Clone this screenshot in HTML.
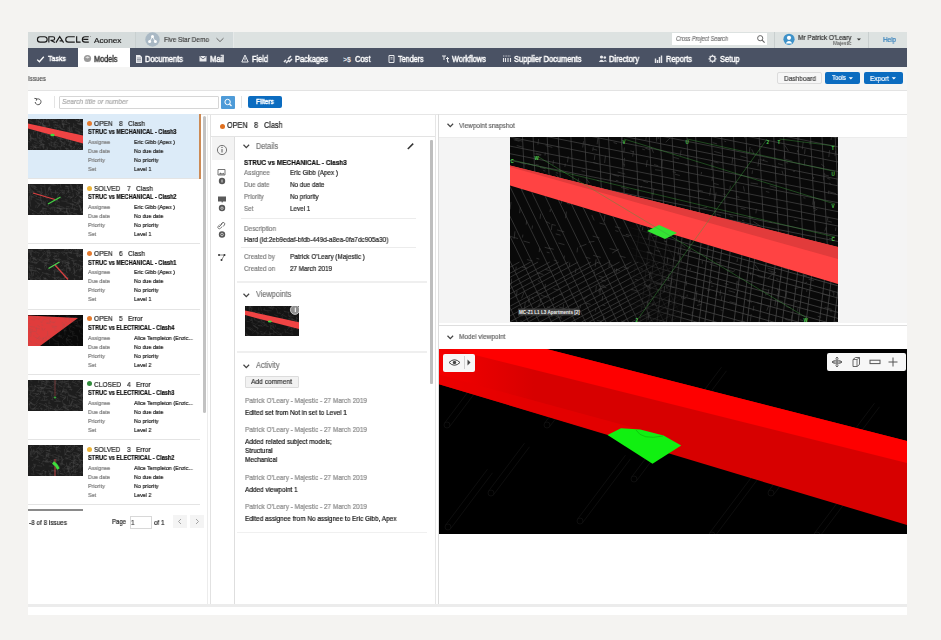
<!DOCTYPE html><html><head><meta charset="utf-8"><style>*{box-sizing:border-box;margin:0;padding:0}html,body{width:941px;height:640px;overflow:hidden;background:#f4f3f1;font-family:"Liberation Sans",sans-serif}.a{position:absolute;white-space:nowrap}.t{line-height:1;transform-origin:0 0;will-change:transform;-webkit-text-stroke:0.2px currentColor}svg.a{overflow:hidden}</style></head><body>
<div class="a" style="left:28px;top:32px;width:879px;height:16px;background:#dde2e1;"></div>
<div class="a" style="left:28px;top:32px;width:107px;height:16px;background:#d6dcdc;"></div>
<div class="a" style="left:136px;top:32px;width:97px;height:16px;background:#d3dadb;"></div>
<div class="a" style="left:135px;top:32px;width:1px;height:16px;background:#c9d0d0;"></div>
<div class="a" style="left:233px;top:32px;width:1px;height:16px;background:#e6e9e9;"></div>
<svg class="a" style="left:36px;top:35px;" width="58" height="9" viewBox="0 0 58 9"><g fill="none" stroke="#1a1a1a" stroke-width="1.15"><path d="M4.1 1.75H8.5A2.65 2.65 0 0 1 8.5 7.05H4.1A2.65 2.65 0 0 1 4.1 1.75Z"/><path d="M12.85 7.6V1.75H16.9A1.75 1.75 0 0 1 16.9 5.25H14.6L18.9 7.6"/><path d="M19.9 7.6L23.7 1.6L27.6 7.6M23.6 5.9H26.2"/><path d="M38.8 1.75H32.4A2.65 2.65 0 0 0 32.4 7.05H38.8"/><path d="M40.65 1.2V7.05H44.6"/><path d="M52.8 1.75H49A2.65 2.65 0 0 0 49 7.05H52.8M47.2 4.4H52.3"/></g><circle cx="54.6" cy="1.6" r=".45" fill="#444"/></svg>
<div class="a t" style="left:93.50px;top:36.56px;font-size:7.85px;color:#222;transform:scaleX(1.050);">Aconex</div>
<svg class="a" style="left:145px;top:32px;" width="16" height="16" viewBox="0 0 16 16"><circle cx="7.5" cy="7.5" r="7.2" fill="#a9b8c4"/><circle cx="7.5" cy="4.6" r="1.5" fill="#fff"/><circle cx="4.6" cy="9.6" r="1.5" fill="#fff"/><circle cx="10.4" cy="9.6" r="1.5" fill="#fff"/><path d="M7.5 4.6L4.6 9.6M7.5 4.6L10.4 9.6" stroke="#fff" stroke-width=".8"/></svg>
<div class="a t" style="left:164.00px;top:36.05px;font-size:7.27px;color:#444;transform:scaleX(0.891);">Five Star Demo</div>
<svg class="a" style="left:214px;top:35px;" width="12" height="10" viewBox="0 0 12 10"><path d="M2.5 3.2L6 6.6L9.5 3.2" fill="none" stroke="#666" stroke-width="1"/></svg>
<div class="a" style="left:672px;top:33px;width:95px;height:12px;background:#fff;"></div>
<div class="a t" style="left:675.50px;top:36.20px;font-size:6.33px;color:#777;transform:scaleX(0.870);font-style:italic;">Cross Project Search</div>
<svg class="a" style="left:756px;top:34px;" width="10" height="10" viewBox="0 0 10 10"><circle cx="4.2" cy="4.2" r="2.6" fill="none" stroke="#666" stroke-width="1"/><path d="M6.1 6.1L8.6 8.6" stroke="#666" stroke-width="1.2"/></svg>
<div class="a" style="left:774px;top:32px;width:1px;height:16px;background:#c9cfcf;"></div>
<svg class="a" style="left:783px;top:33px;" width="13" height="13" viewBox="0 0 13 13"><circle cx="6" cy="6.3" r="5.6" fill="#3f92c9"/><circle cx="6" cy="4.8" r="2.1" fill="#fff"/><path d="M2.6 10.4Q6 5.8 9.4 10.4Z" fill="#fff"/></svg>
<div class="a t" style="left:798.00px;top:33.82px;font-size:7.46px;color:#333;transform:scaleX(0.870);">Mr Patrick O'Leary</div>
<div class="a t" style="left:833.00px;top:41.28px;font-size:5.80px;color:#444;transform:scaleX(0.870);-webkit-text-stroke:0;">Majestic</div>
<svg class="a" style="left:856px;top:37px;" width="6" height="5" viewBox="0 0 6 5"><path d="M0.8 1.5L5 1.5L2.9 3.6Z" fill="#333"/></svg>
<div class="a" style="left:868px;top:32px;width:1px;height:16px;background:#c9cfcf;"></div>
<div class="a t" style="left:883.00px;top:36.05px;font-size:7.27px;color:#2b7bb9;transform:scaleX(0.870);">Help</div>
<div class="a" style="left:28px;top:48px;width:879px;height:19px;background:#4a5264;"></div>
<div class="a" style="left:78px;top:48px;width:52px;height:19px;background:#fff;"></div>
<div class="a t" style="left:48.00px;top:54.94px;font-size:7.97px;color:#fff;transform:scaleX(0.870);-webkit-text-stroke:0.45px #fff;">Tasks</div>
<div class="a t" style="left:145.00px;top:54.83px;font-size:8.64px;color:#fff;transform:scaleX(0.870);-webkit-text-stroke:0.45px #fff;">Documents</div>
<div class="a t" style="left:210.00px;top:54.81px;font-size:8.78px;color:#fff;transform:scaleX(0.870);-webkit-text-stroke:0.45px #fff;">Mail</div>
<div class="a t" style="left:251.50px;top:54.85px;font-size:8.48px;color:#fff;transform:scaleX(0.870);-webkit-text-stroke:0.45px #fff;">Field</div>
<div class="a t" style="left:295.00px;top:54.83px;font-size:8.64px;color:#fff;transform:scaleX(0.870);-webkit-text-stroke:0.45px #fff;">Packages</div>
<div class="a t" style="left:355.00px;top:54.83px;font-size:8.66px;color:#fff;transform:scaleX(0.870);-webkit-text-stroke:0.45px #fff;">Cost</div>
<div class="a t" style="left:398.00px;top:54.88px;font-size:8.30px;color:#fff;transform:scaleX(0.870);-webkit-text-stroke:0.45px #fff;">Tenders</div>
<div class="a t" style="left:452.00px;top:54.86px;font-size:8.47px;color:#fff;transform:scaleX(0.870);-webkit-text-stroke:0.45px #fff;">Workflows</div>
<div class="a t" style="left:513.50px;top:54.83px;font-size:8.62px;color:#fff;transform:scaleX(0.870);-webkit-text-stroke:0.45px #fff;">Supplier Documents</div>
<div class="a t" style="left:608.50px;top:54.83px;font-size:8.62px;color:#fff;transform:scaleX(0.870);-webkit-text-stroke:0.45px #fff;">Directory</div>
<div class="a t" style="left:666.00px;top:54.85px;font-size:8.54px;color:#fff;transform:scaleX(0.870);-webkit-text-stroke:0.45px #fff;">Reports</div>
<div class="a t" style="left:719.50px;top:54.84px;font-size:8.58px;color:#fff;transform:scaleX(0.870);-webkit-text-stroke:0.45px #fff;">Setup</div>
<div class="a t" style="left:94.00px;top:54.87px;font-size:8.38px;color:#333;transform:scaleX(0.870);-webkit-text-stroke:0.4px #333;">Models</div>
<svg class="a" style="left:36px;top:54.5px;" width="9" height="9" viewBox="0 0 9 9"><path d="M1.2 4.6L3.4 6.8L7.8 1.8" fill="none" stroke="#fff" stroke-width="1.3"/></svg>
<svg class="a" style="left:83px;top:53.5px;" width="9" height="9" viewBox="0 0 9 9"><circle cx="4.5" cy="4.5" r="3.6" fill="#9a9a9a"/><path d="M2.2 3.4L4.5 2.3L6.8 3.4L4.5 4.5Z" fill="#ddd"/></svg>
<svg class="a" style="left:135px;top:53.5px;" width="8" height="10" viewBox="0 0 8 10"><path d="M1 1H5L7 3V9H1Z" fill="#e8e9ec"/><path d="M2 4H6M2 5.5H6M2 7H6" stroke="#4a5264" stroke-width=".5"/></svg>
<svg class="a" style="left:199px;top:54.5px;" width="9" height="8" viewBox="0 0 9 8"><path d="M0.5 1H7.5V6.5H0.5Z" fill="#e8e9ec"/><path d="M0.8 1.3L4 4L7.2 1.3" fill="none" stroke="#4a5264" stroke-width=".8"/></svg>
<svg class="a" style="left:241px;top:53.5px;" width="8" height="10" viewBox="0 0 8 10"><path d="M4 1L7.2 8H0.8Z" fill="none" stroke="#e8e9ec" stroke-width="1"/><path d="M4 3.5V6.5" stroke="#e8e9ec" stroke-width="1"/></svg>
<svg class="a" style="left:283px;top:53.5px;" width="10" height="10" viewBox="0 0 10 10"><path d="M1 8L3 6M3 9L6 6M5 5L8 2M6 8L9 5" stroke="#e8e9ec" stroke-width="1.6"/></svg>
<svg class="a" style="left:343px;top:53.5px;" width="10" height="10" viewBox="0 0 10 10"><text x="0" y="7.5" font-size="7" fill="#e8e9ec" font-family="Liberation Sans" font-weight="bold">&gt;$</text></svg>
<svg class="a" style="left:388px;top:53.5px;" width="8" height="10" viewBox="0 0 8 10"><path d="M1 1.5H6V8.5H1Z" fill="none" stroke="#e8e9ec" stroke-width="1"/><path d="M2.5 3.5H4.5M2.5 5H4.5" stroke="#e8e9ec" stroke-width=".7"/></svg>
<svg class="a" style="left:441px;top:53.5px;" width="9" height="10" viewBox="0 0 9 10"><path d="M1 2H5M3 2V6M5 4.5H8M6.5 3V8H8" fill="none" stroke="#e8e9ec" stroke-width="1"/></svg>
<svg class="a" style="left:502px;top:53.5px;" width="10" height="10" viewBox="0 0 10 10"><path d="M1 2H9" stroke="#e8e9ec" stroke-width=".8" stroke-dasharray="1 .6"/><path d="M1.5 4V8M3.5 4V8M6 4V8M8.5 4V8" stroke="#e8e9ec" stroke-width="1.1"/></svg>
<svg class="a" style="left:598px;top:53.5px;" width="10" height="10" viewBox="0 0 10 10"><circle cx="3.5" cy="3" r="1.6" fill="#e8e9ec"/><path d="M0.8 8Q3.5 3.5 6.2 8Z" fill="#e8e9ec"/><circle cx="6.8" cy="3.5" r="1.3" fill="#e8e9ec"/><path d="M5.5 7.5Q7 4.5 9 7.5" fill="#e8e9ec"/></svg>
<svg class="a" style="left:654px;top:53.5px;" width="10" height="10" viewBox="0 0 10 10"><path d="M1.5 4.5V9M3.5 6V9M5.5 3V9M7.5 1.5V9" stroke="#e8e9ec" stroke-width="1.4"/></svg>
<svg class="a" style="left:708px;top:53.5px;" width="10" height="10" viewBox="0 0 10 10"><circle cx="4.5" cy="4.8" r="2.6" fill="none" stroke="#e8e9ec" stroke-width="1.3"/><path d="M4.5 0.8V2M4.5 7.6V8.8M0.5 4.8H1.7M7.3 4.8H8.5M1.7 2L2.5 2.8M6.5 6.8L7.3 7.6M1.7 7.6L2.5 6.8M6.5 2.8L7.3 2" stroke="#e8e9ec" stroke-width="1.2"/></svg>
<div class="a" style="left:28px;top:67px;width:879px;height:23px;background:#f5f5f4;"></div>
<div class="a t" style="left:28.00px;top:75.45px;font-size:7.27px;color:#555;transform:scaleX(0.857);">Issues</div>
<div class="a" style="left:777px;top:72px;width:45px;height:12px;background:#f6f6f6;border:1px solid #dcdcdc;border-radius:2px;"></div>
<div class="a t" style="left:784.00px;top:74.61px;font-size:7.52px;color:#444;transform:scaleX(0.870);">Dashboard</div>
<div class="a" style="left:825px;top:72px;width:35px;height:12px;background:#0b6cc0;border-radius:2px;"></div>
<div class="a t" style="left:831.50px;top:74.72px;font-size:6.82px;color:#fff;transform:scaleX(0.870);">Tools</div>
<svg class="a" style="left:848px;top:76px;" width="6" height="5" viewBox="0 0 6 5"><path d="M0.7 1.2L5 1.2L2.85 3.6Z" fill="#fff"/></svg>
<div class="a" style="left:864px;top:72px;width:39px;height:12px;background:#0b6cc0;border-radius:2px;"></div>
<div class="a t" style="left:870.00px;top:74.60px;font-size:7.56px;color:#fff;transform:scaleX(0.870);">Export</div>
<svg class="a" style="left:891px;top:76px;" width="6" height="5" viewBox="0 0 6 5"><path d="M0.7 1.2L5 1.2L2.85 3.6Z" fill="#fff"/></svg>
<div class="a" style="left:28px;top:90px;width:879px;height:1px;background:#e3e3e3;"></div>
<div class="a" style="left:28px;top:91px;width:879px;height:23px;background:#fff;"></div>
<svg class="a" style="left:33px;top:97px;" width="10" height="10" viewBox="0 0 10 10"><path d="M2.2 5A2.9 2.9 0 1 0 3.1 2.7" fill="none" stroke="#555" stroke-width="1"/><path d="M1.4 1.4L3.6 1.6L3.3 3.7" fill="none" stroke="#555" stroke-width="1"/></svg>
<div class="a" style="left:54px;top:96px;width:1px;height:12px;background:#e4e4e4;"></div>
<div class="a" style="left:59px;top:96px;width:160px;height:13px;background:#fff;border:1px solid #d6d6d6;border-radius:1px;"></div>
<div class="a t" style="left:61.50px;top:98.38px;font-size:7.71px;color:#aaa;transform:scaleX(0.870);font-style:italic;">Search title or number</div>
<div class="a" style="left:221px;top:96px;width:14px;height:13px;background:#4e9bd8;border-radius:1px;"></div>
<svg class="a" style="left:222px;top:97px;" width="12" height="11" viewBox="0 0 12 11"><circle cx="5.6" cy="5" r="2.7" fill="none" stroke="#fff" stroke-width="1"/><path d="M7.5 7L9.5 9" stroke="#fff" stroke-width="1.2"/></svg>
<div class="a" style="left:241px;top:96px;width:1px;height:12px;background:#e4e4e4;"></div>
<div class="a" style="left:248px;top:96px;width:34px;height:12px;background:#0b6cc0;border-radius:2px;"></div>
<div class="a t" style="left:256.00px;top:98.29px;font-size:7.60px;color:#fff;transform:scaleX(0.870);-webkit-text-stroke:0.4px #fff;">Filters</div>
<div class="a" style="left:28px;top:114px;width:879px;height:1px;background:#e6e6e6;"></div>
<div class="a" style="left:28px;top:115px;width:879px;height:489px;background:#fff;"></div>
<div class="a" style="left:28px;top:114.0px;width:172px;height:65px;background:#dcebf8;"></div>
<div class="a" style="left:28px;top:178.2px;width:172px;height:1px;background:#e4e4e4;"></div>
<svg class="a" style="left:28px;top:119.0px;" width="55" height="31" viewBox="0 0 55 31"><rect width="55" height="31" fill="#1d1d1d"/><g stroke="#7a7a7a" stroke-width="0.4" opacity="0.5"><line x1="13.1" y1="16.9" x2="13.6" y2="13.3"/><line x1="31.9" y1="18.8" x2="35.5" y2="20.6"/><line x1="10.5" y1="22.2" x2="14.0" y2="23.4"/><line x1="35.1" y1="4.7" x2="38.5" y2="0.1"/><line x1="21.4" y1="0.5" x2="26.1" y2="2.0"/><line x1="32.5" y1="9.3" x2="35.0" y2="10.3"/><line x1="32.7" y1="28.5" x2="33.2" y2="34.1"/><line x1="21.7" y1="24.8" x2="21.7" y2="26.9"/><line x1="20.1" y1="1.1" x2="21.7" y2="6.7"/><line x1="24.0" y1="19.4" x2="23.7" y2="14.2"/><line x1="31.6" y1="16.6" x2="32.3" y2="22.1"/><line x1="37.5" y1="28.8" x2="41.4" y2="30.5"/><line x1="38.3" y1="21.7" x2="39.1" y2="16.2"/><line x1="31.3" y1="22.1" x2="36.9" y2="24.2"/><line x1="14.7" y1="3.9" x2="14.9" y2="9.8"/><line x1="4.9" y1="24.8" x2="4.9" y2="26.4"/><line x1="23.5" y1="12.9" x2="27.7" y2="13.2"/><line x1="2.5" y1="22.3" x2="2.4" y2="16.6"/><line x1="15.3" y1="7.3" x2="17.2" y2="7.6"/><line x1="33.0" y1="1.0" x2="35.5" y2="2.3"/><line x1="14.5" y1="21.4" x2="17.3" y2="22.7"/><line x1="7.6" y1="26.7" x2="8.3" y2="30.5"/><line x1="35.4" y1="18.5" x2="41.3" y2="18.7"/><line x1="44.6" y1="8.4" x2="46.6" y2="6.7"/><line x1="16.6" y1="30.3" x2="19.6" y2="30.7"/><line x1="43.4" y1="30.6" x2="42.4" y2="26.4"/><line x1="34.8" y1="1.9" x2="36.8" y2="-0.5"/><line x1="50.5" y1="18.9" x2="50.6" y2="17.3"/><line x1="3.3" y1="21.0" x2="2.9" y2="17.4"/><line x1="32.6" y1="9.9" x2="31.8" y2="5.1"/><line x1="46.4" y1="8.2" x2="50.9" y2="10.4"/><line x1="1.5" y1="17.6" x2="3.7" y2="14.6"/><line x1="36.0" y1="8.4" x2="35.4" y2="4.9"/><line x1="38.4" y1="3.2" x2="39.1" y2="-1.3"/><line x1="12.3" y1="25.1" x2="17.1" y2="25.7"/><line x1="12.0" y1="17.6" x2="11.7" y2="15.6"/><line x1="29.1" y1="5.9" x2="32.4" y2="8.3"/><line x1="47.5" y1="10.5" x2="51.9" y2="13.3"/><line x1="19.0" y1="4.0" x2="18.9" y2="-1.3"/><line x1="25.6" y1="19.7" x2="25.4" y2="16.3"/><line x1="50.6" y1="4.8" x2="55.7" y2="6.1"/><line x1="34.2" y1="15.8" x2="39.5" y2="17.9"/><line x1="12.2" y1="23.1" x2="16.2" y2="25.9"/><line x1="53.0" y1="16.9" x2="57.8" y2="19.2"/><line x1="53.4" y1="3.7" x2="58.9" y2="4.4"/><line x1="38.2" y1="28.6" x2="38.4" y2="30.2"/><line x1="41.0" y1="5.3" x2="40.8" y2="3.8"/><line x1="29.5" y1="1.7" x2="31.6" y2="1.7"/><line x1="53.5" y1="16.8" x2="56.0" y2="18.5"/><line x1="10.9" y1="16.6" x2="13.3" y2="17.5"/><line x1="15.1" y1="27.6" x2="16.5" y2="28.2"/><line x1="34.6" y1="26.7" x2="37.0" y2="27.6"/><line x1="34.0" y1="16.1" x2="38.8" y2="17.3"/><line x1="0.1" y1="1.7" x2="1.8" y2="1.9"/><line x1="26.6" y1="1.0" x2="28.7" y2="-2.1"/><line x1="17.4" y1="9.8" x2="17.1" y2="6.5"/><line x1="16.7" y1="8.2" x2="16.6" y2="6.1"/><line x1="0.2" y1="22.4" x2="2.4" y2="23.2"/><line x1="20.5" y1="18.7" x2="24.3" y2="20.9"/><line x1="2.4" y1="27.5" x2="6.0" y2="28.2"/><line x1="38.7" y1="13.0" x2="39.7" y2="11.9"/><line x1="12.0" y1="8.4" x2="15.4" y2="8.5"/><line x1="23.4" y1="27.3" x2="23.0" y2="21.7"/><line x1="43.5" y1="8.1" x2="44.0" y2="13.8"/><line x1="40.2" y1="26.3" x2="44.5" y2="27.7"/><line x1="40.4" y1="17.5" x2="44.8" y2="19.2"/><line x1="26.0" y1="7.3" x2="26.7" y2="9.1"/><line x1="5.5" y1="27.3" x2="8.2" y2="28.6"/><line x1="46.9" y1="0.8" x2="51.9" y2="2.4"/><line x1="52.4" y1="18.0" x2="58.0" y2="19.9"/><line x1="31.0" y1="16.4" x2="35.8" y2="17.1"/><line x1="51.4" y1="1.9" x2="51.7" y2="-0.4"/><line x1="4.3" y1="30.9" x2="6.9" y2="27.6"/><line x1="41.4" y1="12.2" x2="41.5" y2="6.5"/><line x1="30.6" y1="30.0" x2="31.6" y2="35.7"/><line x1="22.7" y1="23.2" x2="26.6" y2="24.2"/><line x1="31.9" y1="28.6" x2="34.9" y2="25.5"/><line x1="49.4" y1="4.6" x2="52.9" y2="5.5"/><line x1="38.4" y1="29.5" x2="40.7" y2="30.1"/><line x1="14.7" y1="6.2" x2="20.3" y2="7.3"/><line x1="46.8" y1="16.7" x2="51.1" y2="18.6"/><line x1="22.7" y1="26.5" x2="27.8" y2="28.6"/><line x1="16.9" y1="8.3" x2="18.9" y2="9.3"/><line x1="19.8" y1="10.0" x2="22.5" y2="12.0"/><line x1="38.4" y1="21.7" x2="43.4" y2="23.2"/><line x1="45.2" y1="17.3" x2="45.1" y2="19.1"/><line x1="52.1" y1="24.3" x2="54.6" y2="24.9"/><line x1="12.9" y1="22.2" x2="14.3" y2="20.2"/><line x1="14.0" y1="27.6" x2="16.1" y2="28.5"/><line x1="38.8" y1="26.6" x2="38.5" y2="24.9"/><line x1="10.1" y1="2.8" x2="11.9" y2="3.4"/><line x1="45.9" y1="9.0" x2="45.6" y2="4.2"/><line x1="18.5" y1="0.9" x2="18.3" y2="-2.8"/><line x1="11.6" y1="18.1" x2="12.4" y2="22.0"/><line x1="6.6" y1="8.5" x2="8.9" y2="6.0"/><line x1="29.0" y1="7.8" x2="32.0" y2="8.9"/><line x1="42.5" y1="23.5" x2="42.6" y2="19.0"/><line x1="51.9" y1="25.3" x2="57.4" y2="27.3"/><line x1="37.0" y1="16.6" x2="40.6" y2="17.8"/><line x1="3.3" y1="9.1" x2="4.9" y2="7.5"/><line x1="35.5" y1="19.6" x2="41.0" y2="20.9"/><line x1="25.0" y1="3.4" x2="28.0" y2="3.5"/><line x1="39.6" y1="18.5" x2="42.0" y2="18.8"/><line x1="26.5" y1="24.2" x2="29.2" y2="20.3"/><line x1="41.5" y1="16.8" x2="42.8" y2="15.4"/><line x1="14.9" y1="1.7" x2="18.6" y2="2.1"/><line x1="13.6" y1="23.8" x2="14.3" y2="18.1"/><line x1="24.7" y1="25.1" x2="29.9" y2="26.1"/><line x1="6.2" y1="8.4" x2="10.0" y2="9.7"/><line x1="50.0" y1="3.5" x2="52.1" y2="0.8"/><line x1="40.9" y1="25.3" x2="43.4" y2="21.8"/><line x1="47.3" y1="24.7" x2="51.2" y2="25.6"/><line x1="11.1" y1="7.8" x2="16.0" y2="9.9"/><line x1="24.5" y1="12.6" x2="28.1" y2="14.4"/><line x1="32.1" y1="19.6" x2="34.8" y2="20.4"/><line x1="47.3" y1="15.0" x2="51.6" y2="15.3"/><line x1="5.9" y1="23.4" x2="9.6" y2="24.6"/><line x1="25.3" y1="6.0" x2="30.5" y2="6.4"/><line x1="50.9" y1="29.3" x2="56.5" y2="30.9"/><line x1="49.1" y1="4.2" x2="54.4" y2="6.1"/><line x1="1.4" y1="19.2" x2="5.3" y2="19.3"/><line x1="51.1" y1="10.0" x2="55.3" y2="12.0"/><line x1="4.4" y1="26.0" x2="8.1" y2="28.9"/><line x1="40.7" y1="10.7" x2="42.3" y2="11.3"/><line x1="11.0" y1="21.7" x2="12.9" y2="22.2"/><line x1="2.3" y1="2.4" x2="5.4" y2="3.6"/><line x1="26.0" y1="2.1" x2="30.0" y2="4.1"/><line x1="16.8" y1="14.4" x2="19.7" y2="16.3"/><line x1="25.0" y1="1.2" x2="24.8" y2="-2.0"/><line x1="29.1" y1="18.5" x2="33.6" y2="20.9"/><line x1="14.2" y1="11.5" x2="16.3" y2="12.6"/><line x1="11.5" y1="5.3" x2="12.2" y2="9.6"/><line x1="7.7" y1="18.9" x2="8.0" y2="20.6"/><line x1="1.2" y1="13.9" x2="2.9" y2="18.3"/><line x1="13.2" y1="1.2" x2="15.2" y2="6.7"/><line x1="12.0" y1="2.9" x2="12.9" y2="5.8"/><line x1="6.4" y1="28.3" x2="11.2" y2="28.4"/><line x1="15.1" y1="24.4" x2="15.5" y2="30.2"/><line x1="26.9" y1="17.4" x2="30.9" y2="19.0"/><line x1="19.0" y1="2.9" x2="20.3" y2="1.5"/><line x1="34.0" y1="3.2" x2="35.3" y2="1.4"/><line x1="2.0" y1="1.7" x2="4.1" y2="-0.5"/><line x1="49.5" y1="23.5" x2="50.0" y2="17.9"/><line x1="51.7" y1="1.1" x2="52.0" y2="-3.3"/><line x1="21.7" y1="29.4" x2="23.5" y2="30.2"/><line x1="21.4" y1="10.4" x2="24.0" y2="8.3"/><line x1="46.1" y1="26.8" x2="46.2" y2="30.8"/><line x1="50.8" y1="11.2" x2="51.5" y2="14.7"/><line x1="38.7" y1="10.7" x2="43.1" y2="12.4"/><line x1="33.3" y1="22.0" x2="33.3" y2="23.7"/><line x1="9.4" y1="23.3" x2="13.8" y2="25.6"/><line x1="37.3" y1="3.0" x2="42.1" y2="4.7"/><line x1="3.1" y1="19.0" x2="8.5" y2="20.2"/><line x1="40.3" y1="10.3" x2="39.8" y2="8.0"/><line x1="43.3" y1="28.4" x2="43.3" y2="26.4"/><line x1="4.4" y1="20.1" x2="9.9" y2="22.3"/><line x1="51.4" y1="4.4" x2="54.2" y2="4.7"/><line x1="11.5" y1="26.4" x2="16.4" y2="27.2"/><line x1="33.2" y1="24.4" x2="36.7" y2="25.6"/><line x1="34.2" y1="1.3" x2="35.7" y2="1.8"/><line x1="53.2" y1="6.2" x2="52.5" y2="2.7"/><line x1="12.3" y1="25.7" x2="15.9" y2="25.9"/><line x1="36.8" y1="21.7" x2="37.2" y2="25.2"/><line x1="6.1" y1="25.9" x2="9.3" y2="26.5"/><line x1="6.4" y1="0.2" x2="6.5" y2="-1.6"/><line x1="19.0" y1="15.0" x2="23.2" y2="16.9"/><line x1="20.1" y1="24.3" x2="22.4" y2="25.0"/><line x1="19.3" y1="30.9" x2="18.8" y2="27.4"/><line x1="13.8" y1="10.0" x2="17.7" y2="7.2"/><line x1="48.1" y1="30.6" x2="52.7" y2="31.5"/><line x1="46.9" y1="11.4" x2="52.1" y2="14.0"/><line x1="26.6" y1="24.0" x2="27.4" y2="28.1"/><line x1="1.9" y1="29.7" x2="3.8" y2="29.9"/><line x1="39.7" y1="9.1" x2="43.4" y2="9.2"/><line x1="10.7" y1="6.4" x2="11.3" y2="9.4"/><line x1="40.8" y1="23.2" x2="40.2" y2="19.7"/><line x1="50.0" y1="13.8" x2="54.8" y2="14.6"/><line x1="38.5" y1="30.3" x2="41.1" y2="32.2"/><line x1="8.9" y1="9.7" x2="10.0" y2="15.6"/><line x1="12.2" y1="29.7" x2="11.8" y2="26.1"/><line x1="48.8" y1="25.0" x2="49.2" y2="19.3"/><line x1="28.6" y1="0.4" x2="31.3" y2="-2.3"/><line x1="9.1" y1="1.6" x2="13.6" y2="4.0"/><line x1="19.5" y1="29.9" x2="19.8" y2="28.3"/><line x1="10.2" y1="0.4" x2="10.2" y2="5.7"/><line x1="33.2" y1="25.1" x2="33.8" y2="27.7"/><line x1="44.1" y1="13.0" x2="44.0" y2="11.3"/><line x1="2.1" y1="30.9" x2="6.6" y2="33.2"/><line x1="13.6" y1="4.2" x2="16.3" y2="6.2"/><line x1="41.3" y1="10.5" x2="43.5" y2="10.9"/><line x1="0.9" y1="19.9" x2="3.8" y2="22.2"/><line x1="36.6" y1="28.8" x2="39.5" y2="31.2"/><line x1="20.4" y1="19.6" x2="19.7" y2="15.1"/><line x1="54.6" y1="17.0" x2="54.8" y2="20.5"/><line x1="15.3" y1="7.9" x2="15.7" y2="5.8"/><line x1="17.3" y1="16.2" x2="17.8" y2="18.7"/><line x1="25.2" y1="18.2" x2="24.4" y2="14.2"/><line x1="30.2" y1="15.1" x2="30.7" y2="10.2"/><line x1="14.7" y1="13.5" x2="18.5" y2="14.2"/><line x1="49.3" y1="29.8" x2="51.2" y2="27.6"/><line x1="19.0" y1="20.3" x2="20.6" y2="21.0"/><line x1="11.8" y1="1.2" x2="11.4" y2="-2.1"/><line x1="15.5" y1="4.1" x2="15.2" y2="-1.5"/><line x1="27.2" y1="29.7" x2="29.4" y2="26.5"/><line x1="40.9" y1="26.0" x2="45.2" y2="22.6"/><line x1="51.8" y1="30.2" x2="53.3" y2="28.0"/><line x1="26.6" y1="8.3" x2="28.8" y2="8.8"/><line x1="26.8" y1="5.2" x2="28.8" y2="6.2"/><line x1="54.6" y1="20.9" x2="56.4" y2="18.2"/><line x1="9.9" y1="19.4" x2="9.1" y2="14.3"/><line x1="48.1" y1="1.5" x2="51.2" y2="2.5"/><line x1="5.9" y1="12.1" x2="8.0" y2="12.4"/><line x1="8.0" y1="3.9" x2="8.6" y2="-0.2"/><line x1="51.4" y1="0.2" x2="52.4" y2="-5.6"/><line x1="13.5" y1="11.0" x2="15.2" y2="16.0"/><line x1="26.0" y1="22.9" x2="30.8" y2="24.4"/><line x1="31.3" y1="14.4" x2="33.4" y2="14.7"/><line x1="25.1" y1="11.9" x2="30.0" y2="14.8"/><line x1="46.7" y1="5.6" x2="48.5" y2="6.9"/><line x1="14.6" y1="6.3" x2="16.3" y2="6.8"/><line x1="33.8" y1="5.5" x2="39.2" y2="5.5"/><line x1="43.7" y1="30.7" x2="46.7" y2="27.3"/><line x1="15.1" y1="14.4" x2="17.3" y2="14.7"/><line x1="33.0" y1="10.0" x2="37.3" y2="11.0"/><line x1="32.5" y1="21.8" x2="36.9" y2="25.4"/><line x1="47.4" y1="25.9" x2="47.9" y2="23.1"/><line x1="10.0" y1="18.7" x2="12.8" y2="19.8"/><line x1="35.5" y1="8.8" x2="35.3" y2="5.1"/><line x1="29.2" y1="27.1" x2="32.6" y2="27.9"/><line x1="34.0" y1="2.1" x2="34.6" y2="6.3"/><line x1="16.0" y1="7.3" x2="17.3" y2="13.1"/><line x1="20.2" y1="6.7" x2="22.2" y2="7.1"/><line x1="40.3" y1="12.1" x2="43.1" y2="12.5"/><line x1="27.8" y1="12.4" x2="28.4" y2="7.8"/><line x1="5.7" y1="15.3" x2="5.3" y2="12.2"/><line x1="33.8" y1="4.3" x2="37.2" y2="4.8"/><line x1="10.8" y1="0.9" x2="14.0" y2="-1.4"/><line x1="40.6" y1="25.7" x2="42.6" y2="27.1"/><line x1="18.7" y1="18.1" x2="21.7" y2="19.2"/><line x1="26.1" y1="27.6" x2="26.1" y2="25.6"/></g><polygon points="0,4.5 55,16.5 55,24.5 0,9.5" fill="#f04444"/><ellipse cx="24.5" cy="16" rx="2.2" ry="1.2" fill="#3ddc3d"/></svg>
<div class="a" style="left:87px;top:120.5px;width:5px;height:5px;border-radius:50%;background:#e57a2e"></div>
<div class="a t" style="left:94.20px;top:119.79px;font-size:7.60px;color:#222;transform:scaleX(0.870);">OPEN</div>
<div class="a t" style="left:118.70px;top:119.79px;font-size:7.60px;color:#222;transform:scaleX(0.870);">8</div>
<div class="a t" style="left:127.90px;top:119.79px;font-size:7.60px;color:#222;transform:scaleX(0.870);">Clash</div>
<div class="a t" style="left:87.50px;top:129.29px;font-size:6.36px;color:#111;transform:scaleX(0.870);font-weight:bold;">STRUC vs MECHANICAL - Clash3</div>
<div class="a t" style="left:88.00px;top:139.02px;font-size:6.20px;color:#7c7c7c;transform:scaleX(0.870);">Assignee</div>
<div class="a t" style="left:134.00px;top:139.02px;font-size:6.20px;color:#222;transform:scaleX(0.870);">Eric Gibb (Apex )</div>
<div class="a t" style="left:88.00px;top:148.02px;font-size:6.20px;color:#7c7c7c;transform:scaleX(0.870);">Due date</div>
<div class="a t" style="left:134.00px;top:148.02px;font-size:6.20px;color:#222;transform:scaleX(0.870);">No due date</div>
<div class="a t" style="left:88.00px;top:157.02px;font-size:6.20px;color:#7c7c7c;transform:scaleX(0.870);">Priority</div>
<div class="a t" style="left:134.00px;top:157.02px;font-size:6.20px;color:#222;transform:scaleX(0.870);">No priority</div>
<div class="a t" style="left:88.00px;top:166.02px;font-size:6.20px;color:#7c7c7c;transform:scaleX(0.870);">Set</div>
<div class="a t" style="left:134.00px;top:166.02px;font-size:6.20px;color:#222;transform:scaleX(0.870);">Level 1</div>
<div class="a" style="left:28px;top:179.2px;width:172px;height:65px;background:#fff;"></div>
<div class="a" style="left:28px;top:243.39999999999998px;width:172px;height:1px;background:#e4e4e4;"></div>
<svg class="a" style="left:28px;top:184.2px;" width="55" height="31" viewBox="0 0 55 31"><rect width="55" height="31" fill="#1d1d1d"/><g stroke="#7a7a7a" stroke-width="0.4" opacity="0.5"><line x1="13.0" y1="3.2" x2="13.3" y2="5.1"/><line x1="1.1" y1="17.0" x2="1.5" y2="12.1"/><line x1="12.2" y1="16.6" x2="12.6" y2="11.4"/><line x1="14.4" y1="29.2" x2="19.2" y2="31.1"/><line x1="44.0" y1="6.0" x2="43.4" y2="0.6"/><line x1="52.9" y1="26.3" x2="52.0" y2="22.2"/><line x1="36.9" y1="15.7" x2="39.6" y2="16.2"/><line x1="52.0" y1="25.4" x2="53.4" y2="25.9"/><line x1="16.1" y1="21.9" x2="16.5" y2="18.1"/><line x1="22.8" y1="18.6" x2="23.2" y2="21.1"/><line x1="14.3" y1="24.7" x2="18.6" y2="25.0"/><line x1="15.4" y1="16.6" x2="15.6" y2="18.7"/><line x1="37.1" y1="2.1" x2="40.3" y2="3.3"/><line x1="10.1" y1="13.5" x2="14.1" y2="14.0"/><line x1="49.7" y1="3.1" x2="52.3" y2="4.0"/><line x1="32.0" y1="26.7" x2="34.3" y2="27.1"/><line x1="25.2" y1="1.3" x2="28.6" y2="-3.5"/><line x1="15.7" y1="20.9" x2="15.1" y2="18.2"/><line x1="53.1" y1="24.0" x2="53.3" y2="29.4"/><line x1="37.4" y1="2.4" x2="40.9" y2="2.7"/><line x1="7.5" y1="11.8" x2="9.0" y2="12.2"/><line x1="2.5" y1="5.3" x2="7.3" y2="8.7"/><line x1="31.4" y1="13.6" x2="33.8" y2="14.3"/><line x1="3.3" y1="1.7" x2="8.8" y2="3.7"/><line x1="33.4" y1="16.9" x2="39.3" y2="17.5"/><line x1="6.7" y1="16.4" x2="10.1" y2="19.3"/><line x1="11.0" y1="6.3" x2="11.4" y2="7.9"/><line x1="23.2" y1="7.7" x2="23.3" y2="11.4"/><line x1="1.7" y1="7.9" x2="6.5" y2="9.4"/><line x1="22.9" y1="8.1" x2="21.8" y2="2.6"/><line x1="31.1" y1="30.7" x2="31.0" y2="35.1"/><line x1="47.9" y1="22.2" x2="49.8" y2="22.7"/><line x1="11.6" y1="27.1" x2="15.9" y2="28.1"/><line x1="44.0" y1="19.9" x2="46.2" y2="21.0"/><line x1="44.1" y1="24.8" x2="44.9" y2="19.1"/><line x1="4.1" y1="30.1" x2="5.4" y2="29.0"/><line x1="49.4" y1="4.0" x2="49.5" y2="2.2"/><line x1="9.2" y1="19.7" x2="12.5" y2="20.3"/><line x1="21.5" y1="24.7" x2="22.9" y2="25.4"/><line x1="48.2" y1="3.6" x2="50.8" y2="5.4"/><line x1="12.2" y1="1.7" x2="16.4" y2="2.4"/><line x1="45.0" y1="17.4" x2="48.4" y2="19.2"/><line x1="1.5" y1="1.1" x2="5.5" y2="1.2"/><line x1="14.1" y1="24.0" x2="19.0" y2="25.0"/><line x1="28.8" y1="0.3" x2="30.4" y2="1.1"/><line x1="52.8" y1="14.1" x2="55.4" y2="15.2"/><line x1="12.9" y1="15.1" x2="13.5" y2="17.0"/><line x1="34.2" y1="27.4" x2="37.3" y2="28.8"/><line x1="39.1" y1="13.8" x2="41.0" y2="12.3"/><line x1="16.6" y1="25.9" x2="17.9" y2="29.7"/><line x1="20.4" y1="5.0" x2="22.6" y2="2.0"/><line x1="18.6" y1="16.8" x2="20.1" y2="17.3"/><line x1="17.1" y1="16.9" x2="17.4" y2="21.1"/><line x1="28.9" y1="16.1" x2="29.0" y2="19.2"/><line x1="42.2" y1="30.6" x2="43.1" y2="29.1"/><line x1="49.9" y1="16.9" x2="50.2" y2="20.9"/><line x1="51.5" y1="15.7" x2="52.0" y2="19.2"/><line x1="7.7" y1="23.9" x2="8.2" y2="20.9"/><line x1="23.8" y1="18.8" x2="25.6" y2="17.3"/><line x1="49.6" y1="11.5" x2="53.9" y2="12.9"/><line x1="48.6" y1="2.4" x2="50.4" y2="1.0"/><line x1="36.0" y1="10.1" x2="36.5" y2="5.9"/><line x1="28.8" y1="23.4" x2="33.6" y2="25.2"/><line x1="52.4" y1="4.9" x2="56.6" y2="6.6"/><line x1="54.6" y1="2.4" x2="58.2" y2="2.8"/><line x1="48.7" y1="6.9" x2="51.1" y2="8.6"/><line x1="51.0" y1="12.6" x2="54.7" y2="12.9"/><line x1="12.2" y1="11.4" x2="14.9" y2="8.1"/><line x1="54.8" y1="27.9" x2="55.8" y2="33.6"/><line x1="17.2" y1="13.6" x2="19.5" y2="13.6"/><line x1="29.7" y1="21.5" x2="32.9" y2="22.6"/><line x1="21.4" y1="0.9" x2="27.3" y2="1.0"/><line x1="54.3" y1="28.5" x2="59.6" y2="30.3"/><line x1="41.6" y1="15.0" x2="46.0" y2="11.7"/><line x1="42.8" y1="4.6" x2="44.9" y2="4.9"/><line x1="2.6" y1="12.3" x2="6.4" y2="13.4"/><line x1="52.8" y1="8.1" x2="57.6" y2="8.6"/><line x1="11.3" y1="29.4" x2="13.1" y2="29.6"/><line x1="54.6" y1="9.0" x2="58.2" y2="5.8"/><line x1="36.0" y1="29.5" x2="39.1" y2="26.9"/><line x1="38.2" y1="22.4" x2="41.5" y2="22.6"/><line x1="11.8" y1="9.2" x2="14.1" y2="9.3"/><line x1="48.1" y1="7.9" x2="48.6" y2="10.8"/><line x1="22.0" y1="5.3" x2="23.6" y2="5.6"/><line x1="48.2" y1="0.6" x2="50.3" y2="1.4"/><line x1="46.7" y1="25.5" x2="48.2" y2="25.8"/><line x1="50.1" y1="16.5" x2="54.4" y2="18.7"/><line x1="47.8" y1="21.2" x2="51.3" y2="17.2"/><line x1="45.9" y1="18.2" x2="51.3" y2="19.5"/><line x1="19.6" y1="28.8" x2="22.9" y2="31.4"/><line x1="2.0" y1="19.6" x2="2.1" y2="14.5"/><line x1="32.5" y1="24.3" x2="32.9" y2="27.3"/><line x1="45.9" y1="27.6" x2="46.4" y2="23.2"/><line x1="38.4" y1="18.7" x2="44.1" y2="19.8"/><line x1="51.1" y1="5.5" x2="54.9" y2="6.5"/><line x1="32.9" y1="7.7" x2="35.7" y2="8.8"/><line x1="33.1" y1="4.3" x2="32.0" y2="-1.5"/><line x1="45.5" y1="15.8" x2="48.0" y2="16.0"/><line x1="15.1" y1="29.6" x2="16.3" y2="28.7"/><line x1="38.4" y1="6.6" x2="42.7" y2="8.8"/><line x1="44.9" y1="9.2" x2="45.3" y2="12.5"/><line x1="9.5" y1="15.3" x2="14.6" y2="17.2"/><line x1="16.4" y1="21.4" x2="20.8" y2="23.2"/><line x1="17.7" y1="6.7" x2="17.8" y2="12.3"/><line x1="15.2" y1="23.4" x2="15.1" y2="29.1"/><line x1="22.5" y1="23.3" x2="26.2" y2="24.0"/><line x1="1.7" y1="8.2" x2="1.8" y2="3.8"/><line x1="33.7" y1="9.7" x2="35.5" y2="10.4"/><line x1="11.6" y1="28.9" x2="14.3" y2="25.4"/><line x1="42.0" y1="20.0" x2="47.8" y2="21.4"/><line x1="9.2" y1="7.6" x2="14.0" y2="9.3"/><line x1="17.4" y1="26.9" x2="22.8" y2="28.4"/><line x1="4.2" y1="26.3" x2="8.5" y2="28.4"/><line x1="41.6" y1="24.8" x2="42.6" y2="23.5"/><line x1="17.8" y1="10.2" x2="20.5" y2="11.8"/><line x1="54.5" y1="5.3" x2="56.2" y2="5.5"/><line x1="8.8" y1="29.1" x2="11.4" y2="30.0"/><line x1="50.7" y1="20.8" x2="51.4" y2="23.1"/><line x1="7.6" y1="14.8" x2="10.5" y2="15.4"/><line x1="23.6" y1="12.6" x2="25.2" y2="13.2"/><line x1="8.4" y1="6.8" x2="13.6" y2="8.1"/><line x1="51.6" y1="21.0" x2="52.7" y2="25.6"/><line x1="51.9" y1="5.9" x2="51.3" y2="2.1"/><line x1="1.2" y1="3.7" x2="1.6" y2="-1.1"/><line x1="51.6" y1="15.4" x2="56.3" y2="17.5"/><line x1="44.1" y1="5.1" x2="44.5" y2="8.1"/><line x1="0.3" y1="21.6" x2="2.1" y2="26.3"/><line x1="40.3" y1="13.0" x2="44.4" y2="13.7"/><line x1="3.0" y1="2.4" x2="6.4" y2="4.3"/><line x1="10.0" y1="19.1" x2="11.5" y2="19.3"/><line x1="36.4" y1="11.9" x2="38.3" y2="12.7"/><line x1="2.3" y1="5.7" x2="1.7" y2="0.9"/><line x1="29.8" y1="11.5" x2="32.7" y2="8.1"/><line x1="29.9" y1="29.7" x2="29.6" y2="26.7"/><line x1="29.6" y1="16.9" x2="29.6" y2="11.5"/><line x1="27.2" y1="25.7" x2="31.0" y2="27.3"/><line x1="54.3" y1="4.4" x2="57.4" y2="0.2"/><line x1="29.6" y1="10.7" x2="31.2" y2="11.3"/><line x1="46.0" y1="4.6" x2="47.7" y2="5.0"/><line x1="26.2" y1="26.8" x2="30.8" y2="28.6"/><line x1="29.1" y1="23.4" x2="31.7" y2="24.5"/><line x1="22.9" y1="0.1" x2="28.4" y2="1.4"/><line x1="19.8" y1="6.2" x2="21.8" y2="3.4"/><line x1="50.2" y1="8.8" x2="52.2" y2="10.1"/><line x1="9.5" y1="22.2" x2="14.3" y2="18.6"/><line x1="0.6" y1="0.1" x2="0.5" y2="-3.8"/><line x1="3.6" y1="16.2" x2="3.7" y2="11.9"/><line x1="28.1" y1="17.0" x2="29.3" y2="15.3"/><line x1="53.0" y1="27.6" x2="56.3" y2="29.5"/><line x1="36.6" y1="4.1" x2="41.0" y2="4.3"/><line x1="3.9" y1="29.6" x2="6.6" y2="29.9"/><line x1="35.4" y1="24.0" x2="40.3" y2="24.7"/><line x1="28.9" y1="16.6" x2="32.0" y2="18.3"/><line x1="53.9" y1="30.9" x2="58.0" y2="31.8"/><line x1="31.4" y1="6.0" x2="35.9" y2="7.3"/><line x1="52.5" y1="14.0" x2="52.2" y2="11.8"/><line x1="52.7" y1="26.4" x2="54.9" y2="23.4"/><line x1="16.1" y1="11.4" x2="17.2" y2="9.9"/><line x1="12.8" y1="27.8" x2="14.6" y2="26.4"/><line x1="5.3" y1="30.8" x2="6.9" y2="31.3"/><line x1="51.9" y1="27.2" x2="53.6" y2="25.4"/><line x1="13.5" y1="30.0" x2="14.4" y2="34.2"/><line x1="52.2" y1="13.4" x2="57.2" y2="13.6"/><line x1="5.3" y1="1.7" x2="7.5" y2="2.2"/><line x1="37.6" y1="1.4" x2="40.3" y2="2.8"/><line x1="19.2" y1="21.1" x2="21.1" y2="21.5"/><line x1="20.8" y1="6.6" x2="21.3" y2="3.2"/><line x1="40.2" y1="12.2" x2="44.0" y2="13.0"/><line x1="41.3" y1="2.9" x2="44.9" y2="3.2"/><line x1="40.6" y1="23.5" x2="41.7" y2="27.9"/><line x1="48.9" y1="12.3" x2="52.1" y2="7.7"/><line x1="48.5" y1="30.4" x2="52.0" y2="31.6"/><line x1="54.2" y1="11.4" x2="58.3" y2="12.8"/><line x1="50.8" y1="8.8" x2="50.8" y2="5.0"/><line x1="42.7" y1="25.2" x2="44.2" y2="23.4"/><line x1="26.3" y1="27.2" x2="26.8" y2="23.7"/><line x1="29.2" y1="20.7" x2="29.3" y2="22.2"/><line x1="38.5" y1="23.7" x2="38.5" y2="28.5"/><line x1="10.8" y1="10.3" x2="15.5" y2="11.3"/><line x1="31.0" y1="20.5" x2="31.3" y2="25.5"/><line x1="53.3" y1="28.8" x2="56.3" y2="25.7"/><line x1="45.1" y1="29.3" x2="49.3" y2="30.9"/><line x1="14.0" y1="19.3" x2="17.5" y2="21.0"/><line x1="46.5" y1="14.2" x2="48.8" y2="12.5"/><line x1="2.5" y1="25.4" x2="5.1" y2="26.6"/><line x1="18.0" y1="13.9" x2="19.8" y2="14.3"/><line x1="3.5" y1="13.7" x2="5.5" y2="12.0"/><line x1="26.0" y1="16.6" x2="28.2" y2="17.2"/><line x1="0.3" y1="6.0" x2="5.7" y2="8.1"/><line x1="27.6" y1="10.1" x2="27.6" y2="6.0"/><line x1="38.9" y1="28.4" x2="39.1" y2="23.7"/><line x1="33.9" y1="8.2" x2="36.7" y2="9.3"/><line x1="39.1" y1="27.2" x2="40.7" y2="31.6"/><line x1="2.8" y1="22.7" x2="1.7" y2="17.5"/><line x1="35.2" y1="27.0" x2="40.4" y2="29.0"/><line x1="24.5" y1="22.7" x2="29.9" y2="24.5"/><line x1="5.9" y1="4.5" x2="9.6" y2="5.8"/><line x1="50.9" y1="14.6" x2="51.8" y2="18.6"/><line x1="13.6" y1="19.8" x2="13.6" y2="17.1"/><line x1="37.9" y1="10.3" x2="41.5" y2="5.9"/><line x1="44.6" y1="4.9" x2="49.9" y2="7.0"/><line x1="8.9" y1="24.0" x2="12.0" y2="20.9"/><line x1="33.7" y1="5.9" x2="35.5" y2="6.3"/><line x1="16.8" y1="2.5" x2="17.3" y2="6.9"/><line x1="0.4" y1="8.2" x2="2.5" y2="9.1"/><line x1="44.6" y1="18.0" x2="44.6" y2="15.3"/><line x1="5.6" y1="11.2" x2="9.1" y2="12.6"/><line x1="48.6" y1="10.7" x2="52.7" y2="7.2"/><line x1="27.0" y1="7.6" x2="31.5" y2="9.3"/><line x1="51.3" y1="5.9" x2="55.1" y2="6.6"/><line x1="7.0" y1="5.3" x2="7.0" y2="1.9"/><line x1="40.9" y1="11.3" x2="42.3" y2="10.1"/><line x1="25.3" y1="8.4" x2="29.7" y2="9.1"/><line x1="41.2" y1="28.0" x2="44.8" y2="28.7"/><line x1="53.1" y1="2.7" x2="53.2" y2="0.7"/><line x1="16.6" y1="0.3" x2="17.0" y2="2.5"/><line x1="21.1" y1="5.5" x2="20.8" y2="3.0"/><line x1="29.3" y1="5.9" x2="31.4" y2="4.0"/><line x1="15.0" y1="13.5" x2="18.5" y2="10.3"/><line x1="31.5" y1="24.1" x2="36.7" y2="24.5"/><line x1="1.9" y1="15.3" x2="2.3" y2="9.4"/><line x1="3.1" y1="11.6" x2="5.7" y2="9.4"/><line x1="20.5" y1="10.8" x2="20.4" y2="9.2"/><line x1="40.6" y1="4.3" x2="40.5" y2="9.2"/><line x1="39.5" y1="28.8" x2="40.0" y2="31.9"/><line x1="31.0" y1="24.6" x2="35.3" y2="25.3"/><line x1="28.3" y1="23.9" x2="32.8" y2="25.1"/><line x1="30.8" y1="28.0" x2="33.9" y2="24.3"/><line x1="53.8" y1="0.1" x2="54.4" y2="2.3"/><line x1="45.7" y1="29.2" x2="49.0" y2="29.6"/><line x1="44.2" y1="24.5" x2="49.9" y2="25.5"/><line x1="42.6" y1="2.2" x2="42.0" y2="-2.5"/><line x1="39.4" y1="28.8" x2="44.3" y2="31.1"/><line x1="13.9" y1="8.1" x2="13.1" y2="3.9"/><line x1="23.5" y1="8.2" x2="25.4" y2="8.5"/><line x1="27.3" y1="18.6" x2="27.3" y2="20.7"/><line x1="21.4" y1="24.1" x2="25.4" y2="25.2"/><line x1="51.7" y1="20.9" x2="52.2" y2="23.6"/><line x1="19.2" y1="8.6" x2="21.8" y2="4.8"/><line x1="32.9" y1="22.6" x2="35.7" y2="23.4"/></g><path d="M5 9L27 15.5" stroke="#d94040" stroke-width="1.2"/><path d="M20 20L32.5 13" stroke="#44d444" stroke-width="1.3"/></svg>
<div class="a" style="left:87px;top:185.7px;width:5px;height:5px;border-radius:50%;background:#ebb43a"></div>
<div class="a t" style="left:94.20px;top:184.99px;font-size:7.60px;color:#222;transform:scaleX(0.870);">SOLVED</div>
<div class="a t" style="left:126.78px;top:184.99px;font-size:7.60px;color:#222;transform:scaleX(0.870);">7</div>
<div class="a t" style="left:135.98px;top:184.99px;font-size:7.60px;color:#222;transform:scaleX(0.870);">Clash</div>
<div class="a t" style="left:87.50px;top:194.49px;font-size:6.36px;color:#111;transform:scaleX(0.870);font-weight:bold;">STRUC vs MECHANICAL - Clash2</div>
<div class="a t" style="left:88.00px;top:204.22px;font-size:6.20px;color:#7c7c7c;transform:scaleX(0.870);">Assignee</div>
<div class="a t" style="left:134.00px;top:204.22px;font-size:6.20px;color:#222;transform:scaleX(0.870);">Eric Gibb (Apex )</div>
<div class="a t" style="left:88.00px;top:213.22px;font-size:6.20px;color:#7c7c7c;transform:scaleX(0.870);">Due date</div>
<div class="a t" style="left:134.00px;top:213.22px;font-size:6.20px;color:#222;transform:scaleX(0.870);">No due date</div>
<div class="a t" style="left:88.00px;top:222.22px;font-size:6.20px;color:#7c7c7c;transform:scaleX(0.870);">Priority</div>
<div class="a t" style="left:134.00px;top:222.22px;font-size:6.20px;color:#222;transform:scaleX(0.870);">No priority</div>
<div class="a t" style="left:88.00px;top:231.22px;font-size:6.20px;color:#7c7c7c;transform:scaleX(0.870);">Set</div>
<div class="a t" style="left:134.00px;top:231.22px;font-size:6.20px;color:#222;transform:scaleX(0.870);">Level 1</div>
<div class="a" style="left:28px;top:244.4px;width:172px;height:65px;background:#fff;"></div>
<div class="a" style="left:28px;top:308.6px;width:172px;height:1px;background:#e4e4e4;"></div>
<svg class="a" style="left:28px;top:249.4px;" width="55" height="31" viewBox="0 0 55 31"><rect width="55" height="31" fill="#1d1d1d"/><g stroke="#7a7a7a" stroke-width="0.4" opacity="0.5"><line x1="34.3" y1="23.0" x2="38.7" y2="25.9"/><line x1="35.9" y1="16.4" x2="40.9" y2="19.1"/><line x1="35.7" y1="27.9" x2="41.0" y2="29.0"/><line x1="20.9" y1="3.2" x2="23.4" y2="3.4"/><line x1="15.4" y1="28.4" x2="19.8" y2="30.6"/><line x1="4.0" y1="19.2" x2="4.4" y2="20.6"/><line x1="47.9" y1="6.5" x2="49.9" y2="7.5"/><line x1="9.2" y1="9.7" x2="13.5" y2="11.1"/><line x1="11.3" y1="29.2" x2="14.8" y2="24.5"/><line x1="21.1" y1="0.7" x2="21.7" y2="2.7"/><line x1="3.6" y1="9.3" x2="7.7" y2="10.3"/><line x1="38.9" y1="2.0" x2="39.3" y2="-1.6"/><line x1="17.4" y1="14.9" x2="19.0" y2="12.8"/><line x1="51.6" y1="29.4" x2="51.8" y2="27.9"/><line x1="43.3" y1="11.4" x2="46.7" y2="12.5"/><line x1="38.9" y1="19.3" x2="41.5" y2="19.7"/><line x1="45.1" y1="14.3" x2="48.9" y2="14.9"/><line x1="42.7" y1="3.3" x2="45.1" y2="1.3"/><line x1="16.3" y1="13.4" x2="20.0" y2="13.9"/><line x1="19.9" y1="4.6" x2="20.5" y2="0.7"/><line x1="17.2" y1="9.8" x2="21.1" y2="11.6"/><line x1="39.7" y1="9.6" x2="40.2" y2="11.2"/><line x1="54.3" y1="16.5" x2="56.0" y2="21.1"/><line x1="18.9" y1="7.8" x2="20.1" y2="6.5"/><line x1="50.4" y1="1.0" x2="51.0" y2="3.4"/><line x1="54.0" y1="17.5" x2="58.7" y2="19.2"/><line x1="5.9" y1="13.5" x2="9.2" y2="13.9"/><line x1="7.8" y1="28.6" x2="13.3" y2="30.6"/><line x1="24.9" y1="15.1" x2="26.7" y2="13.0"/><line x1="25.9" y1="28.0" x2="31.7" y2="29.1"/><line x1="52.8" y1="19.4" x2="52.8" y2="21.7"/><line x1="27.1" y1="16.0" x2="30.0" y2="17.0"/><line x1="43.2" y1="24.0" x2="44.4" y2="22.9"/><line x1="16.8" y1="17.3" x2="19.1" y2="14.5"/><line x1="42.3" y1="21.4" x2="42.8" y2="18.4"/><line x1="9.8" y1="26.4" x2="10.2" y2="29.0"/><line x1="36.9" y1="14.4" x2="40.9" y2="16.5"/><line x1="19.6" y1="8.5" x2="20.0" y2="3.3"/><line x1="19.3" y1="26.1" x2="22.1" y2="28.3"/><line x1="20.0" y1="10.4" x2="22.2" y2="11.1"/><line x1="46.0" y1="29.1" x2="46.5" y2="30.9"/><line x1="36.9" y1="12.9" x2="40.8" y2="14.2"/><line x1="36.6" y1="13.0" x2="41.9" y2="14.2"/><line x1="14.9" y1="30.9" x2="18.3" y2="31.4"/><line x1="35.8" y1="6.8" x2="38.6" y2="3.0"/><line x1="54.3" y1="30.4" x2="56.3" y2="30.6"/><line x1="17.5" y1="5.6" x2="20.7" y2="6.7"/><line x1="19.3" y1="20.5" x2="21.8" y2="21.3"/><line x1="49.7" y1="0.0" x2="49.6" y2="5.4"/><line x1="47.7" y1="21.4" x2="49.3" y2="21.6"/><line x1="33.7" y1="2.9" x2="39.4" y2="4.1"/><line x1="16.1" y1="10.9" x2="21.1" y2="12.3"/><line x1="35.3" y1="11.5" x2="38.5" y2="12.0"/><line x1="26.2" y1="6.2" x2="29.1" y2="7.2"/><line x1="49.1" y1="0.0" x2="54.7" y2="1.0"/><line x1="29.7" y1="10.1" x2="33.1" y2="10.6"/><line x1="12.4" y1="9.0" x2="16.3" y2="4.7"/><line x1="50.3" y1="18.5" x2="50.4" y2="15.6"/><line x1="13.8" y1="0.6" x2="13.7" y2="-2.2"/><line x1="26.2" y1="3.8" x2="28.6" y2="4.8"/><line x1="2.2" y1="4.2" x2="3.6" y2="7.9"/><line x1="15.1" y1="29.0" x2="18.6" y2="30.1"/><line x1="46.4" y1="22.4" x2="45.9" y2="18.2"/><line x1="26.1" y1="20.0" x2="31.3" y2="21.9"/><line x1="0.9" y1="3.9" x2="0.8" y2="0.9"/><line x1="16.3" y1="16.4" x2="17.4" y2="20.9"/><line x1="44.7" y1="4.1" x2="48.2" y2="4.6"/><line x1="50.4" y1="27.5" x2="53.8" y2="27.8"/><line x1="44.4" y1="18.4" x2="47.7" y2="15.6"/><line x1="26.5" y1="28.3" x2="27.3" y2="32.8"/><line x1="39.6" y1="27.9" x2="39.6" y2="29.7"/><line x1="46.0" y1="21.5" x2="46.6" y2="25.9"/><line x1="26.0" y1="9.6" x2="29.8" y2="10.8"/><line x1="27.4" y1="10.3" x2="31.2" y2="11.3"/><line x1="2.7" y1="22.7" x2="3.2" y2="17.7"/><line x1="36.5" y1="0.8" x2="37.7" y2="-0.5"/><line x1="22.3" y1="15.1" x2="24.6" y2="16.0"/><line x1="35.5" y1="29.5" x2="40.3" y2="25.9"/><line x1="38.8" y1="13.6" x2="42.0" y2="14.7"/><line x1="8.9" y1="19.3" x2="13.2" y2="20.5"/><line x1="41.0" y1="8.7" x2="45.7" y2="9.8"/><line x1="48.3" y1="4.2" x2="49.8" y2="8.5"/><line x1="26.9" y1="11.0" x2="28.1" y2="9.6"/><line x1="38.4" y1="4.7" x2="40.4" y2="2.8"/><line x1="51.8" y1="17.0" x2="55.7" y2="17.9"/><line x1="14.0" y1="23.3" x2="18.7" y2="25.2"/><line x1="47.5" y1="14.1" x2="48.9" y2="18.6"/><line x1="36.0" y1="2.6" x2="39.0" y2="-1.8"/><line x1="27.9" y1="14.1" x2="27.9" y2="17.7"/><line x1="17.8" y1="24.7" x2="20.9" y2="25.5"/><line x1="46.7" y1="29.3" x2="46.9" y2="31.8"/><line x1="6.4" y1="30.2" x2="8.1" y2="28.4"/><line x1="38.6" y1="11.7" x2="41.4" y2="12.8"/><line x1="33.8" y1="10.8" x2="34.8" y2="15.4"/><line x1="19.7" y1="9.2" x2="23.3" y2="5.3"/><line x1="28.5" y1="18.4" x2="30.8" y2="18.6"/><line x1="3.5" y1="1.2" x2="5.1" y2="1.5"/><line x1="48.9" y1="14.9" x2="52.0" y2="16.4"/><line x1="16.5" y1="29.0" x2="17.4" y2="32.4"/><line x1="10.5" y1="20.3" x2="13.7" y2="20.9"/><line x1="48.4" y1="4.7" x2="47.5" y2="-0.4"/><line x1="41.3" y1="20.8" x2="42.9" y2="21.2"/><line x1="50.8" y1="11.4" x2="55.1" y2="12.9"/><line x1="25.9" y1="29.3" x2="28.7" y2="30.4"/><line x1="25.0" y1="7.4" x2="29.6" y2="8.0"/><line x1="31.6" y1="20.4" x2="37.4" y2="21.3"/><line x1="20.0" y1="9.7" x2="20.4" y2="11.4"/><line x1="54.6" y1="14.5" x2="58.8" y2="16.3"/><line x1="51.7" y1="20.0" x2="51.9" y2="22.7"/><line x1="25.4" y1="14.0" x2="26.5" y2="12.8"/><line x1="30.2" y1="30.7" x2="35.7" y2="32.0"/><line x1="39.4" y1="7.3" x2="44.4" y2="10.1"/><line x1="3.0" y1="7.5" x2="7.8" y2="8.8"/><line x1="2.6" y1="25.8" x2="3.1" y2="27.5"/><line x1="2.1" y1="30.1" x2="6.1" y2="31.7"/><line x1="10.3" y1="7.2" x2="10.5" y2="5.4"/><line x1="54.2" y1="5.0" x2="56.5" y2="6.0"/><line x1="1.0" y1="16.7" x2="1.9" y2="21.6"/><line x1="28.7" y1="4.1" x2="31.4" y2="5.3"/><line x1="24.7" y1="25.6" x2="26.7" y2="26.3"/><line x1="26.6" y1="24.2" x2="26.9" y2="21.3"/><line x1="7.1" y1="2.5" x2="11.9" y2="4.4"/><line x1="53.2" y1="20.7" x2="52.3" y2="16.1"/><line x1="2.6" y1="6.2" x2="3.3" y2="0.8"/><line x1="4.0" y1="23.9" x2="4.2" y2="27.8"/><line x1="49.3" y1="20.3" x2="50.8" y2="20.8"/><line x1="7.9" y1="21.3" x2="11.6" y2="24.3"/><line x1="38.6" y1="8.3" x2="41.8" y2="10.6"/><line x1="17.7" y1="9.5" x2="22.1" y2="10.4"/><line x1="15.7" y1="2.0" x2="17.0" y2="2.9"/><line x1="6.7" y1="30.1" x2="11.5" y2="32.4"/><line x1="52.2" y1="19.0" x2="54.2" y2="19.6"/><line x1="11.1" y1="11.1" x2="16.0" y2="12.8"/><line x1="40.0" y1="3.0" x2="44.2" y2="4.0"/><line x1="7.9" y1="23.7" x2="8.0" y2="25.7"/><line x1="17.4" y1="28.4" x2="17.7" y2="30.6"/><line x1="2.7" y1="20.7" x2="8.2" y2="22.5"/><line x1="32.8" y1="3.2" x2="36.5" y2="5.9"/><line x1="11.4" y1="0.0" x2="16.1" y2="0.5"/><line x1="19.5" y1="14.4" x2="21.8" y2="14.9"/><line x1="30.9" y1="11.1" x2="33.5" y2="12.9"/><line x1="44.5" y1="25.2" x2="48.7" y2="22.0"/><line x1="34.0" y1="12.4" x2="36.5" y2="12.8"/><line x1="21.0" y1="2.9" x2="22.5" y2="7.4"/><line x1="49.5" y1="6.2" x2="52.5" y2="8.2"/><line x1="25.9" y1="16.5" x2="28.8" y2="17.7"/><line x1="0.6" y1="15.9" x2="5.6" y2="17.1"/><line x1="1.2" y1="21.0" x2="4.4" y2="21.4"/><line x1="26.2" y1="21.8" x2="27.1" y2="26.8"/><line x1="31.9" y1="29.0" x2="35.6" y2="30.0"/><line x1="43.9" y1="11.2" x2="48.9" y2="11.3"/><line x1="11.4" y1="8.9" x2="14.5" y2="9.1"/><line x1="31.9" y1="23.5" x2="35.9" y2="19.2"/><line x1="0.8" y1="28.8" x2="5.6" y2="29.4"/><line x1="36.8" y1="29.7" x2="37.1" y2="24.4"/><line x1="40.6" y1="18.9" x2="42.5" y2="19.5"/><line x1="6.7" y1="10.6" x2="9.5" y2="12.2"/><line x1="0.2" y1="12.1" x2="3.7" y2="13.6"/><line x1="11.4" y1="21.0" x2="11.2" y2="19.0"/><line x1="37.9" y1="17.2" x2="40.0" y2="15.7"/><line x1="5.5" y1="9.1" x2="9.5" y2="10.8"/><line x1="49.3" y1="5.2" x2="50.9" y2="3.5"/><line x1="36.1" y1="17.7" x2="40.4" y2="14.3"/><line x1="40.0" y1="12.9" x2="40.8" y2="17.0"/><line x1="13.4" y1="13.0" x2="19.0" y2="14.7"/><line x1="10.3" y1="0.9" x2="14.2" y2="1.6"/><line x1="31.0" y1="13.4" x2="31.0" y2="9.0"/><line x1="38.0" y1="22.6" x2="39.9" y2="23.5"/><line x1="28.6" y1="2.3" x2="32.5" y2="4.1"/><line x1="51.0" y1="7.1" x2="54.7" y2="3.6"/><line x1="46.2" y1="0.0" x2="47.3" y2="-1.5"/><line x1="8.4" y1="19.1" x2="11.7" y2="20.1"/><line x1="17.8" y1="23.9" x2="23.0" y2="26.0"/><line x1="52.6" y1="19.4" x2="54.5" y2="20.0"/><line x1="3.5" y1="6.4" x2="2.7" y2="1.0"/><line x1="54.3" y1="23.7" x2="58.1" y2="24.7"/><line x1="20.6" y1="3.6" x2="22.6" y2="4.4"/><line x1="0.2" y1="11.8" x2="0.5" y2="10.0"/><line x1="41.8" y1="22.4" x2="40.7" y2="17.3"/><line x1="54.9" y1="23.3" x2="57.8" y2="24.7"/><line x1="16.0" y1="15.5" x2="17.4" y2="14.2"/><line x1="6.0" y1="12.7" x2="9.3" y2="13.8"/><line x1="12.1" y1="30.6" x2="12.2" y2="28.7"/><line x1="14.9" y1="3.0" x2="15.4" y2="5.2"/><line x1="46.4" y1="26.5" x2="49.5" y2="26.9"/><line x1="44.6" y1="0.2" x2="49.4" y2="2.0"/><line x1="1.2" y1="17.4" x2="1.2" y2="19.3"/><line x1="53.4" y1="6.0" x2="56.7" y2="7.7"/><line x1="4.7" y1="8.7" x2="7.9" y2="10.7"/><line x1="2.9" y1="12.2" x2="7.6" y2="14.7"/><line x1="51.7" y1="20.5" x2="53.3" y2="20.9"/><line x1="1.3" y1="23.9" x2="1.5" y2="29.1"/><line x1="23.8" y1="27.8" x2="28.2" y2="30.0"/><line x1="49.0" y1="4.6" x2="53.9" y2="6.5"/><line x1="4.2" y1="11.5" x2="4.8" y2="14.1"/><line x1="25.8" y1="8.9" x2="29.5" y2="5.5"/><line x1="41.7" y1="2.4" x2="45.4" y2="-1.8"/><line x1="48.7" y1="6.1" x2="52.2" y2="7.4"/><line x1="17.5" y1="14.2" x2="19.0" y2="19.6"/><line x1="51.6" y1="1.0" x2="53.3" y2="1.7"/><line x1="7.2" y1="20.3" x2="7.4" y2="18.1"/><line x1="28.5" y1="30.2" x2="30.5" y2="28.3"/><line x1="5.8" y1="12.4" x2="5.5" y2="8.7"/><line x1="32.0" y1="29.9" x2="33.9" y2="30.9"/><line x1="1.0" y1="0.4" x2="2.1" y2="3.9"/><line x1="38.8" y1="0.3" x2="41.2" y2="1.2"/><line x1="39.4" y1="7.3" x2="38.6" y2="3.6"/><line x1="2.1" y1="12.0" x2="2.4" y2="8.0"/><line x1="24.2" y1="3.2" x2="27.1" y2="4.5"/><line x1="29.2" y1="22.1" x2="34.7" y2="24.3"/><line x1="16.6" y1="5.2" x2="18.6" y2="2.3"/><line x1="40.5" y1="16.4" x2="41.7" y2="20.0"/><line x1="45.0" y1="11.6" x2="45.9" y2="14.5"/><line x1="27.2" y1="17.5" x2="28.8" y2="18.1"/><line x1="40.8" y1="3.6" x2="43.8" y2="4.4"/><line x1="44.8" y1="15.0" x2="47.3" y2="16.0"/><line x1="45.6" y1="19.4" x2="47.1" y2="24.2"/><line x1="38.6" y1="18.4" x2="38.6" y2="23.6"/><line x1="32.7" y1="17.5" x2="34.0" y2="16.0"/><line x1="25.1" y1="21.5" x2="30.4" y2="22.6"/><line x1="2.2" y1="18.3" x2="6.0" y2="19.1"/><line x1="24.3" y1="17.9" x2="26.2" y2="18.6"/><line x1="3.5" y1="21.2" x2="8.2" y2="21.5"/><line x1="16.7" y1="16.3" x2="18.4" y2="16.8"/><line x1="35.4" y1="26.2" x2="38.2" y2="26.8"/><line x1="24.9" y1="9.3" x2="29.0" y2="11.1"/><line x1="27.4" y1="11.8" x2="29.0" y2="9.7"/><line x1="52.1" y1="6.4" x2="58.0" y2="7.0"/><line x1="35.2" y1="13.6" x2="37.4" y2="14.2"/><line x1="7.6" y1="15.2" x2="11.6" y2="11.1"/><line x1="18.9" y1="0.5" x2="19.9" y2="4.1"/><line x1="29.5" y1="27.9" x2="31.7" y2="28.1"/><line x1="30.4" y1="7.8" x2="30.2" y2="5.8"/><line x1="14.3" y1="11.1" x2="18.6" y2="11.5"/><line x1="35.2" y1="29.6" x2="37.1" y2="30.3"/><line x1="5.3" y1="27.0" x2="5.7" y2="22.9"/><line x1="2.7" y1="30.1" x2="3.6" y2="33.0"/><line x1="42.1" y1="3.1" x2="43.9" y2="3.9"/><line x1="3.5" y1="22.2" x2="3.4" y2="25.6"/><line x1="3.6" y1="2.1" x2="8.2" y2="4.2"/></g><path d="M27 16L40 30.5" stroke="#d94040" stroke-width="1.2"/><path d="M20.5 19.5L31.5 13" stroke="#50d050" stroke-width="1.4"/></svg>
<div class="a" style="left:87px;top:250.9px;width:5px;height:5px;border-radius:50%;background:#e57a2e"></div>
<div class="a t" style="left:94.20px;top:250.19px;font-size:7.60px;color:#222;transform:scaleX(0.870);">OPEN</div>
<div class="a t" style="left:118.70px;top:250.19px;font-size:7.60px;color:#222;transform:scaleX(0.870);">6</div>
<div class="a t" style="left:127.90px;top:250.19px;font-size:7.60px;color:#222;transform:scaleX(0.870);">Clash</div>
<div class="a t" style="left:87.50px;top:259.69px;font-size:6.36px;color:#111;transform:scaleX(0.870);font-weight:bold;">STRUC vs MECHANICAL - Clash1</div>
<div class="a t" style="left:88.00px;top:269.42px;font-size:6.20px;color:#7c7c7c;transform:scaleX(0.870);">Assignee</div>
<div class="a t" style="left:134.00px;top:269.42px;font-size:6.20px;color:#222;transform:scaleX(0.870);">Eric Gibb (Apex )</div>
<div class="a t" style="left:88.00px;top:278.42px;font-size:6.20px;color:#7c7c7c;transform:scaleX(0.870);">Due date</div>
<div class="a t" style="left:134.00px;top:278.42px;font-size:6.20px;color:#222;transform:scaleX(0.870);">No due date</div>
<div class="a t" style="left:88.00px;top:287.42px;font-size:6.20px;color:#7c7c7c;transform:scaleX(0.870);">Priority</div>
<div class="a t" style="left:134.00px;top:287.42px;font-size:6.20px;color:#222;transform:scaleX(0.870);">No priority</div>
<div class="a t" style="left:88.00px;top:296.42px;font-size:6.20px;color:#7c7c7c;transform:scaleX(0.870);">Set</div>
<div class="a t" style="left:134.00px;top:296.42px;font-size:6.20px;color:#222;transform:scaleX(0.870);">Level 1</div>
<div class="a" style="left:28px;top:309.6px;width:172px;height:65px;background:#fff;"></div>
<div class="a" style="left:28px;top:373.8px;width:172px;height:1px;background:#e4e4e4;"></div>
<svg class="a" style="left:28px;top:314.6px;" width="55" height="31" viewBox="0 0 55 31"><rect width="55" height="31" fill="#0a0a0a"/><polygon points="0,0.5 50,3 12,31 0,31" fill="#e03c3c"/><g stroke="#666" stroke-width="0.35" opacity="0.45"><line x1="43.6" y1="25.5" x2="43.7" y2="27.1"/><line x1="8.0" y1="18.2" x2="10.4" y2="19.8"/><line x1="1.2" y1="15.2" x2="4.3" y2="16.4"/><line x1="29.6" y1="21.1" x2="34.0" y2="22.6"/><line x1="40.1" y1="20.5" x2="45.2" y2="22.0"/><line x1="18.5" y1="2.9" x2="20.8" y2="4.1"/><line x1="38.5" y1="23.4" x2="40.5" y2="21.5"/><line x1="52.3" y1="18.2" x2="57.4" y2="20.6"/><line x1="26.8" y1="25.8" x2="31.0" y2="27.1"/><line x1="38.4" y1="25.0" x2="40.9" y2="25.7"/><line x1="23.6" y1="11.1" x2="29.1" y2="11.5"/><line x1="28.9" y1="3.6" x2="31.9" y2="-0.1"/><line x1="20.9" y1="6.9" x2="26.3" y2="7.4"/><line x1="38.4" y1="0.4" x2="42.5" y2="2.0"/><line x1="30.7" y1="20.8" x2="33.9" y2="21.2"/><line x1="21.4" y1="3.9" x2="22.6" y2="7.1"/><line x1="41.0" y1="12.3" x2="42.6" y2="18.0"/><line x1="49.1" y1="20.8" x2="50.1" y2="25.9"/><line x1="43.8" y1="16.0" x2="45.1" y2="21.0"/><line x1="51.7" y1="6.0" x2="54.1" y2="3.1"/><line x1="43.1" y1="5.3" x2="45.7" y2="6.0"/><line x1="44.1" y1="5.8" x2="49.7" y2="6.8"/><line x1="14.0" y1="12.7" x2="14.4" y2="15.4"/><line x1="26.1" y1="14.8" x2="29.6" y2="16.2"/><line x1="34.9" y1="14.5" x2="35.1" y2="8.6"/><line x1="50.8" y1="11.7" x2="55.2" y2="12.1"/><line x1="53.6" y1="22.6" x2="56.1" y2="23.9"/><line x1="0.3" y1="13.9" x2="4.6" y2="14.5"/><line x1="31.3" y1="21.1" x2="30.9" y2="15.4"/><line x1="46.9" y1="1.9" x2="49.6" y2="2.4"/><line x1="0.8" y1="25.0" x2="3.8" y2="27.2"/><line x1="25.8" y1="3.1" x2="26.5" y2="-1.4"/><line x1="13.4" y1="9.9" x2="15.2" y2="10.4"/><line x1="5.8" y1="20.0" x2="5.9" y2="21.8"/><line x1="1.7" y1="17.1" x2="3.5" y2="17.7"/><line x1="34.0" y1="28.3" x2="36.8" y2="30.4"/><line x1="38.2" y1="24.5" x2="40.3" y2="25.5"/><line x1="51.4" y1="14.9" x2="51.9" y2="17.5"/><line x1="39.2" y1="2.0" x2="42.1" y2="3.2"/><line x1="19.8" y1="1.0" x2="22.4" y2="2.0"/><line x1="53.1" y1="13.4" x2="52.7" y2="11.5"/><line x1="44.9" y1="19.8" x2="49.5" y2="21.2"/><line x1="18.5" y1="1.0" x2="22.9" y2="-2.7"/><line x1="38.5" y1="10.6" x2="43.0" y2="11.2"/><line x1="22.0" y1="4.2" x2="23.3" y2="2.9"/><line x1="4.1" y1="16.1" x2="8.7" y2="16.7"/><line x1="10.1" y1="22.9" x2="13.3" y2="23.6"/><line x1="12.3" y1="6.9" x2="14.3" y2="7.5"/><line x1="38.0" y1="23.5" x2="39.4" y2="24.0"/><line x1="44.3" y1="12.0" x2="47.2" y2="13.3"/><line x1="24.3" y1="12.3" x2="28.6" y2="13.3"/><line x1="39.4" y1="20.0" x2="41.7" y2="21.5"/><line x1="10.2" y1="4.6" x2="12.5" y2="2.4"/><line x1="3.4" y1="1.2" x2="7.6" y2="2.6"/><line x1="29.7" y1="20.9" x2="33.7" y2="20.9"/><line x1="43.3" y1="7.0" x2="48.8" y2="8.6"/><line x1="5.1" y1="2.4" x2="7.2" y2="3.2"/><line x1="36.4" y1="3.7" x2="38.6" y2="4.5"/><line x1="37.6" y1="0.9" x2="41.6" y2="3.5"/><line x1="35.8" y1="8.9" x2="37.2" y2="13.9"/><line x1="36.0" y1="16.6" x2="38.5" y2="13.3"/><line x1="14.0" y1="24.5" x2="18.8" y2="21.1"/><line x1="47.9" y1="10.3" x2="52.1" y2="10.4"/><line x1="1.8" y1="11.4" x2="6.7" y2="12.1"/><line x1="19.8" y1="21.5" x2="19.5" y2="16.2"/><line x1="2.8" y1="4.3" x2="6.5" y2="5.0"/><line x1="25.5" y1="8.2" x2="27.5" y2="6.3"/><line x1="7.3" y1="13.0" x2="11.7" y2="13.9"/><line x1="54.0" y1="13.3" x2="57.6" y2="14.2"/><line x1="14.9" y1="4.2" x2="18.3" y2="4.7"/><line x1="44.5" y1="17.9" x2="46.6" y2="18.5"/><line x1="8.4" y1="12.2" x2="8.5" y2="16.1"/><line x1="38.2" y1="25.2" x2="39.4" y2="29.4"/><line x1="21.4" y1="23.9" x2="21.5" y2="29.2"/><line x1="18.6" y1="7.8" x2="22.6" y2="8.7"/><line x1="37.3" y1="6.9" x2="39.0" y2="7.7"/><line x1="34.2" y1="23.8" x2="36.1" y2="21.2"/><line x1="6.9" y1="28.2" x2="12.2" y2="30.2"/><line x1="2.8" y1="16.3" x2="2.8" y2="21.7"/><line x1="18.1" y1="22.1" x2="18.2" y2="26.5"/><line x1="43.9" y1="2.1" x2="48.0" y2="2.6"/><line x1="33.6" y1="30.7" x2="35.4" y2="31.6"/><line x1="37.8" y1="24.1" x2="43.0" y2="24.6"/><line x1="41.5" y1="6.7" x2="40.7" y2="2.0"/><line x1="50.4" y1="5.4" x2="52.4" y2="5.8"/><line x1="26.3" y1="28.8" x2="30.6" y2="28.9"/><line x1="25.1" y1="24.9" x2="27.2" y2="25.2"/><line x1="18.3" y1="8.2" x2="19.8" y2="8.4"/><line x1="48.5" y1="0.9" x2="49.7" y2="-0.4"/><line x1="15.1" y1="22.4" x2="15.1" y2="25.4"/><line x1="40.6" y1="26.6" x2="42.5" y2="27.5"/><line x1="36.7" y1="14.5" x2="37.0" y2="20.3"/><line x1="48.9" y1="4.7" x2="50.1" y2="10.1"/><line x1="51.8" y1="4.0" x2="53.6" y2="4.3"/><line x1="6.7" y1="21.9" x2="11.8" y2="24.8"/><line x1="9.3" y1="10.3" x2="12.0" y2="11.8"/><line x1="30.0" y1="27.4" x2="30.8" y2="32.8"/><line x1="42.3" y1="15.5" x2="46.3" y2="17.0"/><line x1="0.2" y1="27.2" x2="0.6" y2="29.9"/><line x1="46.4" y1="9.9" x2="49.1" y2="11.0"/><line x1="8.5" y1="1.8" x2="12.2" y2="-2.8"/><line x1="20.6" y1="21.9" x2="22.4" y2="22.6"/><line x1="48.1" y1="11.1" x2="51.7" y2="11.9"/><line x1="35.2" y1="14.7" x2="37.1" y2="15.3"/><line x1="40.3" y1="30.1" x2="44.5" y2="31.3"/><line x1="33.5" y1="8.3" x2="34.9" y2="7.3"/><line x1="36.4" y1="15.6" x2="39.1" y2="15.9"/><line x1="53.4" y1="9.3" x2="53.5" y2="11.2"/><line x1="42.1" y1="12.8" x2="43.7" y2="10.6"/><line x1="35.7" y1="9.9" x2="37.2" y2="8.9"/><line x1="36.6" y1="1.9" x2="36.9" y2="4.1"/><line x1="14.5" y1="0.0" x2="14.6" y2="-3.0"/><line x1="22.2" y1="21.8" x2="26.2" y2="24.5"/><line x1="15.6" y1="15.4" x2="17.4" y2="13.1"/><line x1="42.2" y1="28.6" x2="46.9" y2="31.2"/><line x1="8.4" y1="24.3" x2="12.0" y2="21.0"/><line x1="0.7" y1="8.2" x2="2.2" y2="8.7"/><line x1="14.1" y1="6.6" x2="15.6" y2="4.8"/><line x1="7.4" y1="3.1" x2="11.3" y2="4.6"/><line x1="49.1" y1="27.9" x2="49.5" y2="31.5"/></g></svg>
<div class="a" style="left:87px;top:316.1px;width:5px;height:5px;border-radius:50%;background:#e57a2e"></div>
<div class="a t" style="left:94.20px;top:315.39px;font-size:7.60px;color:#222;transform:scaleX(0.870);">OPEN</div>
<div class="a t" style="left:118.70px;top:315.39px;font-size:7.60px;color:#222;transform:scaleX(0.870);">5</div>
<div class="a t" style="left:127.90px;top:315.39px;font-size:7.60px;color:#222;transform:scaleX(0.870);">Error</div>
<div class="a t" style="left:87.50px;top:324.89px;font-size:6.36px;color:#111;transform:scaleX(0.870);font-weight:bold;">STRUC vs ELECTRICAL - Clash4</div>
<div class="a t" style="left:88.00px;top:334.62px;font-size:6.20px;color:#7c7c7c;transform:scaleX(0.870);">Assignee</div>
<div class="a t" style="left:134.00px;top:334.62px;font-size:6.20px;color:#222;transform:scaleX(0.870);">Alice Templeton (Enzic...</div>
<div class="a t" style="left:88.00px;top:343.62px;font-size:6.20px;color:#7c7c7c;transform:scaleX(0.870);">Due date</div>
<div class="a t" style="left:134.00px;top:343.62px;font-size:6.20px;color:#222;transform:scaleX(0.870);">No due date</div>
<div class="a t" style="left:88.00px;top:352.62px;font-size:6.20px;color:#7c7c7c;transform:scaleX(0.870);">Priority</div>
<div class="a t" style="left:134.00px;top:352.62px;font-size:6.20px;color:#222;transform:scaleX(0.870);">No priority</div>
<div class="a t" style="left:88.00px;top:361.62px;font-size:6.20px;color:#7c7c7c;transform:scaleX(0.870);">Set</div>
<div class="a t" style="left:134.00px;top:361.62px;font-size:6.20px;color:#222;transform:scaleX(0.870);">Level 2</div>
<div class="a" style="left:28px;top:374.8px;width:172px;height:65px;background:#fff;"></div>
<div class="a" style="left:28px;top:439.0px;width:172px;height:1px;background:#e4e4e4;"></div>
<svg class="a" style="left:28px;top:379.8px;" width="55" height="31" viewBox="0 0 55 31"><rect width="55" height="31" fill="#1d1d1d"/><g stroke="#7a7a7a" stroke-width="0.4" opacity="0.5"><line x1="17.8" y1="4.7" x2="20.7" y2="0.4"/><line x1="5.2" y1="18.1" x2="7.1" y2="18.2"/><line x1="23.0" y1="7.5" x2="28.1" y2="8.3"/><line x1="6.8" y1="6.9" x2="8.1" y2="5.7"/><line x1="32.2" y1="1.5" x2="37.5" y2="2.2"/><line x1="15.9" y1="4.5" x2="19.8" y2="5.6"/><line x1="37.5" y1="3.2" x2="40.6" y2="4.0"/><line x1="30.1" y1="1.9" x2="33.7" y2="3.0"/><line x1="29.2" y1="24.1" x2="29.7" y2="27.6"/><line x1="16.5" y1="24.6" x2="17.9" y2="23.4"/><line x1="16.5" y1="15.3" x2="16.7" y2="12.6"/><line x1="53.9" y1="3.7" x2="54.8" y2="6.6"/><line x1="51.3" y1="13.1" x2="53.6" y2="9.8"/><line x1="43.4" y1="25.4" x2="43.6" y2="21.2"/><line x1="31.9" y1="14.1" x2="34.5" y2="15.0"/><line x1="38.3" y1="2.0" x2="41.7" y2="-0.9"/><line x1="54.6" y1="25.5" x2="54.9" y2="20.0"/><line x1="19.1" y1="29.2" x2="18.8" y2="27.2"/><line x1="3.2" y1="23.8" x2="6.3" y2="25.1"/><line x1="50.4" y1="15.4" x2="54.2" y2="16.5"/><line x1="48.6" y1="25.4" x2="52.6" y2="27.7"/><line x1="54.3" y1="21.2" x2="54.2" y2="23.3"/><line x1="9.7" y1="7.2" x2="14.9" y2="7.7"/><line x1="10.0" y1="8.7" x2="13.1" y2="9.6"/><line x1="31.1" y1="29.5" x2="35.7" y2="26.0"/><line x1="36.0" y1="22.9" x2="36.1" y2="27.9"/><line x1="48.1" y1="24.7" x2="48.8" y2="27.9"/><line x1="26.5" y1="12.4" x2="28.9" y2="12.7"/><line x1="8.9" y1="10.5" x2="13.0" y2="10.9"/><line x1="29.5" y1="29.4" x2="34.9" y2="29.5"/><line x1="33.8" y1="4.6" x2="34.4" y2="0.4"/><line x1="26.1" y1="3.6" x2="26.0" y2="7.2"/><line x1="26.6" y1="2.7" x2="31.1" y2="4.3"/><line x1="26.3" y1="21.5" x2="32.1" y2="21.5"/><line x1="29.1" y1="4.5" x2="33.6" y2="6.3"/><line x1="16.4" y1="19.9" x2="18.9" y2="20.8"/><line x1="20.2" y1="5.2" x2="23.8" y2="6.7"/><line x1="27.6" y1="19.7" x2="33.3" y2="21.6"/><line x1="46.9" y1="25.0" x2="51.5" y2="27.3"/><line x1="11.0" y1="15.3" x2="11.9" y2="13.9"/><line x1="15.4" y1="8.0" x2="17.6" y2="5.9"/><line x1="44.5" y1="22.4" x2="44.9" y2="19.3"/><line x1="12.1" y1="7.0" x2="15.7" y2="7.9"/><line x1="54.2" y1="18.9" x2="58.5" y2="20.0"/><line x1="44.0" y1="2.6" x2="45.9" y2="-0.0"/><line x1="39.1" y1="6.2" x2="43.3" y2="7.4"/><line x1="4.8" y1="29.3" x2="7.0" y2="26.9"/><line x1="52.1" y1="22.5" x2="53.5" y2="23.2"/><line x1="32.5" y1="14.4" x2="35.6" y2="10.2"/><line x1="53.9" y1="20.4" x2="53.3" y2="16.5"/><line x1="1.2" y1="24.8" x2="4.0" y2="22.2"/><line x1="51.3" y1="13.4" x2="56.4" y2="15.5"/><line x1="1.5" y1="6.6" x2="5.7" y2="7.0"/><line x1="14.3" y1="13.0" x2="19.1" y2="13.6"/><line x1="49.4" y1="20.5" x2="52.1" y2="22.6"/><line x1="50.5" y1="15.6" x2="54.3" y2="15.8"/><line x1="48.0" y1="24.1" x2="53.1" y2="24.1"/><line x1="9.5" y1="14.7" x2="10.5" y2="13.2"/><line x1="37.5" y1="16.5" x2="37.6" y2="18.4"/><line x1="30.8" y1="7.7" x2="30.4" y2="5.8"/><line x1="24.9" y1="0.9" x2="29.0" y2="1.8"/><line x1="27.8" y1="15.9" x2="30.2" y2="12.9"/><line x1="44.4" y1="15.7" x2="49.5" y2="17.8"/><line x1="51.8" y1="8.0" x2="54.1" y2="8.9"/><line x1="24.6" y1="12.9" x2="25.0" y2="14.7"/><line x1="13.2" y1="2.3" x2="14.5" y2="0.7"/><line x1="42.7" y1="29.1" x2="44.3" y2="27.7"/><line x1="48.6" y1="30.0" x2="50.3" y2="30.7"/><line x1="48.7" y1="5.0" x2="50.4" y2="3.7"/><line x1="23.7" y1="16.0" x2="23.5" y2="12.9"/><line x1="5.1" y1="11.3" x2="5.0" y2="7.9"/><line x1="1.0" y1="10.3" x2="6.8" y2="11.0"/><line x1="6.2" y1="28.5" x2="7.9" y2="29.4"/><line x1="14.6" y1="1.2" x2="19.2" y2="3.0"/><line x1="45.1" y1="26.3" x2="47.2" y2="24.7"/><line x1="8.2" y1="28.5" x2="11.1" y2="29.1"/><line x1="15.3" y1="24.8" x2="17.1" y2="25.3"/><line x1="51.6" y1="19.7" x2="55.5" y2="21.3"/><line x1="12.2" y1="8.2" x2="15.2" y2="8.9"/><line x1="30.4" y1="28.7" x2="30.5" y2="27.0"/><line x1="39.0" y1="29.1" x2="41.3" y2="29.6"/><line x1="51.3" y1="19.5" x2="53.9" y2="20.3"/><line x1="27.5" y1="5.5" x2="28.1" y2="-0.4"/><line x1="2.0" y1="0.6" x2="4.3" y2="1.1"/><line x1="26.1" y1="29.0" x2="30.3" y2="30.3"/><line x1="36.1" y1="16.9" x2="36.1" y2="19.8"/><line x1="11.8" y1="7.1" x2="16.1" y2="9.1"/><line x1="35.0" y1="12.5" x2="35.8" y2="7.3"/><line x1="0.8" y1="19.4" x2="0.7" y2="17.6"/><line x1="36.6" y1="11.8" x2="39.3" y2="12.5"/><line x1="13.3" y1="9.1" x2="14.1" y2="11.7"/><line x1="0.2" y1="11.3" x2="0.8" y2="7.4"/><line x1="13.4" y1="29.9" x2="13.1" y2="27.6"/><line x1="18.4" y1="2.6" x2="18.4" y2="0.2"/><line x1="27.8" y1="0.2" x2="28.0" y2="-2.0"/><line x1="32.3" y1="12.2" x2="32.0" y2="9.7"/><line x1="32.2" y1="16.4" x2="37.4" y2="18.4"/><line x1="43.1" y1="18.5" x2="48.5" y2="21.0"/><line x1="8.2" y1="22.4" x2="11.3" y2="18.2"/><line x1="39.3" y1="15.9" x2="39.7" y2="21.0"/><line x1="7.7" y1="16.2" x2="12.7" y2="17.4"/><line x1="0.9" y1="21.3" x2="4.5" y2="24.1"/><line x1="38.1" y1="7.1" x2="42.5" y2="7.4"/><line x1="52.8" y1="11.7" x2="53.4" y2="16.0"/><line x1="34.4" y1="21.1" x2="35.4" y2="24.5"/><line x1="3.9" y1="28.9" x2="7.7" y2="29.0"/><line x1="41.0" y1="14.7" x2="43.6" y2="15.6"/><line x1="40.1" y1="6.4" x2="42.8" y2="4.0"/><line x1="46.5" y1="2.4" x2="47.6" y2="1.1"/><line x1="34.8" y1="6.1" x2="37.4" y2="6.3"/><line x1="40.9" y1="9.4" x2="44.5" y2="9.6"/><line x1="26.7" y1="30.1" x2="31.0" y2="31.6"/><line x1="16.0" y1="16.0" x2="16.9" y2="20.9"/><line x1="54.6" y1="17.0" x2="55.6" y2="11.4"/><line x1="1.0" y1="14.2" x2="6.2" y2="17.1"/><line x1="54.7" y1="12.0" x2="56.6" y2="12.2"/><line x1="41.1" y1="8.1" x2="40.2" y2="3.0"/><line x1="28.0" y1="27.5" x2="30.4" y2="24.7"/><line x1="48.2" y1="12.2" x2="51.9" y2="12.6"/><line x1="24.8" y1="9.4" x2="27.9" y2="10.2"/><line x1="6.7" y1="10.3" x2="7.0" y2="5.0"/><line x1="6.6" y1="28.7" x2="9.2" y2="24.7"/><line x1="13.9" y1="2.0" x2="13.8" y2="6.2"/><line x1="19.8" y1="13.3" x2="20.1" y2="10.5"/><line x1="2.8" y1="20.5" x2="5.0" y2="19.0"/><line x1="14.6" y1="15.8" x2="19.2" y2="17.8"/><line x1="23.5" y1="0.9" x2="28.3" y2="3.8"/><line x1="51.7" y1="17.0" x2="55.0" y2="12.3"/><line x1="22.6" y1="19.1" x2="25.2" y2="20.0"/><line x1="2.7" y1="28.7" x2="6.0" y2="29.3"/><line x1="15.5" y1="7.9" x2="17.7" y2="6.4"/><line x1="36.1" y1="9.3" x2="38.0" y2="9.9"/><line x1="35.4" y1="2.3" x2="38.9" y2="3.7"/><line x1="12.1" y1="28.1" x2="14.0" y2="29.1"/><line x1="10.6" y1="2.8" x2="10.6" y2="-0.1"/><line x1="20.3" y1="25.1" x2="24.6" y2="27.2"/><line x1="22.7" y1="12.8" x2="25.4" y2="13.1"/><line x1="41.4" y1="15.4" x2="43.3" y2="16.2"/><line x1="27.7" y1="19.5" x2="29.2" y2="20.7"/><line x1="49.3" y1="11.9" x2="53.3" y2="7.7"/><line x1="46.7" y1="27.1" x2="50.1" y2="27.4"/><line x1="42.0" y1="24.9" x2="43.8" y2="25.3"/><line x1="51.2" y1="28.8" x2="56.7" y2="30.7"/><line x1="13.7" y1="3.4" x2="19.5" y2="4.3"/><line x1="6.0" y1="25.6" x2="9.6" y2="22.3"/><line x1="25.2" y1="17.1" x2="27.2" y2="17.2"/><line x1="31.3" y1="1.2" x2="32.6" y2="-0.4"/><line x1="13.8" y1="19.7" x2="15.3" y2="18.5"/><line x1="16.5" y1="29.2" x2="18.9" y2="29.9"/><line x1="33.1" y1="0.3" x2="33.5" y2="-2.4"/><line x1="17.4" y1="26.0" x2="19.8" y2="26.8"/><line x1="13.6" y1="29.8" x2="14.9" y2="28.6"/><line x1="10.7" y1="27.4" x2="12.5" y2="25.5"/><line x1="36.7" y1="28.7" x2="41.1" y2="30.0"/><line x1="39.5" y1="11.2" x2="41.0" y2="16.1"/><line x1="40.7" y1="15.7" x2="42.9" y2="16.4"/><line x1="42.1" y1="6.0" x2="43.5" y2="10.7"/><line x1="16.2" y1="29.5" x2="16.9" y2="35.0"/><line x1="26.7" y1="28.2" x2="28.6" y2="29.1"/><line x1="21.6" y1="6.6" x2="23.4" y2="6.7"/><line x1="3.3" y1="12.2" x2="7.1" y2="9.3"/><line x1="54.9" y1="28.9" x2="54.2" y2="24.5"/><line x1="28.9" y1="14.5" x2="29.0" y2="11.3"/><line x1="20.6" y1="10.3" x2="22.4" y2="10.5"/><line x1="4.4" y1="13.0" x2="9.2" y2="14.4"/><line x1="20.9" y1="23.8" x2="21.2" y2="20.4"/><line x1="2.7" y1="14.7" x2="2.7" y2="11.2"/><line x1="17.8" y1="22.9" x2="19.0" y2="26.0"/><line x1="44.7" y1="23.8" x2="48.2" y2="24.5"/><line x1="44.2" y1="1.9" x2="49.3" y2="4.1"/><line x1="18.6" y1="8.4" x2="23.5" y2="8.5"/><line x1="37.9" y1="28.7" x2="36.8" y2="23.9"/><line x1="50.4" y1="19.7" x2="53.0" y2="19.8"/><line x1="26.1" y1="29.7" x2="28.5" y2="30.8"/><line x1="23.6" y1="15.3" x2="25.1" y2="20.2"/><line x1="40.6" y1="25.5" x2="43.0" y2="26.4"/><line x1="47.4" y1="14.3" x2="48.9" y2="15.4"/><line x1="10.9" y1="23.3" x2="15.1" y2="24.5"/><line x1="26.5" y1="16.9" x2="31.3" y2="19.5"/><line x1="54.3" y1="8.2" x2="57.7" y2="8.7"/><line x1="54.4" y1="30.1" x2="57.7" y2="30.8"/><line x1="34.1" y1="20.9" x2="37.6" y2="17.4"/><line x1="41.8" y1="24.2" x2="41.3" y2="20.1"/><line x1="20.5" y1="22.9" x2="22.8" y2="23.5"/><line x1="13.0" y1="8.7" x2="14.7" y2="8.9"/><line x1="13.8" y1="7.6" x2="19.0" y2="8.1"/><line x1="35.9" y1="30.7" x2="41.4" y2="31.0"/><line x1="12.7" y1="13.9" x2="12.1" y2="11.1"/><line x1="6.6" y1="5.9" x2="11.5" y2="8.8"/><line x1="20.5" y1="26.8" x2="21.1" y2="31.8"/><line x1="36.6" y1="0.2" x2="39.7" y2="-2.8"/><line x1="12.0" y1="11.4" x2="17.9" y2="12.1"/><line x1="2.1" y1="22.7" x2="6.8" y2="24.8"/><line x1="22.5" y1="11.5" x2="24.9" y2="11.8"/><line x1="43.7" y1="17.0" x2="48.7" y2="18.1"/><line x1="36.5" y1="4.8" x2="38.8" y2="4.9"/><line x1="38.2" y1="12.7" x2="38.4" y2="9.3"/><line x1="2.8" y1="23.1" x2="2.7" y2="21.5"/><line x1="42.2" y1="24.9" x2="45.1" y2="21.1"/><line x1="11.2" y1="0.2" x2="16.2" y2="1.6"/><line x1="22.3" y1="27.4" x2="22.5" y2="29.4"/><line x1="2.8" y1="4.4" x2="4.3" y2="5.6"/><line x1="34.2" y1="11.5" x2="37.3" y2="11.7"/><line x1="8.9" y1="5.3" x2="12.6" y2="5.7"/><line x1="44.3" y1="30.0" x2="49.4" y2="31.1"/><line x1="2.4" y1="28.3" x2="1.2" y2="22.8"/><line x1="21.3" y1="28.0" x2="26.6" y2="29.5"/><line x1="35.2" y1="26.6" x2="40.5" y2="27.4"/><line x1="45.6" y1="5.7" x2="51.3" y2="6.3"/><line x1="8.6" y1="11.1" x2="13.3" y2="12.1"/><line x1="49.4" y1="1.3" x2="53.6" y2="2.8"/><line x1="36.7" y1="10.1" x2="37.3" y2="14.0"/><line x1="34.5" y1="9.5" x2="35.1" y2="12.0"/><line x1="21.4" y1="11.4" x2="23.0" y2="11.7"/><line x1="34.0" y1="15.2" x2="38.2" y2="16.4"/><line x1="45.0" y1="25.9" x2="46.8" y2="26.9"/><line x1="7.1" y1="13.3" x2="10.6" y2="14.7"/><line x1="36.1" y1="1.3" x2="40.9" y2="1.9"/><line x1="42.8" y1="15.9" x2="48.0" y2="17.8"/><line x1="35.9" y1="24.3" x2="41.4" y2="26.6"/><line x1="40.3" y1="25.3" x2="45.7" y2="26.1"/><line x1="15.8" y1="25.1" x2="20.5" y2="26.9"/><line x1="51.2" y1="2.0" x2="51.2" y2="-0.6"/><line x1="17.8" y1="19.0" x2="20.2" y2="20.2"/><line x1="53.0" y1="14.9" x2="56.8" y2="15.3"/><line x1="17.5" y1="1.1" x2="21.8" y2="2.3"/><line x1="15.3" y1="10.2" x2="16.8" y2="15.0"/><line x1="6.3" y1="16.5" x2="11.0" y2="12.9"/><line x1="24.9" y1="16.2" x2="26.5" y2="15.0"/><line x1="54.6" y1="19.5" x2="54.9" y2="22.7"/><line x1="20.7" y1="11.4" x2="25.5" y2="12.6"/><line x1="24.3" y1="5.5" x2="26.6" y2="3.8"/><line x1="28.4" y1="9.6" x2="32.2" y2="11.9"/><line x1="17.2" y1="0.1" x2="20.0" y2="0.4"/><line x1="34.4" y1="12.9" x2="34.7" y2="10.9"/><line x1="12.5" y1="20.2" x2="16.5" y2="20.5"/><line x1="16.7" y1="16.2" x2="20.8" y2="16.6"/><line x1="32.4" y1="6.3" x2="34.5" y2="7.0"/><line x1="0.8" y1="24.8" x2="1.9" y2="23.3"/><line x1="35.1" y1="27.0" x2="39.8" y2="29.1"/></g><path d="M27 0V16" stroke="#a04040" stroke-width=".6"/><ellipse cx="27" cy="17.5" rx="1.3" ry="1.1" fill="#3aa53a"/></svg>
<div class="a" style="left:87px;top:381.3px;width:5px;height:5px;border-radius:50%;background:#2f8a3a"></div>
<div class="a t" style="left:94.20px;top:380.59px;font-size:7.60px;color:#222;transform:scaleX(0.870);">CLOSED</div>
<div class="a t" style="left:127.14px;top:380.59px;font-size:7.60px;color:#222;transform:scaleX(0.870);">4</div>
<div class="a t" style="left:136.34px;top:380.59px;font-size:7.60px;color:#222;transform:scaleX(0.870);">Error</div>
<div class="a t" style="left:87.50px;top:390.09px;font-size:6.36px;color:#111;transform:scaleX(0.870);font-weight:bold;">STRUC vs ELECTRICAL - Clash3</div>
<div class="a t" style="left:88.00px;top:399.82px;font-size:6.20px;color:#7c7c7c;transform:scaleX(0.870);">Assignee</div>
<div class="a t" style="left:134.00px;top:399.82px;font-size:6.20px;color:#222;transform:scaleX(0.870);">Alice Templeton (Enzic...</div>
<div class="a t" style="left:88.00px;top:408.82px;font-size:6.20px;color:#7c7c7c;transform:scaleX(0.870);">Due date</div>
<div class="a t" style="left:134.00px;top:408.82px;font-size:6.20px;color:#222;transform:scaleX(0.870);">No due date</div>
<div class="a t" style="left:88.00px;top:417.82px;font-size:6.20px;color:#7c7c7c;transform:scaleX(0.870);">Priority</div>
<div class="a t" style="left:134.00px;top:417.82px;font-size:6.20px;color:#222;transform:scaleX(0.870);">No priority</div>
<div class="a t" style="left:88.00px;top:426.82px;font-size:6.20px;color:#7c7c7c;transform:scaleX(0.870);">Set</div>
<div class="a t" style="left:134.00px;top:426.82px;font-size:6.20px;color:#222;transform:scaleX(0.870);">Level 2</div>
<div class="a" style="left:28px;top:440.0px;width:172px;height:65px;background:#fff;"></div>
<div class="a" style="left:28px;top:504.2px;width:172px;height:1px;background:#e4e4e4;"></div>
<svg class="a" style="left:28px;top:445.0px;" width="55" height="31" viewBox="0 0 55 31"><rect width="55" height="31" fill="#1d1d1d"/><g stroke="#7a7a7a" stroke-width="0.4" opacity="0.5"><line x1="12.5" y1="29.8" x2="14.1" y2="30.1"/><line x1="7.5" y1="25.1" x2="11.9" y2="25.5"/><line x1="25.3" y1="14.0" x2="26.0" y2="19.5"/><line x1="22.1" y1="15.0" x2="24.7" y2="15.9"/><line x1="22.4" y1="28.0" x2="22.8" y2="32.4"/><line x1="5.3" y1="25.2" x2="5.7" y2="28.4"/><line x1="36.3" y1="10.5" x2="39.5" y2="5.9"/><line x1="28.4" y1="6.4" x2="30.1" y2="7.1"/><line x1="52.0" y1="15.1" x2="57.3" y2="16.0"/><line x1="25.1" y1="18.1" x2="25.9" y2="21.1"/><line x1="48.3" y1="4.2" x2="51.6" y2="6.2"/><line x1="17.3" y1="11.1" x2="20.2" y2="8.8"/><line x1="10.9" y1="4.7" x2="15.3" y2="5.2"/><line x1="44.4" y1="26.6" x2="46.6" y2="24.4"/><line x1="49.9" y1="9.2" x2="53.3" y2="9.9"/><line x1="20.7" y1="25.9" x2="21.7" y2="29.0"/><line x1="9.1" y1="20.6" x2="14.0" y2="21.2"/><line x1="16.5" y1="0.4" x2="21.2" y2="2.7"/><line x1="31.3" y1="28.1" x2="34.7" y2="29.0"/><line x1="23.0" y1="18.2" x2="23.1" y2="16.6"/><line x1="36.5" y1="23.7" x2="41.6" y2="24.4"/><line x1="27.8" y1="22.0" x2="29.3" y2="22.0"/><line x1="7.7" y1="12.0" x2="10.6" y2="12.1"/><line x1="17.9" y1="11.3" x2="19.8" y2="9.8"/><line x1="48.1" y1="1.0" x2="53.0" y2="4.4"/><line x1="31.9" y1="5.5" x2="32.3" y2="7.4"/><line x1="33.3" y1="15.4" x2="33.5" y2="18.6"/><line x1="6.0" y1="22.3" x2="8.0" y2="19.5"/><line x1="39.9" y1="22.2" x2="40.7" y2="27.3"/><line x1="25.0" y1="1.6" x2="27.0" y2="2.0"/><line x1="39.9" y1="22.0" x2="44.0" y2="23.5"/><line x1="45.6" y1="16.4" x2="48.5" y2="13.9"/><line x1="38.8" y1="6.2" x2="41.9" y2="7.0"/><line x1="28.6" y1="6.1" x2="28.7" y2="0.5"/><line x1="40.9" y1="28.8" x2="41.7" y2="31.5"/><line x1="30.1" y1="30.3" x2="30.6" y2="25.5"/><line x1="17.6" y1="9.4" x2="21.5" y2="12.5"/><line x1="16.3" y1="26.2" x2="19.3" y2="27.1"/><line x1="32.2" y1="28.5" x2="36.3" y2="29.4"/><line x1="46.3" y1="21.2" x2="50.3" y2="17.8"/><line x1="33.3" y1="11.2" x2="34.8" y2="16.2"/><line x1="27.9" y1="2.5" x2="32.7" y2="3.2"/><line x1="14.9" y1="13.0" x2="19.9" y2="14.6"/><line x1="54.3" y1="8.5" x2="56.7" y2="9.8"/><line x1="48.9" y1="12.8" x2="48.5" y2="10.2"/><line x1="27.8" y1="14.2" x2="31.6" y2="15.9"/><line x1="45.6" y1="11.4" x2="47.5" y2="12.1"/><line x1="4.6" y1="5.3" x2="9.8" y2="7.5"/><line x1="43.2" y1="4.2" x2="45.9" y2="4.4"/><line x1="5.2" y1="14.3" x2="9.8" y2="10.9"/><line x1="5.1" y1="18.8" x2="6.5" y2="20.0"/><line x1="43.5" y1="25.9" x2="47.6" y2="27.6"/><line x1="20.1" y1="25.7" x2="21.7" y2="26.3"/><line x1="43.5" y1="6.9" x2="45.4" y2="4.6"/><line x1="28.6" y1="3.5" x2="31.1" y2="1.2"/><line x1="8.6" y1="27.7" x2="13.5" y2="29.1"/><line x1="5.5" y1="6.9" x2="5.9" y2="3.9"/><line x1="10.9" y1="29.3" x2="15.6" y2="30.6"/><line x1="45.4" y1="17.3" x2="45.1" y2="14.8"/><line x1="27.5" y1="3.4" x2="32.4" y2="-0.1"/><line x1="51.2" y1="4.1" x2="50.9" y2="1.9"/><line x1="7.4" y1="13.7" x2="10.7" y2="11.2"/><line x1="33.8" y1="12.9" x2="34.5" y2="18.3"/><line x1="50.7" y1="21.5" x2="52.9" y2="19.2"/><line x1="46.4" y1="16.4" x2="45.7" y2="10.7"/><line x1="45.8" y1="26.0" x2="45.6" y2="20.1"/><line x1="29.4" y1="29.0" x2="29.7" y2="25.0"/><line x1="21.5" y1="4.2" x2="21.7" y2="6.2"/><line x1="21.7" y1="1.1" x2="21.6" y2="-1.7"/><line x1="20.6" y1="0.9" x2="22.1" y2="1.5"/><line x1="45.5" y1="13.9" x2="50.4" y2="16.0"/><line x1="31.0" y1="17.9" x2="34.7" y2="18.7"/><line x1="54.3" y1="22.2" x2="54.8" y2="19.1"/><line x1="52.1" y1="20.2" x2="52.2" y2="24.6"/><line x1="26.2" y1="17.9" x2="26.5" y2="14.4"/><line x1="40.8" y1="20.8" x2="43.6" y2="17.0"/><line x1="49.0" y1="9.7" x2="52.4" y2="11.3"/><line x1="26.6" y1="14.8" x2="30.9" y2="15.7"/><line x1="43.2" y1="24.3" x2="46.1" y2="20.7"/><line x1="25.0" y1="9.2" x2="25.1" y2="12.7"/><line x1="34.6" y1="15.5" x2="36.0" y2="13.9"/><line x1="53.4" y1="3.4" x2="56.0" y2="0.9"/><line x1="25.9" y1="11.9" x2="29.9" y2="12.8"/><line x1="43.0" y1="15.6" x2="48.1" y2="16.1"/><line x1="41.7" y1="6.7" x2="45.6" y2="2.5"/><line x1="44.0" y1="29.6" x2="48.7" y2="29.9"/><line x1="11.7" y1="9.7" x2="16.2" y2="11.4"/><line x1="31.7" y1="19.9" x2="34.1" y2="20.0"/><line x1="17.4" y1="2.9" x2="18.8" y2="3.6"/><line x1="53.9" y1="3.0" x2="59.5" y2="3.4"/><line x1="41.6" y1="25.4" x2="41.6" y2="28.8"/><line x1="8.1" y1="4.5" x2="12.0" y2="1.3"/><line x1="38.8" y1="29.0" x2="39.1" y2="31.6"/><line x1="38.2" y1="6.2" x2="43.1" y2="7.0"/><line x1="17.3" y1="5.0" x2="21.8" y2="6.0"/><line x1="14.5" y1="16.2" x2="19.5" y2="16.2"/><line x1="38.7" y1="21.5" x2="43.7" y2="22.4"/><line x1="36.0" y1="26.9" x2="37.7" y2="28.3"/><line x1="45.4" y1="7.4" x2="50.7" y2="8.6"/><line x1="45.4" y1="17.0" x2="45.4" y2="22.4"/><line x1="53.4" y1="19.1" x2="55.3" y2="19.3"/><line x1="28.5" y1="10.4" x2="34.0" y2="12.3"/><line x1="23.4" y1="21.0" x2="25.4" y2="21.4"/><line x1="42.6" y1="2.2" x2="42.9" y2="0.1"/><line x1="13.0" y1="18.4" x2="15.8" y2="19.3"/><line x1="19.6" y1="9.6" x2="24.8" y2="10.7"/><line x1="36.6" y1="13.8" x2="39.6" y2="13.9"/><line x1="39.4" y1="26.7" x2="41.0" y2="26.8"/><line x1="38.7" y1="21.3" x2="38.5" y2="17.6"/><line x1="31.9" y1="19.0" x2="35.4" y2="19.2"/><line x1="4.5" y1="0.9" x2="6.2" y2="1.5"/><line x1="18.4" y1="11.9" x2="19.0" y2="7.7"/><line x1="53.0" y1="22.8" x2="53.2" y2="17.0"/><line x1="52.3" y1="14.8" x2="52.6" y2="17.4"/><line x1="44.3" y1="30.4" x2="47.5" y2="32.5"/><line x1="28.0" y1="12.4" x2="28.8" y2="17.8"/><line x1="36.8" y1="30.5" x2="40.3" y2="31.9"/><line x1="38.3" y1="28.4" x2="40.8" y2="25.3"/><line x1="21.9" y1="3.6" x2="24.2" y2="3.7"/><line x1="43.6" y1="27.8" x2="43.4" y2="26.0"/><line x1="22.0" y1="29.6" x2="25.7" y2="31.2"/><line x1="39.3" y1="21.3" x2="40.7" y2="26.9"/><line x1="26.2" y1="2.0" x2="28.9" y2="2.9"/><line x1="10.0" y1="3.1" x2="14.7" y2="3.7"/><line x1="17.7" y1="7.4" x2="22.5" y2="8.7"/><line x1="1.6" y1="10.8" x2="5.2" y2="11.8"/><line x1="2.2" y1="2.9" x2="4.1" y2="0.7"/><line x1="5.8" y1="6.0" x2="6.5" y2="9.4"/><line x1="38.0" y1="4.0" x2="37.4" y2="0.6"/><line x1="18.3" y1="16.1" x2="19.7" y2="14.6"/><line x1="20.9" y1="29.6" x2="22.3" y2="28.0"/><line x1="4.1" y1="5.6" x2="5.3" y2="9.7"/><line x1="46.1" y1="25.9" x2="49.9" y2="26.6"/><line x1="44.8" y1="10.3" x2="44.4" y2="8.1"/><line x1="17.6" y1="25.7" x2="17.5" y2="28.6"/><line x1="12.1" y1="28.4" x2="14.3" y2="28.5"/><line x1="3.6" y1="23.8" x2="5.2" y2="21.5"/><line x1="51.0" y1="12.0" x2="51.5" y2="17.8"/><line x1="21.2" y1="28.6" x2="22.3" y2="33.2"/><line x1="17.0" y1="30.4" x2="18.6" y2="30.8"/><line x1="50.1" y1="11.2" x2="53.3" y2="7.7"/><line x1="54.8" y1="21.8" x2="57.0" y2="22.5"/><line x1="3.6" y1="15.1" x2="5.3" y2="15.5"/><line x1="48.9" y1="9.9" x2="51.8" y2="11.2"/><line x1="48.6" y1="24.8" x2="52.3" y2="21.1"/><line x1="13.3" y1="27.0" x2="16.3" y2="24.8"/><line x1="15.4" y1="19.5" x2="16.0" y2="21.0"/><line x1="42.0" y1="9.8" x2="47.8" y2="10.4"/><line x1="51.4" y1="27.5" x2="55.2" y2="28.0"/><line x1="47.2" y1="9.9" x2="50.8" y2="12.4"/><line x1="38.4" y1="5.0" x2="41.7" y2="0.9"/><line x1="29.0" y1="19.3" x2="32.1" y2="21.9"/><line x1="16.5" y1="16.8" x2="21.2" y2="17.4"/><line x1="39.7" y1="23.6" x2="43.1" y2="24.4"/><line x1="53.0" y1="8.1" x2="56.5" y2="3.8"/><line x1="7.5" y1="14.2" x2="12.2" y2="15.5"/><line x1="48.6" y1="19.4" x2="50.5" y2="19.7"/><line x1="14.2" y1="17.7" x2="15.7" y2="15.4"/><line x1="48.7" y1="3.6" x2="52.3" y2="3.8"/><line x1="22.1" y1="27.6" x2="25.4" y2="25.2"/><line x1="11.0" y1="0.4" x2="15.3" y2="0.9"/><line x1="2.8" y1="10.4" x2="2.7" y2="6.1"/><line x1="42.5" y1="17.2" x2="47.2" y2="18.7"/><line x1="22.3" y1="29.2" x2="27.6" y2="30.5"/><line x1="27.0" y1="23.2" x2="30.6" y2="24.6"/><line x1="23.4" y1="25.7" x2="27.8" y2="26.4"/><line x1="52.5" y1="25.7" x2="54.4" y2="27.1"/><line x1="12.9" y1="5.0" x2="13.5" y2="7.6"/><line x1="18.5" y1="15.5" x2="21.6" y2="16.9"/><line x1="29.5" y1="26.2" x2="28.6" y2="22.0"/><line x1="47.2" y1="28.3" x2="48.0" y2="22.9"/><line x1="8.8" y1="7.2" x2="13.1" y2="8.6"/><line x1="20.9" y1="16.2" x2="22.7" y2="16.9"/><line x1="36.5" y1="9.1" x2="38.2" y2="9.8"/><line x1="46.9" y1="18.9" x2="51.8" y2="20.0"/><line x1="35.8" y1="23.0" x2="39.3" y2="20.2"/><line x1="2.7" y1="3.5" x2="2.5" y2="0.7"/><line x1="43.2" y1="21.3" x2="47.6" y2="21.4"/><line x1="38.5" y1="23.4" x2="42.0" y2="23.6"/><line x1="54.4" y1="12.5" x2="56.7" y2="9.1"/><line x1="25.8" y1="9.3" x2="28.4" y2="9.8"/><line x1="23.6" y1="2.3" x2="23.0" y2="-1.5"/><line x1="3.0" y1="9.1" x2="3.6" y2="3.6"/><line x1="22.5" y1="0.1" x2="22.6" y2="1.7"/><line x1="10.6" y1="17.0" x2="12.1" y2="18.1"/><line x1="33.9" y1="18.5" x2="37.2" y2="20.2"/><line x1="39.2" y1="21.0" x2="41.7" y2="21.8"/><line x1="2.8" y1="28.8" x2="6.5" y2="29.4"/><line x1="16.9" y1="16.6" x2="19.4" y2="16.9"/><line x1="17.1" y1="26.3" x2="17.1" y2="31.8"/><line x1="47.8" y1="22.4" x2="50.5" y2="18.6"/><line x1="17.2" y1="13.0" x2="21.3" y2="9.9"/><line x1="20.7" y1="21.0" x2="24.0" y2="21.1"/><line x1="20.9" y1="13.0" x2="20.8" y2="11.5"/><line x1="13.6" y1="8.2" x2="16.5" y2="5.3"/><line x1="44.0" y1="1.0" x2="49.5" y2="1.5"/><line x1="28.8" y1="13.9" x2="32.8" y2="14.4"/><line x1="17.3" y1="15.1" x2="20.0" y2="16.7"/><line x1="14.4" y1="27.5" x2="14.5" y2="29.1"/><line x1="38.3" y1="0.5" x2="42.0" y2="2.0"/><line x1="31.5" y1="25.6" x2="33.0" y2="26.8"/><line x1="50.8" y1="14.3" x2="54.7" y2="15.8"/><line x1="37.5" y1="9.5" x2="43.0" y2="11.5"/><line x1="37.9" y1="4.9" x2="41.2" y2="6.1"/><line x1="46.2" y1="11.0" x2="47.0" y2="13.6"/><line x1="2.0" y1="8.8" x2="3.9" y2="10.2"/><line x1="49.8" y1="10.1" x2="50.6" y2="13.8"/><line x1="52.9" y1="4.3" x2="53.2" y2="6.4"/><line x1="36.4" y1="4.0" x2="37.3" y2="9.6"/><line x1="14.8" y1="25.6" x2="16.4" y2="25.8"/><line x1="40.0" y1="12.1" x2="42.8" y2="12.5"/><line x1="9.0" y1="8.1" x2="12.3" y2="9.3"/><line x1="54.4" y1="4.7" x2="59.2" y2="7.0"/><line x1="17.3" y1="1.3" x2="17.2" y2="-2.8"/><line x1="38.0" y1="13.1" x2="43.0" y2="14.6"/><line x1="43.3" y1="2.5" x2="45.0" y2="3.2"/><line x1="6.3" y1="8.3" x2="9.8" y2="5.5"/><line x1="52.2" y1="29.4" x2="52.8" y2="35.2"/><line x1="41.5" y1="17.6" x2="42.4" y2="20.8"/><line x1="23.0" y1="24.9" x2="28.6" y2="26.1"/><line x1="20.5" y1="8.1" x2="20.5" y2="10.2"/><line x1="34.1" y1="23.9" x2="36.6" y2="24.1"/><line x1="45.9" y1="3.9" x2="46.6" y2="-0.6"/><line x1="50.1" y1="5.0" x2="55.0" y2="6.3"/><line x1="4.1" y1="25.7" x2="7.3" y2="21.0"/><line x1="8.3" y1="5.8" x2="12.4" y2="7.4"/><line x1="44.6" y1="17.4" x2="47.5" y2="18.4"/><line x1="45.2" y1="17.0" x2="48.9" y2="17.5"/><line x1="18.2" y1="5.0" x2="22.5" y2="6.6"/><line x1="42.4" y1="28.4" x2="43.1" y2="32.3"/><line x1="37.2" y1="12.4" x2="40.0" y2="13.3"/><line x1="50.7" y1="4.7" x2="54.6" y2="0.7"/><line x1="6.7" y1="20.1" x2="7.7" y2="18.7"/><line x1="9.9" y1="12.1" x2="9.4" y2="9.2"/><line x1="0.3" y1="21.8" x2="1.7" y2="20.7"/><line x1="27.1" y1="4.1" x2="31.4" y2="5.5"/><line x1="6.2" y1="18.8" x2="6.2" y2="21.5"/><line x1="35.3" y1="25.6" x2="37.1" y2="25.9"/><line x1="30.4" y1="14.8" x2="31.1" y2="9.4"/><line x1="22.1" y1="16.7" x2="26.8" y2="18.7"/></g><path d="M27 14V31" stroke="#c04545" stroke-width="1"/><path d="M25 17.5L28 20L30.5 24" stroke="#3ddc3d" stroke-width="3" fill="none" stroke-linejoin="round"/></svg>
<div class="a" style="left:87px;top:446.5px;width:5px;height:5px;border-radius:50%;background:#ebb43a"></div>
<div class="a t" style="left:94.20px;top:445.79px;font-size:7.60px;color:#222;transform:scaleX(0.870);">SOLVED</div>
<div class="a t" style="left:126.78px;top:445.79px;font-size:7.60px;color:#222;transform:scaleX(0.870);">3</div>
<div class="a t" style="left:135.98px;top:445.79px;font-size:7.60px;color:#222;transform:scaleX(0.870);">Error</div>
<div class="a t" style="left:87.50px;top:455.29px;font-size:6.36px;color:#111;transform:scaleX(0.870);font-weight:bold;">STRUC vs ELECTRICAL - Clash2</div>
<div class="a t" style="left:88.00px;top:465.02px;font-size:6.20px;color:#7c7c7c;transform:scaleX(0.870);">Assignee</div>
<div class="a t" style="left:134.00px;top:465.02px;font-size:6.20px;color:#222;transform:scaleX(0.870);">Alice Templeton (Enzic...</div>
<div class="a t" style="left:88.00px;top:474.02px;font-size:6.20px;color:#7c7c7c;transform:scaleX(0.870);">Due date</div>
<div class="a t" style="left:134.00px;top:474.02px;font-size:6.20px;color:#222;transform:scaleX(0.870);">No due date</div>
<div class="a t" style="left:88.00px;top:483.02px;font-size:6.20px;color:#7c7c7c;transform:scaleX(0.870);">Priority</div>
<div class="a t" style="left:134.00px;top:483.02px;font-size:6.20px;color:#222;transform:scaleX(0.870);">No priority</div>
<div class="a t" style="left:88.00px;top:492.02px;font-size:6.20px;color:#7c7c7c;transform:scaleX(0.870);">Set</div>
<div class="a t" style="left:134.00px;top:492.02px;font-size:6.20px;color:#222;transform:scaleX(0.870);">Level 2</div>
<div class="a" style="left:199px;top:114px;width:2px;height:65px;background:#cc8a55;"></div>
<div class="a" style="left:203px;top:116px;width:3px;height:297px;background:#c2c2c2;border-radius:1.5px;"></div>
<div class="a" style="left:207px;top:115px;width:1px;height:489px;background:#ececec;"></div>
<div class="a" style="left:210px;top:115px;width:1px;height:489px;background:#e2e2e2;"></div>
<div class="a" style="left:28px;top:509px;width:55px;height:1.5px;background:#8a8a8a;"></div>
<div class="a t" style="left:29.00px;top:518.84px;font-size:7.34px;color:#222;transform:scaleX(0.870);">-8 of 8 issues</div>
<div class="a t" style="left:112.00px;top:519.41px;font-size:6.89px;color:#222;transform:scaleX(0.870);">Page</div>
<div class="a" style="left:129.5px;top:515.5px;width:22px;height:13px;background:#fff;border:1px solid #d8d8d8;"></div>
<div class="a t" style="left:131.00px;top:519.36px;font-size:7.20px;color:#444;transform:scaleX(0.870);">1</div>
<div class="a t" style="left:154.00px;top:519.35px;font-size:7.24px;color:#222;transform:scaleX(0.870);">of 1</div>
<div class="a" style="left:173px;top:515px;width:14px;height:13px;background:#f4f4f4;"></div>
<div class="a" style="left:190px;top:515px;width:14px;height:13px;background:#f4f4f4;"></div>
<svg class="a" style="left:177px;top:518px;" width="6" height="7" viewBox="0 0 6 7"><path d="M4 1L1.5 3.5L4 6" fill="none" stroke="#999" stroke-width=".9"/></svg>
<svg class="a" style="left:194px;top:518px;" width="6" height="7" viewBox="0 0 6 7"><path d="M2 1L4.5 3.5L2 6" fill="none" stroke="#999" stroke-width=".9"/></svg>
<div class="a" style="left:219.5px;top:123.5px;width:5px;height:5px;border-radius:50%;background:#e0701f"></div>
<div class="a t" style="left:226.80px;top:121.37px;font-size:8.40px;color:#222;transform:scaleX(0.870);">OPEN</div>
<div class="a t" style="left:254.00px;top:121.37px;font-size:8.40px;color:#222;transform:scaleX(0.870);">8</div>
<div class="a t" style="left:264.00px;top:121.37px;font-size:8.40px;color:#222;transform:scaleX(0.870);">Clash</div>
<div class="a" style="left:211px;top:136px;width:224px;height:1px;background:#e3e3e3;"></div>
<div class="a" style="left:212px;top:137px;width:22px;height:23px;background:#f3f3f3;"></div>
<div class="a" style="left:233.5px;top:137px;width:1.5px;height:467px;background:#dedede;"></div>
<svg class="a" style="left:216px;top:144px;" width="12" height="12" viewBox="0 0 12 12"><circle cx="6" cy="6" r="4.6" fill="none" stroke="#666" stroke-width=".9"/><path d="M6 5V8.6" stroke="#666" stroke-width="1.1"/><circle cx="6" cy="3.4" r=".7" fill="#666"/></svg>
<svg class="a" style="left:217px;top:168px;" width="10" height="18" viewBox="0 0 10 18"><path d="M1 1.5H8V7H1Z" fill="none" stroke="#666" stroke-width=".9"/><path d="M1.5 6.5L3.5 4.5L5 5.8L6.3 4.8L7.8 6.5Z" fill="#666"/><circle cx="5" cy="13" r="3.2" fill="#555"/><path d="M5 11.5V14.5" stroke="#fff" stroke-width=".8"/></svg>
<svg class="a" style="left:217px;top:195px;" width="10" height="18" viewBox="0 0 10 18"><path d="M1 1.5H9V6.5H6L5 8L4.5 6.5H1Z" fill="#5a5a5a"/><circle cx="5" cy="13" r="3.2" fill="#555"/><circle cx="5" cy="13.2" r="1.2" fill="none" stroke="#fff" stroke-width=".6"/></svg>
<svg class="a" style="left:217px;top:220px;" width="10" height="18" viewBox="0 0 10 18"><path d="M2 7L5.5 3.5M3.5 4.5L5 3A1.4 1.4 0 0 1 7.4 5L6 6.6M5 6.8L3.5 8.2A1.4 1.4 0 0 1 1.2 6.2L2.6 4.8" fill="none" stroke="#666" stroke-width=".9"/><circle cx="5" cy="14.5" r="3.2" fill="#555"/><circle cx="5" cy="14.5" r="1.3" fill="none" stroke="#fff" stroke-width=".6"/></svg>
<svg class="a" style="left:217px;top:252px;" width="10" height="10" viewBox="0 0 10 10"><circle cx="2" cy="3" r="1" fill="#333"/><circle cx="7.5" cy="3" r="1" fill="#333"/><circle cx="4.5" cy="8" r="1" fill="#333"/><path d="M2 3H7.5L4.5 8" fill="none" stroke="#333" stroke-width=".6"/></svg>
<div class="a" style="left:430px;top:140px;width:2.5px;height:244px;background:#bdbdbd;border-radius:1px;"></div>
<div class="a" style="left:435px;top:114px;width:1px;height:490px;background:#e6e6e6;"></div>
<div class="a" style="left:438px;top:114px;width:1px;height:490px;background:#dcdcdc;"></div>
<div class="a" style="left:237px;top:138px;width:190px;height:144px;background:#fff;"></div>
<div class="a" style="left:237px;top:281px;width:190px;height:2px;background:#efefef;"></div>
<svg class="a" style="left:242px;top:143px;" width="9" height="7" viewBox="0 0 9 7"><path d="M1.5 1.8L4.3 4.6L7.1 1.8" fill="none" stroke="#444" stroke-width="1.25"/></svg>
<div class="a t" style="left:256.00px;top:142.69px;font-size:8.27px;color:#777;transform:scaleX(0.870);">Details</div>
<svg class="a" style="left:406px;top:141px;" width="9" height="10" viewBox="0 0 9 10"><path d="M1.8 8L7.2 2.6" stroke="#333" stroke-width="1.5"/></svg>
<div class="a t" style="left:243.50px;top:158.83px;font-size:7.40px;color:#111;transform:scaleX(0.870);font-weight:bold;">STRUC vs MECHANICAL - Clash3</div>
<div class="a t" style="left:243.50px;top:169.35px;font-size:7.24px;color:#7c7c7c;transform:scaleX(0.870);">Assignee</div>
<div class="a t" style="left:290.00px;top:169.35px;font-size:7.24px;color:#222;transform:scaleX(0.870);">Eric Gibb (Apex )</div>
<div class="a t" style="left:243.50px;top:181.35px;font-size:7.24px;color:#7c7c7c;transform:scaleX(0.870);">Due date</div>
<div class="a t" style="left:290.00px;top:181.35px;font-size:7.24px;color:#222;transform:scaleX(0.870);">No due date</div>
<div class="a t" style="left:243.50px;top:193.35px;font-size:7.24px;color:#7c7c7c;transform:scaleX(0.870);">Priority</div>
<div class="a t" style="left:290.00px;top:193.35px;font-size:7.24px;color:#222;transform:scaleX(0.870);">No priority</div>
<div class="a t" style="left:243.50px;top:205.35px;font-size:7.24px;color:#7c7c7c;transform:scaleX(0.870);">Set</div>
<div class="a t" style="left:290.00px;top:205.35px;font-size:7.24px;color:#222;transform:scaleX(0.870);">Level 1</div>
<div class="a" style="left:241px;top:218px;width:175px;height:1px;background:#ececec;"></div>
<div class="a t" style="left:243.50px;top:225.33px;font-size:7.35px;color:#7c7c7c;transform:scaleX(0.870);">Description</div>
<div class="a t" style="left:243.50px;top:235.82px;font-size:7.41px;color:#222;transform:scaleX(0.870);">Hard (id:2eb9edaf-bfdb-449d-a8ea-0fa7dc905a30)</div>
<div class="a" style="left:241px;top:247px;width:175px;height:1px;background:#ececec;"></div>
<div class="a t" style="left:243.50px;top:253.35px;font-size:7.24px;color:#7c7c7c;transform:scaleX(0.870);">Created by</div>
<div class="a t" style="left:290.00px;top:253.33px;font-size:7.37px;color:#222;transform:scaleX(0.870);">Patrick O'Leary (Majestic )</div>
<div class="a t" style="left:243.50px;top:265.35px;font-size:7.24px;color:#7c7c7c;transform:scaleX(0.870);">Created on</div>
<div class="a t" style="left:290.00px;top:265.35px;font-size:7.24px;color:#222;transform:scaleX(0.870);">27 March 2019</div>
<div class="a" style="left:237px;top:283px;width:190px;height:69px;background:#fff;"></div>
<div class="a" style="left:237px;top:351px;width:190px;height:2px;background:#efefef;"></div>
<svg class="a" style="left:242px;top:292px;" width="9" height="7" viewBox="0 0 9 7"><path d="M1.5 1.8L4.3 4.6L7.1 1.8" fill="none" stroke="#444" stroke-width="1.25"/></svg>
<div class="a t" style="left:256.00px;top:290.16px;font-size:8.44px;color:#777;transform:scaleX(0.870);">Viewpoints</div>
<svg class="a" style="left:244.5px;top:305.5px;" width="54" height="30" viewBox="0 0 54 30"><rect width="54" height="30" fill="#141414"/><g stroke="#777" stroke-width="0.35" opacity="0.45"><line x1="43.2" y1="9.8" x2="48.8" y2="10.8"/><line x1="15.8" y1="28.6" x2="19.8" y2="29.0"/><line x1="35.7" y1="0.1" x2="34.4" y2="-5.6"/><line x1="9.3" y1="24.4" x2="12.3" y2="25.7"/><line x1="17.9" y1="3.5" x2="21.6" y2="4.7"/><line x1="11.1" y1="5.8" x2="15.4" y2="7.5"/><line x1="48.7" y1="17.9" x2="53.9" y2="18.0"/><line x1="53.0" y1="22.2" x2="54.3" y2="20.7"/><line x1="31.2" y1="24.8" x2="36.0" y2="28.2"/><line x1="14.7" y1="18.8" x2="17.5" y2="20.0"/><line x1="28.6" y1="24.8" x2="32.4" y2="28.0"/><line x1="51.1" y1="15.9" x2="54.2" y2="17.0"/><line x1="7.5" y1="24.1" x2="9.0" y2="24.8"/><line x1="26.8" y1="1.2" x2="27.0" y2="-2.3"/><line x1="13.8" y1="15.1" x2="15.5" y2="15.6"/><line x1="25.5" y1="20.8" x2="29.3" y2="21.2"/><line x1="0.9" y1="14.6" x2="1.6" y2="9.7"/><line x1="31.1" y1="1.9" x2="32.7" y2="6.8"/><line x1="48.9" y1="21.0" x2="54.5" y2="21.8"/><line x1="6.1" y1="11.7" x2="7.9" y2="16.8"/><line x1="12.9" y1="6.3" x2="15.0" y2="7.0"/><line x1="1.4" y1="28.7" x2="6.0" y2="30.5"/><line x1="52.2" y1="17.3" x2="54.9" y2="14.7"/><line x1="14.5" y1="25.2" x2="17.7" y2="26.0"/><line x1="29.2" y1="8.6" x2="33.1" y2="10.2"/><line x1="3.8" y1="0.6" x2="8.3" y2="1.0"/><line x1="5.9" y1="6.1" x2="8.0" y2="6.9"/><line x1="51.4" y1="11.5" x2="51.5" y2="15.4"/><line x1="44.2" y1="12.1" x2="48.7" y2="14.9"/><line x1="15.3" y1="27.0" x2="18.0" y2="28.1"/><line x1="49.3" y1="23.3" x2="49.8" y2="17.3"/><line x1="25.8" y1="22.5" x2="28.6" y2="24.2"/><line x1="28.9" y1="29.1" x2="28.5" y2="24.2"/><line x1="30.3" y1="21.2" x2="30.7" y2="18.5"/><line x1="5.6" y1="4.1" x2="7.6" y2="5.5"/><line x1="44.5" y1="18.7" x2="46.2" y2="19.2"/><line x1="1.2" y1="21.6" x2="5.8" y2="21.8"/><line x1="6.9" y1="23.8" x2="8.4" y2="22.8"/><line x1="27.8" y1="18.7" x2="29.4" y2="23.1"/><line x1="4.3" y1="13.6" x2="5.7" y2="14.1"/><line x1="24.3" y1="25.3" x2="25.5" y2="31.1"/><line x1="45.9" y1="2.3" x2="49.1" y2="2.6"/><line x1="6.8" y1="27.6" x2="10.9" y2="24.4"/><line x1="50.6" y1="19.0" x2="55.7" y2="21.0"/><line x1="4.7" y1="1.4" x2="7.9" y2="-2.2"/><line x1="9.6" y1="14.4" x2="14.3" y2="15.5"/><line x1="17.5" y1="6.9" x2="18.3" y2="12.6"/><line x1="20.9" y1="19.8" x2="24.0" y2="20.8"/><line x1="5.2" y1="23.6" x2="7.6" y2="21.9"/><line x1="36.1" y1="10.2" x2="38.7" y2="7.4"/><line x1="19.1" y1="19.3" x2="18.9" y2="16.8"/><line x1="8.5" y1="20.1" x2="13.9" y2="22.4"/><line x1="15.8" y1="14.8" x2="18.8" y2="12.6"/><line x1="36.8" y1="8.4" x2="41.8" y2="11.0"/><line x1="31.4" y1="13.0" x2="35.9" y2="14.1"/><line x1="47.3" y1="24.1" x2="51.0" y2="20.1"/><line x1="19.2" y1="14.7" x2="19.3" y2="17.9"/><line x1="46.8" y1="12.9" x2="52.2" y2="15.2"/><line x1="16.5" y1="8.5" x2="20.8" y2="10.1"/><line x1="1.1" y1="2.3" x2="1.5" y2="-0.9"/><line x1="14.4" y1="29.9" x2="16.5" y2="30.3"/><line x1="24.1" y1="27.2" x2="28.1" y2="27.7"/><line x1="18.5" y1="28.4" x2="21.7" y2="24.5"/><line x1="9.3" y1="12.8" x2="11.2" y2="13.3"/><line x1="34.2" y1="6.9" x2="35.4" y2="5.8"/><line x1="50.4" y1="14.5" x2="55.5" y2="16.7"/><line x1="4.9" y1="1.7" x2="4.8" y2="-1.0"/><line x1="29.0" y1="26.1" x2="31.5" y2="26.5"/><line x1="47.5" y1="21.1" x2="50.6" y2="18.3"/><line x1="38.7" y1="4.9" x2="40.8" y2="6.2"/><line x1="18.9" y1="9.1" x2="20.3" y2="7.8"/><line x1="10.2" y1="19.2" x2="14.4" y2="15.3"/><line x1="6.2" y1="14.4" x2="8.4" y2="11.9"/><line x1="25.0" y1="11.1" x2="27.4" y2="11.9"/><line x1="43.5" y1="15.2" x2="43.7" y2="12.2"/><line x1="25.7" y1="22.2" x2="27.2" y2="22.9"/><line x1="1.4" y1="28.6" x2="5.3" y2="30.3"/><line x1="45.9" y1="12.7" x2="50.2" y2="14.7"/><line x1="36.5" y1="12.8" x2="41.4" y2="13.8"/><line x1="16.5" y1="7.1" x2="19.8" y2="9.9"/><line x1="26.4" y1="17.3" x2="29.7" y2="19.0"/><line x1="22.1" y1="5.6" x2="24.2" y2="6.3"/><line x1="52.6" y1="28.9" x2="53.5" y2="32.4"/><line x1="4.9" y1="8.4" x2="8.6" y2="10.5"/><line x1="48.9" y1="1.1" x2="48.7" y2="-4.3"/><line x1="5.7" y1="4.9" x2="10.2" y2="6.6"/><line x1="49.9" y1="3.4" x2="53.3" y2="-0.5"/><line x1="13.9" y1="4.8" x2="13.7" y2="1.4"/><line x1="39.1" y1="5.2" x2="44.5" y2="6.7"/><line x1="40.6" y1="25.8" x2="44.7" y2="27.5"/><line x1="42.9" y1="0.9" x2="46.2" y2="-2.0"/><line x1="11.4" y1="11.9" x2="16.1" y2="14.0"/><line x1="45.0" y1="27.6" x2="48.4" y2="28.8"/><line x1="13.3" y1="8.2" x2="14.8" y2="12.4"/><line x1="1.4" y1="15.4" x2="4.8" y2="15.7"/><line x1="24.3" y1="18.7" x2="27.9" y2="20.1"/><line x1="41.8" y1="24.3" x2="44.9" y2="20.7"/><line x1="12.2" y1="21.4" x2="12.9" y2="24.6"/><line x1="1.3" y1="6.3" x2="6.9" y2="6.7"/><line x1="6.0" y1="16.5" x2="10.8" y2="18.2"/><line x1="19.3" y1="27.5" x2="25.1" y2="28.7"/><line x1="8.9" y1="9.1" x2="10.0" y2="7.6"/><line x1="3.4" y1="0.0" x2="8.0" y2="3.3"/><line x1="21.2" y1="4.4" x2="26.7" y2="4.9"/><line x1="44.5" y1="12.3" x2="45.0" y2="14.9"/><line x1="46.2" y1="26.5" x2="48.1" y2="27.4"/><line x1="16.7" y1="15.9" x2="19.4" y2="16.8"/><line x1="15.8" y1="13.2" x2="16.7" y2="16.5"/><line x1="4.0" y1="0.8" x2="5.1" y2="5.2"/><line x1="16.1" y1="9.1" x2="17.3" y2="7.7"/><line x1="10.9" y1="26.5" x2="14.5" y2="27.4"/><line x1="37.3" y1="10.3" x2="37.3" y2="15.9"/><line x1="3.3" y1="22.3" x2="7.6" y2="25.4"/><line x1="12.8" y1="19.2" x2="16.7" y2="20.4"/><line x1="0.7" y1="26.3" x2="2.7" y2="31.8"/><line x1="51.3" y1="12.1" x2="53.1" y2="12.6"/><line x1="54.0" y1="15.9" x2="57.5" y2="17.4"/><line x1="15.5" y1="0.3" x2="16.5" y2="4.7"/><line x1="45.0" y1="10.3" x2="48.6" y2="6.3"/><line x1="27.9" y1="0.7" x2="31.0" y2="-2.0"/><line x1="23.6" y1="0.3" x2="28.2" y2="3.7"/><line x1="5.0" y1="14.2" x2="7.7" y2="14.8"/><line x1="25.2" y1="23.7" x2="26.0" y2="18.7"/><line x1="20.0" y1="18.2" x2="22.0" y2="18.4"/><line x1="20.5" y1="12.1" x2="24.2" y2="13.5"/><line x1="44.8" y1="24.2" x2="48.1" y2="25.0"/><line x1="42.5" y1="21.1" x2="44.7" y2="21.6"/><line x1="51.2" y1="12.0" x2="52.1" y2="10.8"/><line x1="18.8" y1="19.2" x2="23.1" y2="20.3"/><line x1="50.4" y1="19.7" x2="54.9" y2="22.7"/><line x1="27.9" y1="14.7" x2="30.8" y2="14.9"/><line x1="25.7" y1="0.5" x2="30.6" y2="2.3"/><line x1="25.8" y1="29.0" x2="25.6" y2="27.0"/><line x1="20.7" y1="0.3" x2="22.5" y2="0.4"/><line x1="25.9" y1="17.8" x2="25.1" y2="12.1"/><line x1="17.2" y1="21.0" x2="21.3" y2="17.5"/><line x1="54.0" y1="29.0" x2="55.7" y2="29.2"/><line x1="5.7" y1="0.8" x2="6.5" y2="4.6"/><line x1="12.8" y1="29.6" x2="13.0" y2="25.8"/><line x1="17.1" y1="15.8" x2="19.2" y2="16.5"/><line x1="10.0" y1="4.0" x2="10.4" y2="6.4"/><line x1="4.4" y1="4.7" x2="3.9" y2="1.8"/><line x1="32.5" y1="1.6" x2="35.6" y2="2.3"/><line x1="9.6" y1="20.5" x2="13.1" y2="22.5"/><line x1="42.0" y1="18.9" x2="45.3" y2="15.1"/><line x1="43.9" y1="9.9" x2="43.4" y2="5.5"/><line x1="2.4" y1="22.9" x2="6.4" y2="23.1"/><line x1="19.1" y1="1.6" x2="20.1" y2="4.7"/><line x1="16.2" y1="19.5" x2="17.7" y2="18.4"/><line x1="39.1" y1="2.0" x2="38.9" y2="-2.4"/><line x1="43.5" y1="20.3" x2="46.9" y2="22.1"/><line x1="35.7" y1="27.3" x2="37.5" y2="32.4"/><line x1="9.4" y1="14.1" x2="9.3" y2="11.0"/><line x1="32.1" y1="12.0" x2="36.6" y2="12.8"/><line x1="48.1" y1="15.7" x2="52.2" y2="16.9"/><line x1="48.9" y1="19.4" x2="51.4" y2="19.9"/><line x1="48.2" y1="5.2" x2="53.7" y2="6.4"/><line x1="39.4" y1="2.9" x2="41.5" y2="0.4"/><line x1="32.1" y1="27.9" x2="36.2" y2="29.0"/><line x1="25.8" y1="0.4" x2="27.0" y2="-0.5"/><line x1="43.9" y1="10.0" x2="48.4" y2="13.4"/><line x1="22.9" y1="9.9" x2="27.1" y2="10.5"/><line x1="8.0" y1="19.2" x2="11.9" y2="21.2"/><line x1="31.7" y1="0.4" x2="35.2" y2="-2.1"/><line x1="50.8" y1="22.1" x2="51.1" y2="18.4"/><line x1="12.7" y1="19.1" x2="15.0" y2="19.9"/><line x1="51.8" y1="24.1" x2="54.6" y2="20.1"/><line x1="23.1" y1="1.1" x2="29.0" y2="2.1"/><line x1="24.6" y1="2.4" x2="26.1" y2="2.4"/><line x1="36.3" y1="28.3" x2="38.3" y2="26.0"/><line x1="19.1" y1="26.0" x2="19.1" y2="28.2"/><line x1="50.9" y1="9.6" x2="51.9" y2="8.4"/><line x1="32.0" y1="22.6" x2="35.3" y2="23.1"/><line x1="46.5" y1="23.9" x2="46.9" y2="21.2"/><line x1="27.1" y1="3.2" x2="28.4" y2="1.7"/><line x1="12.8" y1="15.3" x2="17.8" y2="18.0"/><line x1="39.9" y1="23.0" x2="40.5" y2="26.9"/><line x1="15.8" y1="13.8" x2="19.3" y2="14.4"/><line x1="31.7" y1="6.8" x2="36.0" y2="7.7"/><line x1="7.3" y1="18.7" x2="10.3" y2="19.9"/></g><polygon points="0,4.4 54,16.3 54,23.1 0,9.1" fill="#f04444"/><ellipse cx="24.8" cy="15.5" rx="2" ry="1.1" fill="#3ddc3d"/><circle cx="50" cy="3.8" r="4.6" fill="#8e8e8e" stroke="#ddd" stroke-width=".8"/><path d="M50.3 1.6V6" stroke="#fff" stroke-width="1"/></svg>
<div class="a" style="left:237px;top:353px;width:190px;height:180px;background:#fff;"></div>
<svg class="a" style="left:242px;top:363px;" width="9" height="7" viewBox="0 0 9 7"><path d="M1.5 1.8L4.3 4.6L7.1 1.8" fill="none" stroke="#444" stroke-width="1.25"/></svg>
<div class="a t" style="left:256.00px;top:360.65px;font-size:8.53px;color:#777;transform:scaleX(0.870);">Activity</div>
<div class="a" style="left:245px;top:376px;width:53.5px;height:12px;background:#f2f2f2;border:1px solid #dcdcdc;border-radius:1px;"></div>
<div class="a t" style="left:251.00px;top:378.39px;font-size:7.64px;color:#333;transform:scaleX(0.870);">Add comment</div>
<div class="a t" style="left:245.00px;top:397.32px;font-size:7.41px;color:#888;transform:scaleX(0.870);">Patrick O'Leary - Majestic - 27 March 2019</div>
<div class="a t" style="left:245.00px;top:409.33px;font-size:7.40px;color:#111;transform:scaleX(0.870);">Edited set from Not in set to Level 1</div>
<div class="a t" style="left:245.00px;top:426.32px;font-size:7.41px;color:#888;transform:scaleX(0.870);">Patrick O'Leary - Majestic - 27 March 2019</div>
<div class="a t" style="left:245.00px;top:438.32px;font-size:7.43px;color:#111;transform:scaleX(0.870);">Added related subject models;</div>
<div class="a t" style="left:245.00px;top:447.32px;font-size:7.41px;color:#111;transform:scaleX(0.870);">Structural</div>
<div class="a t" style="left:245.00px;top:456.33px;font-size:7.36px;color:#111;transform:scaleX(0.870);">Mechanical</div>
<div class="a t" style="left:245.00px;top:474.32px;font-size:7.41px;color:#888;transform:scaleX(0.870);">Patrick O'Leary - Majestic - 27 March 2019</div>
<div class="a t" style="left:245.00px;top:485.82px;font-size:7.41px;color:#111;transform:scaleX(0.870);">Added viewpoint 1</div>
<div class="a t" style="left:245.00px;top:503.32px;font-size:7.41px;color:#888;transform:scaleX(0.870);">Patrick O'Leary - Majestic - 27 March 2019</div>
<div class="a t" style="left:245.00px;top:514.82px;font-size:7.41px;color:#111;transform:scaleX(0.870);">Edited assignee from No assignee to Eric Gibb, Apex</div>
<div class="a" style="left:237px;top:532px;width:190px;height:1px;background:#f0f0f0;"></div>
<div class="a" style="left:439px;top:115px;width:468px;height:489px;background:#fff;"></div>
<svg class="a" style="left:446px;top:122px;" width="9" height="7" viewBox="0 0 9 7"><path d="M1.5 1.8L4.3 4.6L7.1 1.8" fill="none" stroke="#444" stroke-width="1.25"/></svg>
<div class="a t" style="left:459.00px;top:122.32px;font-size:7.42px;color:#666;transform:scaleX(0.870);">Viewpoint snapshot</div>
<div class="a" style="left:439px;top:137px;width:468px;height:186px;background:#f4f4f4;"></div>
<div class="a" style="left:439px;top:137px;width:468px;height:1px;background:#ececec;"></div>
<div class="a" style="left:439px;top:325px;width:468px;height:1px;background:#dedede;"></div>
<svg class="a" style="left:510px;top:137px;" width="328" height="185" viewBox="0 0 328 185"><defs><clipPath id="ca"><polygon points="0.0,0.0 328.0,0.0 328.0,110.0 0.0,28.5"/></clipPath><clipPath id="cb"><polygon points="0.0,48.6 328.0,147.0 328.0,185.0 0.0,185.0"/></clipPath><linearGradient id="mk" x1="0" x2="1"><stop offset=".35" stop-color="#fff"/><stop offset=".55" stop-color="#000"/></linearGradient><mask id="ml"><rect width="328" height="185" fill="url(#mk)"/></mask><linearGradient id="mk2" x1="0" x2="1"><stop offset=".35" stop-color="#000"/><stop offset=".55" stop-color="#fff"/></linearGradient><mask id="mr"><rect width="328" height="185" fill="url(#mk2)"/></mask></defs><rect width="328" height="185" fill="#090909"/><g clip-path="url(#ca)" stroke="#474747" stroke-width=".7"><line x1="-75.7" y1="0" x2="-66.7" y2="185"/><line x1="-63.9" y1="0" x2="-54.9" y2="185"/><line x1="-49.4" y1="0" x2="-40.4" y2="185"/><line x1="-39.2" y1="0" x2="-30.2" y2="185"/><line x1="-24.9" y1="0" x2="-15.9" y2="185"/><line x1="-13.0" y1="0" x2="-4.0" y2="185"/><line x1="-1.8" y1="0" x2="7.2" y2="185"/><line x1="12.5" y1="0" x2="21.5" y2="185"/><line x1="23.1" y1="0" x2="32.1" y2="185"/><line x1="37.2" y1="0" x2="46.2" y2="185"/><line x1="48.3" y1="0" x2="57.3" y2="185"/><line x1="60.9" y1="0" x2="69.9" y2="185"/><line x1="74.7" y1="0" x2="83.7" y2="185"/><line x1="88.8" y1="0" x2="97.8" y2="185"/><line x1="98.5" y1="0" x2="107.5" y2="185"/><line x1="111.4" y1="0" x2="120.4" y2="185"/><line x1="125.5" y1="0" x2="134.5" y2="185"/><line x1="139.3" y1="0" x2="148.3" y2="185"/><line x1="150.3" y1="0" x2="159.3" y2="185"/><line x1="162.1" y1="0" x2="171.1" y2="185"/><line x1="176.9" y1="0" x2="185.9" y2="185"/><line x1="185.7" y1="0" x2="194.7" y2="185"/><line x1="201.4" y1="0" x2="210.4" y2="185"/><line x1="211.7" y1="0" x2="220.7" y2="185"/><line x1="223.6" y1="0" x2="232.6" y2="185"/><line x1="236.0" y1="0" x2="245.0" y2="185"/><line x1="249.2" y1="0" x2="258.2" y2="185"/><line x1="263.8" y1="0" x2="272.8" y2="185"/><line x1="273.7" y1="0" x2="282.7" y2="185"/><line x1="287.8" y1="0" x2="296.8" y2="185"/><line x1="300.6" y1="0" x2="309.6" y2="185"/><line x1="312.0" y1="0" x2="321.0" y2="185"/><line x1="325.2" y1="0" x2="334.2" y2="185"/><line x1="335.8" y1="0" x2="344.8" y2="185"/><line x1="348.2" y1="0" x2="357.2" y2="185"/><line x1="361.3" y1="0" x2="370.3" y2="185"/><line x1="0" y1="-79.5" x2="328" y2="-13.9"/><line x1="0" y1="-72.2" x2="328" y2="-6.6"/><line x1="0" y1="-64.6" x2="328" y2="1.0"/><line x1="0" y1="-55.7" x2="328" y2="9.9"/><line x1="0" y1="-48.1" x2="328" y2="17.5"/><line x1="0" y1="-40.6" x2="328" y2="25.0"/><line x1="0" y1="-31.1" x2="328" y2="34.5"/><line x1="0" y1="-23.4" x2="328" y2="42.2"/><line x1="0" y1="-16.8" x2="328" y2="48.8"/><line x1="0" y1="-7.8" x2="328" y2="57.8"/><line x1="0" y1="0.1" x2="328" y2="65.7"/><line x1="0" y1="9.1" x2="328" y2="74.7"/><line x1="0" y1="16.7" x2="328" y2="82.3"/><line x1="0" y1="23.4" x2="328" y2="89.0"/><line x1="0" y1="33.4" x2="328" y2="99.0"/><line x1="0" y1="38.9" x2="328" y2="104.5"/><line x1="0" y1="47.8" x2="328" y2="113.4"/><line x1="0" y1="56.8" x2="328" y2="122.4"/><line x1="0" y1="63.0" x2="328" y2="128.6"/><line x1="0" y1="72.0" x2="328" y2="137.6"/><line x1="0" y1="78.6" x2="328" y2="144.2"/><line x1="0" y1="88.5" x2="328" y2="154.1"/><line x1="0" y1="96.8" x2="328" y2="162.4"/><line x1="0" y1="104.2" x2="328" y2="169.8"/><line x1="0" y1="113.1" x2="328" y2="178.7"/><line x1="0" y1="119.4" x2="328" y2="185.0"/><line x1="0" y1="128.6" x2="328" y2="194.2"/><line x1="0" y1="136.3" x2="328" y2="201.9"/><line x1="0" y1="144.2" x2="328" y2="209.8"/><line x1="0" y1="151.9" x2="328" y2="217.5"/><line x1="0" y1="161.0" x2="328" y2="226.6"/><line x1="0" y1="169.3" x2="328" y2="234.9"/><line x1="0" y1="175.9" x2="328" y2="241.5"/><line x1="0" y1="184.5" x2="328" y2="250.1"/><line x1="0" y1="190.7" x2="328" y2="256.3"/><line x1="0" y1="200.6" x2="328" y2="266.2"/><line x1="0" y1="208.4" x2="328" y2="274.0"/><line x1="0" y1="217.5" x2="328" y2="283.1"/><line x1="0" y1="225.0" x2="328" y2="290.6"/><line x1="0" y1="231.4" x2="328" y2="297.0"/></g><g clip-path="url(#cb)"><g mask="url(#ml)" stroke="#444" stroke-width=".7"><line x1="-100.5" y1="185" x2="9.5" y2="125.0"/><line x1="-89.3" y1="185" x2="20.7" y2="125.0"/><line x1="-81.9" y1="185" x2="28.1" y2="125.0"/><line x1="-70.2" y1="185" x2="39.8" y2="125.0"/><line x1="-61.3" y1="185" x2="48.7" y2="125.0"/><line x1="-51.5" y1="185" x2="58.5" y2="125.0"/><line x1="-41.8" y1="185" x2="68.2" y2="125.0"/><line x1="-28.9" y1="185" x2="81.1" y2="125.0"/><line x1="-21.5" y1="185" x2="88.5" y2="125.0"/><line x1="-11.0" y1="185" x2="99.0" y2="125.0"/><line x1="-0.4" y1="185" x2="109.6" y2="125.0"/><line x1="11.5" y1="185" x2="121.5" y2="125.0"/><line x1="18.3" y1="185" x2="128.3" y2="125.0"/><line x1="29.8" y1="185" x2="139.8" y2="125.0"/><line x1="40.2" y1="185" x2="150.2" y2="125.0"/><line x1="51.5" y1="185" x2="161.5" y2="125.0"/><line x1="61.3" y1="185" x2="171.3" y2="125.0"/><line x1="71.5" y1="185" x2="181.5" y2="125.0"/><line x1="79.1" y1="185" x2="189.1" y2="125.0"/><line x1="89.7" y1="185" x2="199.7" y2="125.0"/><line x1="99.4" y1="185" x2="209.4" y2="125.0"/><line x1="111.5" y1="185" x2="221.5" y2="125.0"/><line x1="121.8" y1="185" x2="231.8" y2="125.0"/><line x1="128.6" y1="185" x2="238.6" y2="125.0"/><line x1="138.7" y1="185" x2="248.7" y2="125.0"/><line x1="148.9" y1="185" x2="258.9" y2="125.0"/><line x1="158.9" y1="185" x2="268.9" y2="125.0"/><line x1="169.9" y1="185" x2="279.9" y2="125.0"/><line x1="180.4" y1="185" x2="290.4" y2="125.0"/><line x1="189.1" y1="185" x2="299.1" y2="125.0"/><line x1="198.0" y1="185" x2="308.0" y2="125.0"/><line x1="209.7" y1="185" x2="319.7" y2="125.0"/><line x1="219.5" y1="185" x2="329.5" y2="125.0"/><line x1="230.3" y1="185" x2="340.3" y2="125.0"/><line x1="241.8" y1="185" x2="351.8" y2="125.0"/><line x1="250.8" y1="185" x2="360.8" y2="125.0"/><line x1="260.1" y1="185" x2="370.1" y2="125.0"/><line x1="270.5" y1="185" x2="380.5" y2="125.0"/><line x1="280.7" y1="185" x2="390.7" y2="125.0"/><line x1="288.2" y1="185" x2="398.2" y2="125.0"/><line x1="-218.4" y1="30" x2="-143.4" y2="185"/><line x1="-207.9" y1="30" x2="-132.9" y2="185"/><line x1="-196.5" y1="30" x2="-121.5" y2="185"/><line x1="-185.8" y1="30" x2="-110.8" y2="185"/><line x1="-176.4" y1="30" x2="-101.4" y2="185"/><line x1="-165.4" y1="30" x2="-90.4" y2="185"/><line x1="-155.6" y1="30" x2="-80.6" y2="185"/><line x1="-142.5" y1="30" x2="-67.5" y2="185"/><line x1="-133.8" y1="30" x2="-58.8" y2="185"/><line x1="-122.7" y1="30" x2="-47.7" y2="185"/><line x1="-111.2" y1="30" x2="-36.2" y2="185"/><line x1="-100.4" y1="30" x2="-25.4" y2="185"/><line x1="-88.6" y1="30" x2="-13.6" y2="185"/><line x1="-78.8" y1="30" x2="-3.8" y2="185"/><line x1="-68.0" y1="30" x2="7.0" y2="185"/><line x1="-56.4" y1="30" x2="18.6" y2="185"/><line x1="-45.6" y1="30" x2="29.4" y2="185"/><line x1="-33.5" y1="30" x2="41.5" y2="185"/><line x1="-23.9" y1="30" x2="51.1" y2="185"/><line x1="-9.5" y1="30" x2="65.5" y2="185"/><line x1="0.5" y1="30" x2="75.5" y2="185"/><line x1="9.6" y1="30" x2="84.6" y2="185"/><line x1="21.0" y1="30" x2="96.0" y2="185"/><line x1="32.4" y1="30" x2="107.4" y2="185"/><line x1="43.5" y1="30" x2="118.5" y2="185"/><line x1="53.5" y1="30" x2="128.5" y2="185"/><line x1="67.4" y1="30" x2="142.4" y2="185"/><line x1="79.0" y1="30" x2="154.0" y2="185"/><line x1="87.9" y1="30" x2="162.9" y2="185"/><line x1="98.9" y1="30" x2="173.9" y2="185"/><line x1="108.3" y1="30" x2="183.3" y2="185"/><line x1="119.4" y1="30" x2="194.4" y2="185"/><line x1="131.4" y1="30" x2="206.4" y2="185"/><line x1="142.1" y1="30" x2="217.1" y2="185"/><line x1="155.3" y1="30" x2="230.3" y2="185"/><line x1="163.6" y1="30" x2="238.6" y2="185"/><line x1="174.1" y1="30" x2="249.1" y2="185"/><line x1="188.8" y1="30" x2="263.8" y2="185"/><line x1="198.1" y1="30" x2="273.1" y2="185"/><line x1="207.6" y1="30" x2="282.6" y2="185"/><line x1="220.2" y1="30" x2="295.2" y2="185"/><line x1="229.1" y1="30" x2="304.1" y2="185"/><line x1="242.1" y1="30" x2="317.1" y2="185"/><line x1="254.9" y1="30" x2="329.9" y2="185"/><line x1="265.5" y1="30" x2="340.5" y2="185"/></g><g mask="url(#mr)" stroke="#4a4a4a" stroke-width=".75"><line x1="0" y1="-34.4" x2="328" y2="57.4"/><line x1="0" y1="-28.7" x2="328" y2="63.1"/><line x1="0" y1="-21.4" x2="328" y2="70.4"/><line x1="0" y1="-15.0" x2="328" y2="76.8"/><line x1="0" y1="-6.2" x2="328" y2="85.7"/><line x1="0" y1="0.1" x2="328" y2="91.9"/><line x1="0" y1="7.8" x2="328" y2="99.7"/><line x1="0" y1="13.5" x2="328" y2="105.3"/><line x1="0" y1="20.2" x2="328" y2="112.0"/><line x1="0" y1="28.9" x2="328" y2="120.8"/><line x1="0" y1="36.5" x2="328" y2="128.3"/><line x1="0" y1="43.1" x2="328" y2="134.9"/><line x1="0" y1="49.9" x2="328" y2="141.8"/><line x1="0" y1="57.0" x2="328" y2="148.8"/><line x1="0" y1="63.7" x2="328" y2="155.6"/><line x1="0" y1="69.2" x2="328" y2="161.0"/><line x1="0" y1="77.1" x2="328" y2="168.9"/><line x1="0" y1="83.6" x2="328" y2="175.4"/><line x1="0" y1="89.6" x2="328" y2="181.4"/><line x1="0" y1="96.6" x2="328" y2="188.4"/><line x1="0" y1="104.3" x2="328" y2="196.2"/><line x1="0" y1="111.3" x2="328" y2="203.1"/><line x1="0" y1="119.6" x2="328" y2="211.4"/><line x1="0" y1="127.4" x2="328" y2="219.2"/><line x1="0" y1="132.8" x2="328" y2="224.7"/><line x1="0" y1="141.3" x2="328" y2="233.2"/><line x1="0" y1="148.5" x2="328" y2="240.3"/><line x1="0" y1="155.4" x2="328" y2="247.2"/><line x1="0" y1="160.6" x2="328" y2="252.4"/><line x1="0" y1="167.2" x2="328" y2="259.0"/><line x1="0" y1="174.2" x2="328" y2="266.0"/><line x1="0" y1="181.1" x2="328" y2="272.9"/><line x1="0" y1="188.1" x2="328" y2="280.0"/><line x1="0" y1="196.4" x2="328" y2="288.2"/><line x1="0" y1="204.2" x2="328" y2="296.0"/><line x1="0" y1="211.0" x2="328" y2="302.9"/><line x1="0" y1="216.9" x2="328" y2="308.8"/><line x1="0" y1="224.5" x2="328" y2="316.3"/><line x1="0" y1="231.9" x2="328" y2="323.7"/><line x1="0" y1="236.8" x2="328" y2="328.6"/><line x1="0" y1="245.5" x2="328" y2="337.3"/><line x1="0" y1="253.2" x2="328" y2="345.1"/><line x1="0" y1="259.8" x2="328" y2="351.7"/><line x1="0" y1="266.8" x2="328" y2="358.6"/><line x1="0" y1="272.9" x2="328" y2="364.8"/><line x1="118.4" y1="185" x2="140.4" y2="0"/><line x1="129.9" y1="185" x2="151.9" y2="0"/><line x1="136.2" y1="185" x2="158.2" y2="0"/><line x1="147.0" y1="185" x2="169.0" y2="0"/><line x1="156.4" y1="185" x2="178.4" y2="0"/><line x1="162.0" y1="185" x2="184.0" y2="0"/><line x1="170.5" y1="185" x2="192.5" y2="0"/><line x1="181.7" y1="185" x2="203.7" y2="0"/><line x1="189.1" y1="185" x2="211.1" y2="0"/><line x1="194.9" y1="185" x2="216.9" y2="0"/><line x1="203.1" y1="185" x2="225.1" y2="0"/><line x1="211.8" y1="185" x2="233.8" y2="0"/><line x1="224.0" y1="185" x2="246.0" y2="0"/><line x1="232.0" y1="185" x2="254.0" y2="0"/><line x1="237.2" y1="185" x2="259.2" y2="0"/><line x1="249.1" y1="185" x2="271.1" y2="0"/><line x1="258.4" y1="185" x2="280.4" y2="0"/><line x1="265.3" y1="185" x2="287.3" y2="0"/><line x1="272.3" y1="185" x2="294.3" y2="0"/><line x1="281.7" y1="185" x2="303.7" y2="0"/><line x1="288.2" y1="185" x2="310.2" y2="0"/><line x1="296.1" y1="185" x2="318.1" y2="0"/><line x1="309.4" y1="185" x2="331.4" y2="0"/><line x1="316.2" y1="185" x2="338.2" y2="0"/><line x1="324.1" y1="185" x2="346.1" y2="0"/><line x1="334.7" y1="185" x2="356.7" y2="0"/><line x1="340.7" y1="185" x2="362.7" y2="0"/><line x1="351.4" y1="185" x2="373.4" y2="0"/><line x1="359.6" y1="185" x2="381.6" y2="0"/><line x1="365.1" y1="185" x2="387.1" y2="0"/><line x1="373.8" y1="185" x2="395.8" y2="0"/><line x1="382.5" y1="185" x2="404.5" y2="0"/><line x1="390.7" y1="185" x2="412.7" y2="0"/><line x1="400.9" y1="185" x2="422.9" y2="0"/><line x1="407.8" y1="185" x2="429.8" y2="0"/><line x1="417.1" y1="185" x2="439.1" y2="0"/><line x1="424.2" y1="185" x2="446.2" y2="0"/><line x1="436.6" y1="185" x2="458.6" y2="0"/><line x1="442.3" y1="185" x2="464.3" y2="0"/><line x1="451.3" y1="185" x2="473.3" y2="0"/></g></g><g stroke="#444" stroke-width=".6"><line x1="191.3" y1="167.3" x2="187.0" y2="168.5"/><line x1="42.9" y1="28.1" x2="43.5" y2="23.1"/><line x1="199.6" y1="143.6" x2="202.2" y2="144.8"/><line x1="237.9" y1="102.9" x2="237.6" y2="106.9"/><line x1="158.3" y1="143.7" x2="159.1" y2="136.4"/><line x1="90.8" y1="142.9" x2="95.7" y2="144.2"/><line x1="145.4" y1="113.3" x2="150.2" y2="114.7"/><line x1="148.4" y1="98.7" x2="143.6" y2="99.5"/><line x1="287.5" y1="174.3" x2="287.9" y2="170.8"/><line x1="275.5" y1="25.4" x2="278.2" y2="26.1"/><line x1="220.1" y1="79.2" x2="223.3" y2="80.1"/><line x1="294.2" y1="28.6" x2="295.0" y2="22.3"/><line x1="83.0" y1="25.4" x2="87.7" y2="26.7"/><line x1="130.6" y1="90.1" x2="131.6" y2="82.3"/><line x1="231.7" y1="183.9" x2="235.9" y2="185.1"/><line x1="104.5" y1="133.6" x2="104.7" y2="131.5"/><line x1="230.6" y1="71.1" x2="235.6" y2="72.5"/><line x1="37.0" y1="169.9" x2="40.3" y2="170.8"/><line x1="87.1" y1="7.3" x2="87.9" y2="0.7"/><line x1="268.9" y1="157.2" x2="269.6" y2="151.2"/><line x1="49.0" y1="170.0" x2="54.2" y2="171.5"/><line x1="91.5" y1="147.9" x2="94.5" y2="148.8"/><line x1="307.8" y1="117.4" x2="308.6" y2="110.6"/><line x1="21.9" y1="159.6" x2="24.1" y2="163.7"/><line x1="137.0" y1="169.4" x2="137.7" y2="163.7"/><line x1="307.7" y1="179.3" x2="311.1" y2="180.3"/><line x1="206.2" y1="98.3" x2="206.6" y2="95.0"/><line x1="88.7" y1="148.7" x2="96.4" y2="150.8"/><line x1="240.5" y1="101.9" x2="240.8" y2="98.8"/><line x1="34.9" y1="151.5" x2="35.4" y2="146.9"/><line x1="318.3" y1="56.9" x2="318.7" y2="53.7"/><line x1="273.0" y1="130.7" x2="278.6" y2="132.3"/><line x1="322.1" y1="154.8" x2="324.1" y2="155.4"/><line x1="141.3" y1="10.2" x2="143.5" y2="15.8"/><line x1="219.9" y1="52.2" x2="220.4" y2="48.7"/><line x1="60.8" y1="49.8" x2="62.7" y2="50.3"/><line x1="319.0" y1="101.2" x2="322.4" y2="102.1"/><line x1="71.5" y1="33.8" x2="75.3" y2="34.9"/><line x1="164.9" y1="37.2" x2="169.8" y2="38.5"/><line x1="268.0" y1="26.6" x2="273.3" y2="28.1"/><line x1="99.8" y1="43.1" x2="100.5" y2="37.6"/><line x1="215.7" y1="132.5" x2="222.7" y2="134.4"/><line x1="236.4" y1="91.4" x2="236.8" y2="87.7"/><line x1="14.4" y1="154.5" x2="11.5" y2="161.3"/><line x1="45.7" y1="96.9" x2="50.5" y2="98.2"/><line x1="271.1" y1="108.1" x2="271.9" y2="100.7"/><line x1="27.9" y1="7.7" x2="28.6" y2="2.0"/><line x1="274.1" y1="103.3" x2="274.8" y2="97.6"/><line x1="160.5" y1="0.6" x2="155.7" y2="5.4"/><line x1="294.5" y1="17.0" x2="295.1" y2="11.9"/><line x1="82.7" y1="13.8" x2="83.2" y2="10.2"/><line x1="75.7" y1="120.2" x2="80.3" y2="121.5"/><line x1="157.1" y1="126.5" x2="157.9" y2="119.9"/><line x1="25.4" y1="27.3" x2="28.8" y2="28.2"/><line x1="203.7" y1="24.7" x2="208.5" y2="26.0"/><line x1="227.0" y1="125.0" x2="227.5" y2="121.3"/><line x1="152.8" y1="141.9" x2="160.5" y2="144.0"/><line x1="320.8" y1="173.2" x2="321.1" y2="175.3"/><line x1="317.5" y1="83.1" x2="318.0" y2="79.6"/><line x1="24.5" y1="16.7" x2="30.7" y2="18.4"/><line x1="43.5" y1="151.7" x2="48.4" y2="153.1"/><line x1="75.9" y1="166.1" x2="80.6" y2="167.4"/><line x1="311.6" y1="126.1" x2="312.1" y2="121.7"/><line x1="112.8" y1="58.5" x2="119.6" y2="60.4"/><line x1="275.2" y1="22.2" x2="282.5" y2="24.2"/><line x1="83.1" y1="12.0" x2="87.2" y2="13.2"/><line x1="118.3" y1="79.2" x2="121.8" y2="80.2"/><line x1="16.9" y1="122.5" x2="22.5" y2="124.0"/><line x1="143.1" y1="58.4" x2="143.9" y2="51.8"/><line x1="290.0" y1="150.2" x2="284.5" y2="151.8"/><line x1="180.1" y1="133.1" x2="180.4" y2="130.8"/><line x1="201.7" y1="25.6" x2="202.0" y2="32.8"/><line x1="41.8" y1="87.4" x2="45.7" y2="88.4"/><line x1="133.2" y1="44.2" x2="138.0" y2="45.5"/><line x1="54.9" y1="29.9" x2="55.3" y2="26.7"/><line x1="180.5" y1="83.8" x2="181.0" y2="79.8"/><line x1="45.8" y1="35.6" x2="48.2" y2="36.3"/><line x1="104.7" y1="68.1" x2="111.3" y2="70.0"/><line x1="245.9" y1="76.4" x2="246.4" y2="71.9"/><line x1="88.6" y1="139.1" x2="93.4" y2="140.5"/><line x1="41.3" y1="93.1" x2="42.0" y2="87.4"/><line x1="30.4" y1="165.9" x2="30.9" y2="161.6"/><line x1="312.9" y1="157.0" x2="319.9" y2="158.9"/><line x1="139.5" y1="141.3" x2="140.3" y2="134.5"/><line x1="0.1" y1="72.4" x2="1.0" y2="64.9"/><line x1="318.9" y1="46.0" x2="321.2" y2="47.2"/><line x1="318.8" y1="20.1" x2="319.6" y2="13.2"/><line x1="27.9" y1="143.7" x2="29.7" y2="144.5"/><line x1="301.7" y1="119.4" x2="305.4" y2="120.4"/><line x1="173.3" y1="80.9" x2="179.6" y2="82.7"/><line x1="172.0" y1="107.8" x2="175.3" y2="110.6"/><line x1="0.4" y1="99.4" x2="8.1" y2="101.6"/><line x1="211.4" y1="163.5" x2="212.0" y2="158.7"/><line x1="9.6" y1="76.2" x2="10.3" y2="70.3"/><line x1="163.4" y1="124.8" x2="164.0" y2="120.3"/><line x1="303.5" y1="42.0" x2="303.7" y2="39.8"/><line x1="118.8" y1="73.3" x2="120.1" y2="74.9"/><line x1="22.1" y1="91.7" x2="22.5" y2="88.5"/><line x1="75.7" y1="41.0" x2="79.6" y2="46.2"/><line x1="162.6" y1="34.7" x2="165.8" y2="35.5"/><line x1="311.2" y1="27.1" x2="314.6" y2="29.8"/><line x1="46.5" y1="9.6" x2="48.8" y2="10.2"/><line x1="240.3" y1="184.5" x2="241.2" y2="177.0"/><line x1="214.0" y1="97.1" x2="214.6" y2="92.3"/><line x1="275.2" y1="182.2" x2="279.7" y2="183.5"/><line x1="91.8" y1="65.0" x2="92.7" y2="57.3"/><line x1="124.7" y1="142.2" x2="128.4" y2="143.2"/><line x1="16.2" y1="87.6" x2="16.7" y2="83.4"/><line x1="106.0" y1="136.4" x2="106.6" y2="131.6"/><line x1="266.3" y1="141.8" x2="268.4" y2="142.4"/><line x1="263.5" y1="11.5" x2="266.6" y2="12.1"/><line x1="111.2" y1="50.4" x2="118.7" y2="52.4"/><line x1="244.8" y1="127.6" x2="249.3" y2="133.6"/><line x1="300.6" y1="117.3" x2="301.5" y2="109.7"/><line x1="35.2" y1="132.4" x2="39.8" y2="133.7"/><line x1="299.6" y1="150.7" x2="302.3" y2="151.5"/><line x1="263.2" y1="136.6" x2="258.0" y2="141.2"/><line x1="77.5" y1="159.3" x2="73.7" y2="162.3"/><line x1="25.9" y1="36.5" x2="32.2" y2="38.2"/><line x1="213.1" y1="89.1" x2="213.7" y2="83.9"/><line x1="289.8" y1="182.7" x2="293.2" y2="183.7"/><line x1="138.1" y1="182.9" x2="139.1" y2="175.1"/><line x1="136.7" y1="114.8" x2="142.5" y2="116.4"/><line x1="255.8" y1="54.4" x2="259.3" y2="55.4"/><line x1="242.1" y1="36.9" x2="242.5" y2="33.4"/><line x1="92.3" y1="167.9" x2="95.3" y2="168.7"/><line x1="325.5" y1="93.9" x2="325.9" y2="90.5"/><line x1="325.0" y1="18.9" x2="325.6" y2="14.1"/><line x1="299.9" y1="7.5" x2="300.4" y2="3.7"/><line x1="197.0" y1="153.2" x2="200.0" y2="153.9"/><line x1="284.1" y1="83.1" x2="287.5" y2="84.0"/><line x1="34.7" y1="110.3" x2="40.2" y2="111.8"/><line x1="111.5" y1="8.2" x2="112.5" y2="0.2"/><line x1="267.2" y1="151.5" x2="269.0" y2="155.6"/><line x1="102.4" y1="37.6" x2="108.9" y2="39.4"/><line x1="133.9" y1="147.2" x2="139.2" y2="150.0"/><line x1="29.9" y1="30.3" x2="35.8" y2="31.9"/><line x1="219.0" y1="77.3" x2="221.3" y2="77.9"/><line x1="135.8" y1="3.4" x2="136.6" y2="-3.2"/><line x1="128.2" y1="74.9" x2="129.1" y2="67.3"/><line x1="139.0" y1="151.8" x2="139.5" y2="147.4"/><line x1="253.6" y1="24.0" x2="253.8" y2="21.8"/><line x1="29.2" y1="115.1" x2="29.7" y2="110.9"/><line x1="114.1" y1="29.9" x2="114.5" y2="26.9"/><line x1="160.9" y1="148.9" x2="161.8" y2="141.1"/><line x1="274.6" y1="8.0" x2="278.7" y2="14.3"/><line x1="303.8" y1="71.8" x2="304.7" y2="64.4"/><line x1="210.0" y1="158.5" x2="210.7" y2="152.8"/><line x1="272.0" y1="33.8" x2="273.0" y2="37.0"/><line x1="51.3" y1="66.5" x2="51.7" y2="63.6"/><line x1="13.5" y1="104.0" x2="19.8" y2="105.8"/><line x1="38.6" y1="110.9" x2="43.7" y2="112.3"/><line x1="212.9" y1="57.0" x2="216.3" y2="58.0"/><line x1="146.5" y1="81.1" x2="146.8" y2="79.0"/><line x1="152.6" y1="82.7" x2="153.3" y2="77.0"/><line x1="265.9" y1="74.1" x2="268.2" y2="74.7"/><line x1="30.1" y1="81.8" x2="30.7" y2="76.7"/><line x1="27.0" y1="135.7" x2="33.4" y2="137.5"/><line x1="246.7" y1="165.6" x2="252.4" y2="167.1"/><line x1="281.1" y1="184.3" x2="281.9" y2="177.9"/><line x1="43.2" y1="163.9" x2="43.6" y2="160.2"/><line x1="225.1" y1="133.4" x2="222.2" y2="135.1"/><line x1="248.0" y1="29.4" x2="248.9" y2="22.0"/><line x1="47.1" y1="92.9" x2="54.3" y2="94.9"/><line x1="202.0" y1="43.9" x2="202.5" y2="39.7"/><line x1="52.9" y1="173.2" x2="53.6" y2="167.2"/><line x1="259.8" y1="48.9" x2="266.2" y2="50.7"/><line x1="316.9" y1="83.8" x2="321.8" y2="85.2"/><line x1="82.7" y1="99.1" x2="89.5" y2="101.0"/><line x1="86.8" y1="183.2" x2="92.1" y2="184.7"/><line x1="145.1" y1="32.7" x2="151.5" y2="33.7"/><line x1="83.2" y1="118.3" x2="90.8" y2="120.4"/><line x1="240.4" y1="138.2" x2="240.8" y2="134.9"/><line x1="137.0" y1="67.4" x2="137.1" y2="69.6"/><line x1="214.2" y1="4.1" x2="216.2" y2="4.7"/><line x1="171.6" y1="98.8" x2="172.1" y2="94.4"/><line x1="67.0" y1="115.4" x2="67.6" y2="110.6"/><line x1="232.1" y1="83.4" x2="234.3" y2="84.0"/><line x1="131.8" y1="48.9" x2="130.9" y2="50.7"/><line x1="292.8" y1="110.0" x2="291.1" y2="115.2"/><line x1="240.6" y1="46.0" x2="247.9" y2="47.0"/><line x1="8.3" y1="34.3" x2="11.1" y2="35.1"/><line x1="4.1" y1="101.9" x2="5.0" y2="94.3"/><line x1="170.0" y1="118.9" x2="171.5" y2="124.6"/><line x1="57.3" y1="57.2" x2="57.7" y2="53.5"/><line x1="234.7" y1="1.2" x2="235.5" y2="-5.8"/><line x1="26.4" y1="121.3" x2="29.3" y2="122.1"/><line x1="76.2" y1="7.2" x2="80.1" y2="8.3"/><line x1="233.4" y1="49.2" x2="234.5" y2="54.4"/><line x1="318.8" y1="54.7" x2="326.1" y2="56.7"/><line x1="288.7" y1="2.8" x2="289.1" y2="-0.7"/><line x1="309.9" y1="138.0" x2="313.7" y2="139.1"/><line x1="197.2" y1="70.2" x2="190.3" y2="71.9"/><line x1="154.0" y1="155.3" x2="154.7" y2="149.2"/><line x1="313.5" y1="43.3" x2="314.3" y2="36.0"/><line x1="204.2" y1="14.4" x2="211.4" y2="16.4"/><line x1="36.7" y1="115.1" x2="39.6" y2="115.9"/><line x1="10.1" y1="25.6" x2="15.8" y2="27.2"/><line x1="241.7" y1="12.2" x2="244.0" y2="17.2"/><line x1="292.3" y1="12.2" x2="293.2" y2="5.0"/><line x1="35.1" y1="38.1" x2="37.7" y2="38.8"/><line x1="270.6" y1="116.8" x2="274.2" y2="117.8"/><line x1="259.8" y1="119.6" x2="263.4" y2="120.6"/><line x1="6.9" y1="47.5" x2="10.4" y2="48.5"/><line x1="298.6" y1="142.3" x2="304.0" y2="143.8"/><line x1="202.8" y1="5.7" x2="207.1" y2="6.9"/><line x1="113.7" y1="130.4" x2="118.8" y2="131.8"/><line x1="188.4" y1="53.1" x2="192.9" y2="54.3"/><line x1="250.0" y1="180.9" x2="250.2" y2="178.9"/><line x1="228.0" y1="152.7" x2="225.8" y2="160.2"/><line x1="85.5" y1="174.6" x2="85.9" y2="170.9"/><line x1="163.4" y1="20.3" x2="169.1" y2="21.8"/><line x1="258.1" y1="116.2" x2="258.6" y2="112.1"/><line x1="292.5" y1="137.9" x2="296.9" y2="139.1"/><line x1="67.6" y1="48.7" x2="68.5" y2="41.3"/><line x1="322.2" y1="116.7" x2="329.3" y2="119.7"/><line x1="247.5" y1="139.3" x2="253.1" y2="140.9"/><line x1="171.1" y1="160.6" x2="175.7" y2="161.8"/><line x1="55.6" y1="81.2" x2="56.4" y2="74.6"/><line x1="109.6" y1="118.9" x2="115.5" y2="120.5"/><line x1="98.9" y1="130.1" x2="99.7" y2="123.1"/><line x1="319.7" y1="133.8" x2="320.4" y2="128.2"/><line x1="107.6" y1="35.0" x2="115.2" y2="37.1"/><line x1="54.0" y1="121.7" x2="54.4" y2="118.6"/><line x1="260.7" y1="135.7" x2="265.2" y2="136.9"/><line x1="92.1" y1="163.8" x2="92.7" y2="159.0"/><line x1="227.4" y1="92.6" x2="228.1" y2="86.8"/><line x1="84.4" y1="136.6" x2="84.6" y2="134.6"/><line x1="230.0" y1="108.7" x2="224.8" y2="111.4"/><line x1="279.6" y1="125.7" x2="285.2" y2="127.3"/><line x1="85.2" y1="129.6" x2="86.1" y2="122.3"/><line x1="233.9" y1="116.5" x2="234.3" y2="113.0"/><line x1="6.4" y1="158.8" x2="7.1" y2="153.8"/><line x1="293.4" y1="60.7" x2="295.4" y2="61.2"/><line x1="12.5" y1="100.5" x2="12.9" y2="97.6"/><line x1="170.3" y1="18.7" x2="171.0" y2="13.3"/><line x1="168.0" y1="118.3" x2="168.8" y2="111.3"/><line x1="243.4" y1="84.5" x2="250.1" y2="88.9"/><line x1="250.2" y1="22.6" x2="257.8" y2="24.8"/><line x1="82.8" y1="70.6" x2="83.1" y2="68.3"/><line x1="206.2" y1="124.9" x2="211.5" y2="126.3"/><line x1="243.2" y1="173.9" x2="243.8" y2="168.8"/><line x1="151.6" y1="30.4" x2="152.5" y2="22.9"/><line x1="153.9" y1="104.0" x2="157.1" y2="104.9"/><line x1="218.5" y1="153.7" x2="225.0" y2="155.5"/><line x1="249.2" y1="120.2" x2="250.0" y2="113.5"/><line x1="87.7" y1="69.6" x2="88.1" y2="66.1"/><line x1="158.0" y1="149.0" x2="164.5" y2="150.8"/><line x1="105.1" y1="89.7" x2="110.6" y2="91.2"/><line x1="50.1" y1="56.1" x2="54.3" y2="57.2"/><line x1="297.1" y1="145.0" x2="294.7" y2="146.5"/><line x1="4.9" y1="2.1" x2="12.3" y2="4.2"/><line x1="199.5" y1="107.0" x2="200.3" y2="99.9"/><line x1="113.6" y1="28.2" x2="114.5" y2="20.9"/><line x1="199.9" y1="127.3" x2="207.5" y2="129.5"/><line x1="258.5" y1="155.2" x2="256.7" y2="157.8"/><line x1="25.8" y1="155.3" x2="31.6" y2="156.9"/><line x1="86.8" y1="43.3" x2="89.5" y2="44.1"/><line x1="158.9" y1="167.5" x2="159.6" y2="161.4"/><line x1="177.0" y1="159.6" x2="177.2" y2="157.6"/><line x1="228.3" y1="92.1" x2="228.7" y2="88.3"/><line x1="137.4" y1="177.7" x2="139.7" y2="178.4"/><line x1="6.7" y1="8.5" x2="12.9" y2="10.2"/><line x1="167.5" y1="89.7" x2="168.4" y2="82.3"/><line x1="205.1" y1="62.6" x2="206.0" y2="55.5"/><line x1="255.4" y1="102.5" x2="262.6" y2="104.5"/><line x1="138.5" y1="102.5" x2="139.4" y2="95.6"/><line x1="132.4" y1="93.2" x2="132.9" y2="89.6"/><line x1="214.7" y1="146.5" x2="218.5" y2="147.6"/><line x1="41.8" y1="180.0" x2="42.1" y2="177.5"/><line x1="237.0" y1="163.8" x2="242.1" y2="165.2"/><line x1="35.6" y1="8.6" x2="42.3" y2="10.4"/><line x1="258.8" y1="168.3" x2="256.8" y2="173.6"/><line x1="287.4" y1="15.4" x2="287.7" y2="13.1"/><line x1="33.2" y1="33.5" x2="35.4" y2="34.1"/><line x1="121.0" y1="152.2" x2="127.5" y2="154.0"/><line x1="282.9" y1="34.2" x2="285.1" y2="34.3"/><line x1="210.5" y1="172.8" x2="212.7" y2="173.4"/><line x1="270.5" y1="143.1" x2="271.1" y2="138.7"/><line x1="146.4" y1="2.6" x2="147.0" y2="-1.7"/><line x1="155.9" y1="76.3" x2="156.3" y2="73.7"/><line x1="293.8" y1="116.0" x2="298.2" y2="117.2"/><line x1="323.6" y1="158.8" x2="324.0" y2="155.5"/><line x1="5.8" y1="133.1" x2="6.2" y2="129.7"/><line x1="302.7" y1="67.7" x2="303.5" y2="61.3"/><line x1="239.3" y1="15.6" x2="240.0" y2="9.9"/><line x1="219.6" y1="164.7" x2="226.8" y2="166.6"/><line x1="3.7" y1="2.7" x2="9.4" y2="4.3"/><line x1="127.6" y1="57.8" x2="128.3" y2="52.3"/><line x1="199.7" y1="58.5" x2="200.7" y2="50.9"/><line x1="222.0" y1="26.8" x2="222.8" y2="20.1"/><line x1="206.5" y1="77.3" x2="210.7" y2="78.5"/><line x1="257.4" y1="104.9" x2="261.0" y2="105.6"/><line x1="108.9" y1="112.1" x2="102.1" y2="116.1"/><line x1="273.1" y1="108.2" x2="274.0" y2="100.4"/><line x1="224.6" y1="111.3" x2="231.7" y2="113.3"/><line x1="225.8" y1="59.5" x2="229.3" y2="60.4"/><line x1="94.6" y1="26.0" x2="95.5" y2="18.7"/><line x1="89.8" y1="157.5" x2="90.6" y2="150.7"/><line x1="113.8" y1="15.7" x2="114.4" y2="10.5"/><line x1="258.4" y1="133.6" x2="266.0" y2="135.7"/><line x1="222.3" y1="86.1" x2="225.4" y2="86.9"/><line x1="259.7" y1="85.0" x2="262.1" y2="85.7"/><line x1="76.4" y1="107.2" x2="69.5" y2="109.8"/><line x1="105.3" y1="93.6" x2="108.4" y2="94.5"/><line x1="59.3" y1="129.7" x2="59.8" y2="125.6"/><line x1="255.7" y1="158.5" x2="256.1" y2="155.1"/><line x1="122.7" y1="19.6" x2="123.4" y2="13.9"/><line x1="103.6" y1="5.6" x2="107.1" y2="6.6"/><line x1="11.0" y1="183.2" x2="11.3" y2="190.4"/><line x1="70.1" y1="171.2" x2="70.5" y2="167.6"/><line x1="251.7" y1="151.5" x2="259.2" y2="153.6"/><line x1="111.1" y1="184.0" x2="115.3" y2="185.1"/><line x1="182.8" y1="161.1" x2="187.4" y2="162.3"/><line x1="283.1" y1="118.4" x2="290.3" y2="120.4"/><line x1="84.4" y1="104.4" x2="78.6" y2="105.2"/><line x1="128.9" y1="82.9" x2="129.3" y2="80.0"/><line x1="56.5" y1="174.2" x2="64.0" y2="175.6"/><line x1="296.7" y1="154.9" x2="297.0" y2="152.6"/><line x1="18.3" y1="26.8" x2="24.6" y2="28.5"/><line x1="193.4" y1="81.6" x2="199.2" y2="83.2"/><line x1="84.3" y1="23.0" x2="84.9" y2="18.1"/><line x1="264.9" y1="169.1" x2="265.8" y2="161.8"/><line x1="262.0" y1="29.0" x2="268.8" y2="30.7"/><line x1="284.3" y1="164.4" x2="287.0" y2="165.2"/><line x1="303.7" y1="71.2" x2="305.8" y2="71.8"/><line x1="105.8" y1="43.3" x2="108.4" y2="44.0"/><line x1="72.7" y1="10.5" x2="73.5" y2="4.3"/><line x1="144.0" y1="27.6" x2="148.3" y2="28.8"/><line x1="88.9" y1="155.3" x2="89.4" y2="151.3"/><line x1="35.8" y1="84.4" x2="40.2" y2="86.7"/><line x1="18.6" y1="165.6" x2="19.4" y2="159.6"/><line x1="274.0" y1="22.0" x2="274.8" y2="15.6"/><line x1="325.1" y1="184.6" x2="332.3" y2="186.7"/><line x1="136.3" y1="30.0" x2="137.2" y2="23.1"/><line x1="321.0" y1="3.0" x2="321.8" y2="-3.8"/><line x1="145.3" y1="146.1" x2="152.7" y2="148.1"/><line x1="142.8" y1="168.7" x2="143.2" y2="165.4"/><line x1="276.6" y1="96.5" x2="279.5" y2="98.3"/><line x1="26.0" y1="16.2" x2="31.4" y2="17.7"/><line x1="57.5" y1="25.4" x2="58.2" y2="19.4"/><line x1="191.2" y1="37.4" x2="191.5" y2="35.0"/><line x1="275.9" y1="169.5" x2="280.8" y2="170.9"/><line x1="276.1" y1="159.9" x2="276.7" y2="155.0"/><line x1="43.7" y1="123.1" x2="47.1" y2="124.0"/><line x1="12.0" y1="129.9" x2="17.3" y2="131.4"/><line x1="170.5" y1="82.5" x2="171.1" y2="77.4"/><line x1="267.8" y1="160.1" x2="268.3" y2="156.2"/><line x1="189.0" y1="166.1" x2="189.5" y2="162.4"/><line x1="146.4" y1="4.7" x2="147.3" y2="-2.0"/><line x1="317.3" y1="41.4" x2="320.3" y2="42.2"/><line x1="182.2" y1="176.7" x2="182.4" y2="174.6"/><line x1="85.7" y1="154.9" x2="86.4" y2="149.1"/><line x1="230.5" y1="19.0" x2="237.4" y2="21.0"/><line x1="89.5" y1="86.0" x2="94.9" y2="87.5"/><line x1="40.0" y1="75.0" x2="40.4" y2="72.2"/><line x1="48.3" y1="106.0" x2="54.5" y2="107.7"/><line x1="307.5" y1="71.9" x2="303.6" y2="74.1"/><line x1="11.9" y1="179.5" x2="12.2" y2="177.2"/><line x1="78.8" y1="62.0" x2="83.3" y2="63.2"/><line x1="267.3" y1="156.8" x2="269.6" y2="157.4"/><line x1="81.8" y1="78.1" x2="84.2" y2="83.4"/><line x1="61.5" y1="60.0" x2="61.9" y2="56.8"/><line x1="45.7" y1="179.4" x2="52.1" y2="181.2"/><line x1="265.4" y1="163.6" x2="272.7" y2="164.4"/><line x1="87.2" y1="125.5" x2="90.7" y2="126.5"/><line x1="203.8" y1="46.4" x2="208.7" y2="47.7"/><line x1="94.3" y1="56.5" x2="99.8" y2="58.7"/><line x1="314.6" y1="170.4" x2="321.7" y2="172.3"/><line x1="175.1" y1="27.5" x2="177.7" y2="28.2"/><line x1="300.3" y1="106.8" x2="297.9" y2="109.5"/><line x1="94.2" y1="84.0" x2="94.9" y2="77.9"/><line x1="66.0" y1="131.4" x2="65.3" y2="136.1"/><line x1="156.7" y1="151.5" x2="157.0" y2="149.3"/><line x1="168.1" y1="70.9" x2="173.4" y2="72.4"/><line x1="53.2" y1="176.1" x2="57.0" y2="177.2"/><line x1="93.4" y1="182.7" x2="93.9" y2="178.9"/><line x1="180.8" y1="112.1" x2="178.8" y2="115.7"/><line x1="127.2" y1="81.4" x2="128.0" y2="75.0"/><line x1="324.5" y1="125.4" x2="331.8" y2="127.4"/><line x1="46.0" y1="37.5" x2="49.7" y2="41.8"/><line x1="31.2" y1="158.4" x2="38.4" y2="160.4"/><line x1="257.5" y1="131.1" x2="264.7" y2="133.1"/><line x1="1.4" y1="141.7" x2="1.5" y2="147.2"/><line x1="49.1" y1="157.2" x2="52.6" y2="158.2"/><line x1="124.5" y1="83.7" x2="129.1" y2="84.9"/><line x1="115.8" y1="97.3" x2="121.1" y2="98.8"/><line x1="258.2" y1="157.2" x2="258.8" y2="152.2"/><line x1="176.1" y1="148.5" x2="176.7" y2="144.0"/><line x1="28.8" y1="170.2" x2="29.3" y2="166.3"/><line x1="314.5" y1="37.8" x2="318.9" y2="39.0"/><line x1="8.4" y1="47.5" x2="12.7" y2="53.4"/><line x1="253.7" y1="99.6" x2="253.3" y2="107.6"/><line x1="238.5" y1="79.6" x2="243.1" y2="80.8"/><line x1="148.6" y1="1.9" x2="148.9" y2="-0.5"/><line x1="122.8" y1="74.2" x2="123.5" y2="68.8"/><line x1="316.3" y1="90.0" x2="314.6" y2="94.3"/><line x1="112.6" y1="98.1" x2="119.2" y2="99.9"/><line x1="120.3" y1="13.9" x2="124.0" y2="14.9"/><line x1="226.3" y1="151.8" x2="227.2" y2="143.9"/><line x1="207.0" y1="97.0" x2="207.8" y2="90.1"/><line x1="135.2" y1="11.1" x2="140.3" y2="12.9"/><line x1="325.9" y1="117.8" x2="328.1" y2="118.4"/><line x1="100.6" y1="127.8" x2="102.6" y2="128.3"/><line x1="192.3" y1="123.6" x2="192.3" y2="126.8"/><line x1="186.0" y1="161.2" x2="186.9" y2="153.8"/><line x1="188.4" y1="76.1" x2="190.8" y2="77.3"/><line x1="35.0" y1="18.5" x2="35.3" y2="15.5"/><line x1="201.1" y1="149.2" x2="203.4" y2="149.3"/><line x1="105.9" y1="132.4" x2="109.9" y2="133.5"/><line x1="206.2" y1="159.0" x2="207.1" y2="151.3"/><line x1="147.5" y1="71.3" x2="145.4" y2="72.1"/><line x1="250.6" y1="8.1" x2="250.9" y2="5.8"/><line x1="14.4" y1="172.2" x2="15.3" y2="165.1"/><line x1="99.6" y1="111.5" x2="107.1" y2="113.5"/><line x1="79.7" y1="72.1" x2="85.8" y2="73.8"/><line x1="130.7" y1="131.7" x2="132.8" y2="132.2"/><line x1="56.9" y1="66.3" x2="59.9" y2="67.1"/><line x1="129.9" y1="67.1" x2="133.8" y2="68.2"/><line x1="132.2" y1="12.1" x2="134.9" y2="12.8"/></g><polygon points="0.0,28.5 328.0,110.0 328.0,147.0 0.0,48.6" fill="#ff4343"/><polygon points="0.0,28.5 328.0,110.0 328.0,122.0 0.0,30.0" fill="#e23b3b"/><polygon points="137.0,94.0 149.0,88.0 167.0,96.0 155.0,102.0" fill="#33e433"/><line x1="2" y1="23" x2="325" y2="100" stroke="#3f9f3f" stroke-width=".7" opacity=".6"/><line x1="27" y1="19" x2="297" y2="181" stroke="#3f9f3f" stroke-width=".7" opacity=".6"/><line x1="114" y1="2" x2="325" y2="67" stroke="#3f9f3f" stroke-width=".7" opacity=".6"/><line x1="177" y1="2" x2="325" y2="34.5" stroke="#3f9f3f" stroke-width=".7" opacity=".6"/><line x1="269.6" y1="2" x2="325" y2="9" stroke="#3f9f3f" stroke-width=".7" opacity=".6"/><line x1="257" y1="2" x2="128.70000000000005" y2="181" stroke="#3f9f3f" stroke-width=".7" opacity=".6"/><text x="0.5" y="25.5" font-size="4.5" fill="#4fd04f" font-family="Liberation Sans" font-weight="bold">C</text><text x="24.5" y="22.5" font-size="4.5" fill="#4fd04f" font-family="Liberation Sans" font-weight="bold">W</text><text x="112.5" y="6.5" font-size="4.5" fill="#4fd04f" font-family="Liberation Sans" font-weight="bold">V</text><text x="175.5" y="6.5" font-size="4.5" fill="#4fd04f" font-family="Liberation Sans" font-weight="bold">U</text><text x="267.5" y="6.5" font-size="4.5" fill="#4fd04f" font-family="Liberation Sans" font-weight="bold">T</text><text x="321.5" y="12.5" font-size="4.5" fill="#4fd04f" font-family="Liberation Sans" font-weight="bold">T</text><text x="321.5" y="38.5" font-size="4.5" fill="#4fd04f" font-family="Liberation Sans" font-weight="bold">U</text><text x="321.5" y="70.5" font-size="4.5" fill="#4fd04f" font-family="Liberation Sans" font-weight="bold">V</text><text x="321.5" y="103.5" font-size="4.5" fill="#4fd04f" font-family="Liberation Sans" font-weight="bold">C</text><text x="293.5" y="184.5" font-size="4.5" fill="#4fd04f" font-family="Liberation Sans" font-weight="bold">W</text><text x="125.5" y="184.5" font-size="4.5" fill="#4fd04f" font-family="Liberation Sans" font-weight="bold">2</text><text x="256.5" y="6.5" font-size="4.5" fill="#4fd04f" font-family="Liberation Sans" font-weight="bold">2</text><rect x="8" y="171.5" width="61" height="7" fill="#444" opacity=".9"/><text x="9" y="177" font-size="4.6" fill="#eee" font-family="Liberation Sans" font-weight="bold">MC-Z1 L1 L3 Apartments [2]</text></svg>
<svg class="a" style="left:446px;top:334px;" width="9" height="7" viewBox="0 0 9 7"><path d="M1.5 1.8L4.3 4.6L7.1 1.8" fill="none" stroke="#444" stroke-width="1.25"/></svg>
<div class="a t" style="left:459.00px;top:333.32px;font-size:7.45px;color:#666;transform:scaleX(0.870);">Model viewpoint</div>
<svg class="a" style="left:439px;top:348.5px;" width="468" height="185" viewBox="0 0 468 185"><rect width="468" height="185" fill="#000"/><g stroke="#121212" stroke-width=".8" fill="none"><line x1="6.5" y1="176.2" x2="48.5" y2="120.2"/><line x1="11.5" y1="179.8" x2="53.5" y2="123.8"/><circle cx="9.0" cy="178.0" r="3"/><line x1="49.5" y1="142.2" x2="85.5" y2="94.2"/><line x1="54.5" y1="145.8" x2="90.5" y2="97.8"/><circle cx="52.0" cy="144.0" r="3"/><line x1="138.5" y1="170.2" x2="186.5" y2="106.2"/><line x1="143.5" y1="173.8" x2="191.5" y2="109.8"/><circle cx="141.0" cy="172.0" r="3"/><line x1="192.5" y1="128.2" x2="222.5" y2="88.2"/><line x1="197.5" y1="131.8" x2="227.5" y2="91.8"/><circle cx="195.0" cy="130.0" r="3"/><line x1="270.5" y1="184.2" x2="324.5" y2="112.2"/><line x1="275.5" y1="187.8" x2="329.5" y2="115.8"/><circle cx="273.0" cy="186.0" r="3"/><line x1="329.5" y1="142.2" x2="365.5" y2="94.2"/><line x1="334.5" y1="145.8" x2="370.5" y2="97.8"/><circle cx="332.0" cy="144.0" r="3"/><line x1="105.5" y1="74.2" x2="129.5" y2="42.2"/><line x1="110.5" y1="77.8" x2="134.5" y2="45.8"/><circle cx="108.0" cy="76.0" r="3"/><line x1="399.5" y1="102.2" x2="435.5" y2="54.2"/><line x1="404.5" y1="105.8" x2="440.5" y2="57.8"/><circle cx="402.0" cy="104.0" r="3"/><line x1="252.5" y1="58.2" x2="282.5" y2="18.2"/><line x1="257.5" y1="61.8" x2="287.5" y2="21.8"/><circle cx="255.0" cy="60.0" r="3"/><line x1="5.5" y1="74.2" x2="29.5" y2="42.2"/><line x1="10.5" y1="77.8" x2="34.5" y2="45.8"/><circle cx="8.0" cy="76.0" r="3"/><line x1="375.5" y1="184.2" x2="399.5" y2="152.2"/><line x1="380.5" y1="187.8" x2="404.5" y2="155.8"/><circle cx="378.0" cy="186.0" r="3"/></g><defs><linearGradient id="gd" x1="0" y1="0" x2="95" y2="0" gradientUnits="userSpaceOnUse"><stop offset="0" stop-color="#f40000"/><stop offset="1" stop-color="#d70000"/></linearGradient></defs><polygon points="0.0,0.0 107.5,0.0 468.0,92.0 468.0,176.0 0.0,35.2" fill="url(#gd)"/><polygon points="12.0,0.0 107.5,0.0 468.0,92.0 468.0,114.0" fill="#fe0000"/><polygon points="0.0,25.5 201.0,80.5 201.0,94.9 0.0,35.2" fill="#e80000" opacity=".7"/><polygon points="168.5,86.0 182.0,79.3 201.3,80.5 224.6,86.6 242.2,96.5 213.5,114.7" fill="#11f011"/><path d="M197.0 81.0Q203.0 91.5 224.0 87.0" fill="none" stroke="#0cc00c" stroke-width=".8"/></svg>
<div class="a" style="left:443px;top:353.5px;width:32px;height:18.5px;background:#f7f7f7;border-radius:2px;"></div>
<div class="a" style="left:464px;top:356px;width:0.8px;height:13px;background:#d0d0d0;"></div>
<svg class="a" style="left:448px;top:357px;" width="13" height="11" viewBox="0 0 13 11"><path d="M1 5.5Q6.5 0 12 5.5Q6.5 11 1 5.5Z" fill="none" stroke="#444" stroke-width="1"/><circle cx="6.5" cy="5.5" r="1.7" fill="#444"/></svg>
<svg class="a" style="left:466px;top:358px;" width="6" height="9" viewBox="0 0 6 9"><path d="M1.5 1.5L4.5 4.5L1.5 7.5Z" fill="#444"/></svg>
<div class="a" style="left:826.5px;top:353px;width:79px;height:18px;background:#f7f7f7;border-radius:2px;"></div>
<svg class="a" style="left:831px;top:356px;" width="12" height="12" viewBox="0 0 12 12"><path d="M6 1V11M1 6H11" stroke="#555" stroke-width=".9"/><path d="M6 1L4.5 2.5M6 1L7.5 2.5M6 11L4.5 9.5M6 11L7.5 9.5M1 6L2.5 4.5M1 6L2.5 7.5M11 6L9.5 4.5M11 6L9.5 7.5" stroke="#555" stroke-width=".8" fill="none"/><ellipse cx="6" cy="6" rx="3.5" ry="2" fill="none" stroke="#555" stroke-width=".8"/></svg>
<svg class="a" style="left:851px;top:356px;" width="10" height="12" viewBox="0 0 10 12"><path d="M2 3.5L4.5 1.5H8.5V8.5L6 10.5H2Z" fill="none" stroke="#555" stroke-width=".9"/><path d="M2 3.5H6V10.5M6 3.5L8.5 1.5" fill="none" stroke="#555" stroke-width=".8"/></svg>
<svg class="a" style="left:869px;top:358px;" width="13" height="8" viewBox="0 0 13 8"><rect x="1" y="2.2" width="10" height="3.4" fill="none" stroke="#555" stroke-width="1"/></svg>
<svg class="a" style="left:887px;top:356px;" width="12" height="12" viewBox="0 0 12 12"><path d="M6 1.5V10.5M1.5 6H10.5" stroke="#555" stroke-width="1"/></svg>
<div class="a" style="left:28px;top:604px;width:879px;height:3px;background:#ececec;"></div>
<div class="a" style="left:28px;top:607px;width:879px;height:8px;background:#fff;"></div>
</body></html>
